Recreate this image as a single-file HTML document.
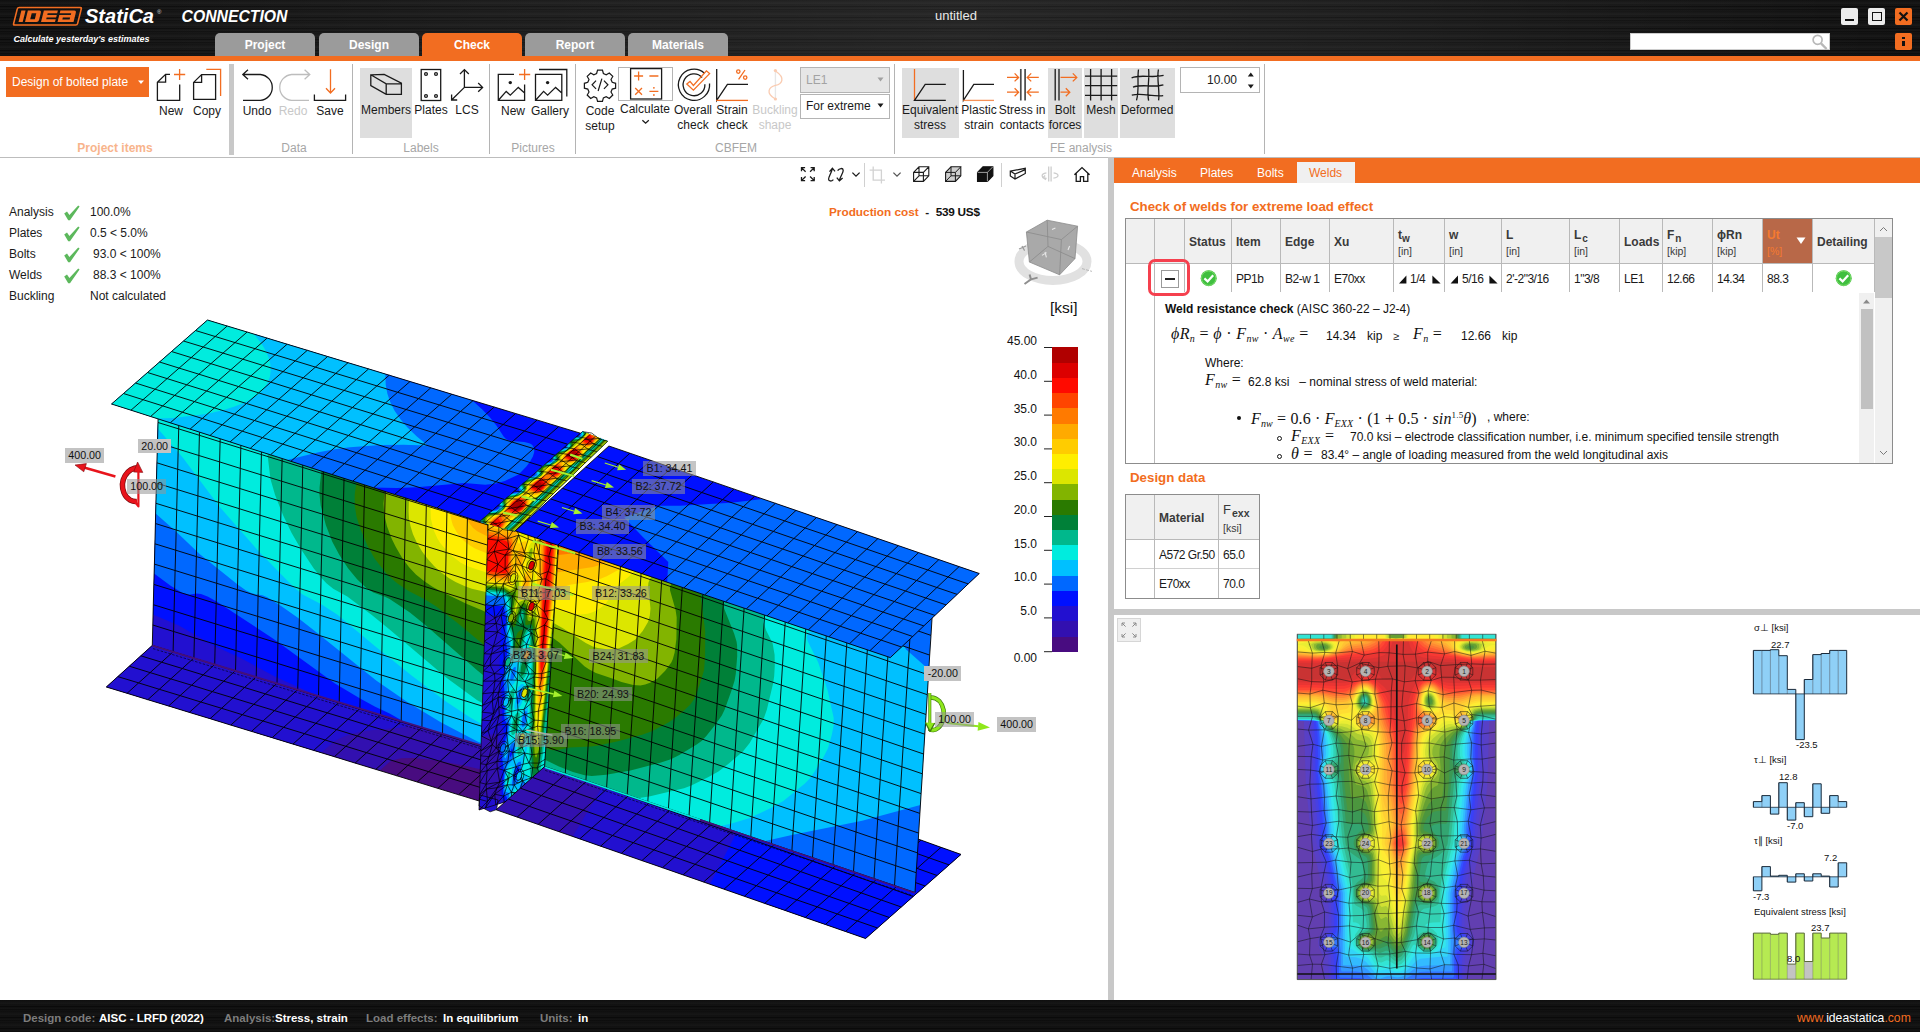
<!DOCTYPE html>
<html><head><meta charset="utf-8"><title>untitled</title>
<style>
*{box-sizing:border-box;margin:0;padding:0}
html,body{width:1920px;height:1032px;overflow:hidden;background:#fff;font-family:"Liberation Sans",sans-serif;font-size:12px;color:#1a1a1a}
.abs{position:absolute}
#hdr{position:absolute;left:0;top:0;width:1920px;height:56px;background:#111;
 background-image:repeating-linear-gradient(180deg,#050505 0,#1c1c1c 1px,#0a0a0a 2px,#232323 3px,#0d0d0d 4px,#181818 5px,#060606 7px,#202020 8px,#0b0b0b 9px,#151515 11px);}
#oline{position:absolute;left:0;top:56px;width:1920px;height:5px;background:#f26d21}
.tab{position:absolute;top:33px;height:23px;width:100px;background:#9b9b9b;border-radius:5px 5px 0 0;color:#fff;font-weight:bold;font-size:12px;text-align:center;line-height:24px}
.tab.on{background:#f26d21}
#ribbon{position:absolute;left:0;top:61px;width:1920px;height:96px;background:#fff}
.rl{position:absolute;font-size:12px;color:#1a1a1a;text-align:center;white-space:nowrap;line-height:15px;transform:translateX(-50%)}
.rl.dis{color:#c8c8c8}
.gl{position:absolute;top:141px;font-size:12px;color:#a6a6a6;transform:translateX(-50%);white-space:nowrap;line-height:15px}
.sep{position:absolute;top:64px;height:90px;width:1px;background:#b4b4b4}
.hl{position:absolute;background:#dedede}
svg{position:absolute;overflow:visible}
.ic{fill:none;stroke:#1a1a1a;stroke-width:1.3;stroke-linecap:butt;stroke-linejoin:miter}
.or{stroke:#f26d21}
.gr{stroke:#bdbdbd}
#status{position:absolute;left:0;top:1000px;width:1920px;height:32px;background:#0e0e0e;
 background-image:repeating-linear-gradient(180deg,#050505 0,#1a1a1a 1px,#0a0a0a 2px,#1f1f1f 3px,#0d0d0d 4px,#161616 5px,#060606 7px,#1c1c1c 8px,#0b0b0b 9px,#141414 11px);}
.st{position:absolute;top:1011px;font-size:11.5px;line-height:15px;white-space:nowrap}
.stg{color:#7d7d7d;font-weight:bold}
.stw{color:#fff;font-weight:bold}
.chk{position:absolute;left:9px;font-size:12px;line-height:15px;white-space:nowrap}
.chv{position:absolute;left:90px;font-size:12px;line-height:15px;white-space:nowrap}
table{border-collapse:collapse}
.th{position:absolute;font-weight:bold;font-size:12px;color:#3a3a3a;white-space:nowrap;line-height:14px}
.tu{position:absolute;font-size:10.5px;color:#3a3a3a;white-space:nowrap;line-height:12px;font-weight:normal}
.td{position:absolute;font-size:12px;color:#1a1a1a;white-space:nowrap;line-height:14px;letter-spacing:-.5px}
.vl{position:absolute;width:1px;background:#b9b9b9}
.hln{position:absolute;height:1px;background:#b9b9b9}
.m{font-family:"Liberation Serif",serif;font-style:italic;letter-spacing:.35px}
.mr{font-family:"Liberation Serif",serif;font-style:normal}
.ft{position:absolute;white-space:nowrap;font-size:12px;line-height:14px;color:#111}
.lab{position:absolute;background:#c3c3c3;font-size:10.7px;line-height:14.6px;padding:0 3.3px;color:#111;white-space:nowrap}
.labt{position:absolute;background:rgba(150,150,150,.55);font-size:10.7px;line-height:14.7px;padding:0 3.6px;color:#111;white-space:nowrap}
.lg{position:absolute;font-size:12px;line-height:14px;text-align:right;width:50px;left:987px;color:#111}
.cl{position:absolute;font-size:9.5px;line-height:11px;white-space:nowrap;color:#111}
</style></head><body>
<div id="hdr"></div>
<div class="abs" style="left:0;top:0;width:1920px;height:56px;background:linear-gradient(90deg,rgba(255,255,255,0) 0%,rgba(255,255,255,.05) 25%,rgba(255,255,255,.085) 50%,rgba(255,255,255,.06) 70%,rgba(255,255,255,0) 100%)"></div>
<!-- logo -->
<svg style="left:0;top:0" width="320" height="56" viewBox="0 0 320 56">
 <g transform="skewX(-14)">
  <rect x="19.5" y="7.5" width="64" height="17.5" rx="1.5" fill="none" stroke="#f26d21" stroke-width="1.6"/>
  <!-- I -->
  <rect x="24" y="10.5" width="4.2" height="11.5" fill="#f26d21"/>
  <!-- D -->
  <path d="M30.5 10.5h11.5q2 0 2 2v7.5q0 2-2 2h-11.5zM35 13.2v6h4.6v-6z" fill="#f26d21" fill-rule="evenodd"/>
  <!-- E -->
  <path d="M46.5 10.5h14v2.8h-9.5v1.6h9.5v2.6h-9.5v1.7h9.5v2.8h-14z" fill="#f26d21"/>
  <!-- A -->
  <path d="M63 10.5h14q2 0 2 2v9.5h-16v-7h11.5v-1.8h-11.5zM67.2 17.6v1.9h7.3v-1.9z" fill="#f26d21" fill-rule="evenodd"/>
 </g>
 <text x="85" y="23" font-family="Liberation Sans" font-weight="bold" font-style="italic" font-size="19.5" fill="#fff" textLength="69" lengthAdjust="spacingAndGlyphs">StatiCa</text>
 <text x="157" y="14" font-family="Liberation Sans" font-size="6" fill="#ddd">®</text>
 <text x="181.5" y="21.8" font-family="Liberation Sans" font-style="italic" font-weight="bold" font-size="16.4" fill="#fff" textLength="106" lengthAdjust="spacingAndGlyphs">CONNECTION</text>
 <text x="13.5" y="42" font-family="Liberation Sans" font-style="italic" font-weight="bold" font-size="9.5" fill="#fff" textLength="136" lengthAdjust="spacingAndGlyphs">Calculate yesterday's estimates</text>
</svg>
<div class="abs" style="left:860px;top:8px;width:192px;text-align:center;color:#e8e8e8;font-size:13px;line-height:16px">untitled</div>
<div class="tab" style="left:215px">Project</div>
<div class="tab" style="left:319px">Design</div>
<div class="tab on" style="left:422px">Check</div>
<div class="tab" style="left:525px">Report</div>
<div class="tab" style="left:628px">Materials</div>
<!-- window buttons -->
<div class="abs" style="left:1841px;top:8px;width:17px;height:17px;background:#ececec;border-radius:2px"></div>
<div class="abs" style="left:1845px;top:19px;width:9px;height:2px;background:#111"></div>
<div class="abs" style="left:1868px;top:8px;width:17px;height:17px;background:#ececec;border-radius:2px"></div>
<div class="abs" style="left:1872px;top:11.5px;width:9.5px;height:9.5px;border:1.6px solid #111"></div>
<div class="abs" style="left:1895px;top:8px;width:17px;height:17px;background:#f26d21;border-radius:2px"></div>
<svg style="left:1895px;top:8px" width="17" height="17"><path d="M4.5 4.5l8 8M12.5 4.5l-8 8" stroke="#111" stroke-width="2.2"/></svg>
<!-- search -->
<div class="abs" style="left:1630px;top:33px;width:200px;height:17px;background:#fff;border:1px solid #ccc"></div>
<svg style="left:1811px;top:33px" width="20" height="18"><circle cx="6.6" cy="6.8" r="4.5" fill="none" stroke="#b8b8b8" stroke-width="1.7"/><path d="M10 10.4l5.6 5.6" stroke="#b8b8b8" stroke-width="2.4"/></svg>
<div class="abs" style="left:1895px;top:33px;width:17px;height:17px;background:#f26d21;border-radius:2px"></div>
<div class="abs" style="left:1902.3px;top:37px;width:2.4px;height:2.4px;background:#111"></div>
<div class="abs" style="left:1902.3px;top:41px;width:2.4px;height:5px;background:#111"></div>
<div id="oline"></div>
<div id="ribbon"></div>
<div class="abs" style="left:0;top:157px;width:1114px;height:1px;background:#bdbdbd"></div>
<!-- project items -->
<div class="abs" style="left:6px;top:67px;width:143px;height:30px;background:#f26d21;color:#fff;font-size:12px;line-height:30px;padding-left:6px">Design of bolted plate</div>
<svg style="left:137px;top:80px" width="8" height="5"><path d="M1 0.5h6l-3 3.5z" fill="#fff"/></svg>
<div class="hl" style="left:360px;top:68px;width:52px;height:70px"></div>
<div class="hl" style="left:902px;top:68px;width:57px;height:70px"></div>
<div class="hl" style="left:1048px;top:68px;width:34px;height:70px"></div>
<div class="hl" style="left:1084px;top:68px;width:34px;height:70px"></div>
<div class="hl" style="left:1120px;top:68px;width:55px;height:70px"></div>
<svg style="left:0;top:61px" width="1300" height="96" viewBox="0 61 1300 96">
 <!-- New -->
 <path class="ic" d="M179.7 84.4V100.4H157.4V82.2L165.6 74.4H170M157.4 82.2H165.6V74.4"/>
 <path class="ic or" d="M179.6 69V80M174 74.5H185.2"/>
 <!-- Copy -->
 <path class="ic" d="M193.6 99.3V82.4L201.6 74.6H215.6V99.3ZM193.6 82.4H201.6V74.6"/>
 <path class="ic or" d="M206.3 69.4H220.6V96"/>
 <!-- Undo -->
 <path class="ic" d="M248 69.8L242.8 74.5L248 79.2M242.8 74.5H260.4A13 13 0 0 1 260.4 100.4H243"/>
 <!-- Redo -->
 <path class="ic gr" d="M304.6 69.8L309.8 74.5L304.6 79.2M309.8 74.5H291.6A13 13 0 0 0 291.6 100.4H309"/>
 <!-- Save -->
 <path class="ic" d="M314.4 94.4V100.4H345.6V94.4"/>
 <path class="ic or" d="M330.5 69.3V93M326 88.2L330.5 93L335 88.2"/>
 <!-- Members -->
 <path class="ic" d="M370.8 74.8L384.2 74.4L401.4 83.2V94.4H386.2L370.8 85.5ZM370.8 74.8L386.2 83.8H401.4M386.2 83.8V94.4"/>
 <!-- Plates -->
 <rect class="ic" x="421.2" y="69.5" width="19.5" height="31"/>
 <circle class="ic" cx="426" cy="74" r="1.4" stroke-width="1"/><circle class="ic" cx="436" cy="74" r="1.4" stroke-width="1"/><circle class="ic" cx="426" cy="96" r="1.4" stroke-width="1"/><circle class="ic" cx="436" cy="96" r="1.4" stroke-width="1"/>
 <!-- LCS -->
 <path class="ic" d="M464.4 69.6V87.4H482.6M464.4 87.4L451.6 100M460 74L464.4 69.6L468.8 74M478.2 83L482.6 87.4L478.2 91.8M451.6 94.5V100H457.2"/>
 <!-- New picture -->
 <path class="ic" d="M524.6 84.5V100.4H498.3V74.4H514M498.6 100L506.2 91.4L510.3 95.2L518.3 87.4L524.6 93"/>
 <circle cx="510.3" cy="82.6" r="1.7" fill="#1a1a1a"/>
 <path class="ic or" d="M524.6 69V80M519 74.5H530.2"/>
 <!-- Gallery -->
 <path class="ic" d="M535.5 74.4H561.8V100.4H535.5ZM535.8 100L543.6 91.4L547.6 95.2L555.6 87.4L561.8 93M539 69.5H566.8V96.4"/>
 <circle cx="547.6" cy="82.6" r="1.7" fill="#1a1a1a"/>
 <!-- Code setup gear -->
 <g transform="translate(600 84.8) scale(.94)">
  <path class="ic" stroke-linejoin="round" d="M-2.6 -15.6h5.2l1 3.6 3 1.3 3.3-1.9 3.7 3.7-1.9 3.3 1.3 3 3.6 1v5.2l-3.6 1-1.3 3 1.9 3.3-3.7 3.7-3.3-1.9-3 1.3-1 3.6h-5.2l-1-3.6-3-1.3-3.3 1.9-3.7-3.7 1.9-3.3-1.3-3-3.6-1v-5.2l3.6-1 1.3-3-1.9-3.3 3.7-3.7 3.3 1.9 3-1.3z"/>
  <path class="ic" d="M-4.2 -4.4L-8.4 0L-4.2 4.4M4.2 -4.4L8.4 0L4.2 4.4M2 -6.6L-2 6.6"/>
 </g>
 <!-- Calculate -->
 <rect x="618.5" y="67.5" width="54" height="33" fill="none" stroke="#b4b4b4" stroke-width="1"/>
 <rect class="ic" x="630.6" y="68.6" width="31" height="30.4" stroke-width="1.5"/>
 <path class="ic or" d="M638.6 71.5V80.5M634.1 76H643.1M649.4 76H658.4M635.2 88L642 94.8M642 88L635.2 94.8M649.4 91.4H658.4"/>
 <circle cx="653.9" cy="87.8" r="0.9" fill="#f26d21"/><circle cx="653.9" cy="95" r="0.9" fill="#f26d21"/>
 <path class="ic" d="M642.4 120.2L645.6 123.2L648.8 120.2" stroke-width="1.2"/>
 <!-- Overall check -->
 <path class="ic" d="M704.44 73.21A15.6 15.6 0 1 0 709.54 83.44M702.1 77.51A10.9 10.9 0 1 0 704.89 84.23"/>
 <path class="ic or" d="M686.8 84L693.4 90.2L709.6 73.6L706.4 70.8L693.4 85.4L690 81.4Z" stroke-width="1.25"/>
 <!-- Strain check -->
 <path class="ic" d="M716.7 69V100.4L727.4 84.4H748"/>
 <path class="ic or" d="M716.2 100.4H748"/>
 <g class="ic or" stroke-width="1.1"><circle cx="738.3" cy="71.6" r="1.7"/><circle cx="745.2" cy="77.6" r="1.7"/><path d="M745 70L738.6 79.4"/></g>
 <!-- Buckling shape -->
 <g opacity=".35"><path class="ic gr" d="M775.4 71V99" stroke="#999"/><path class="ic or" d="M775.4 71C786 78 782 84 775.4 85.4C769 87 765 93 775.4 99"/><circle cx="775.4" cy="70.6" r="1.6" fill="#f26d21"/><circle cx="775.4" cy="99" r="1.6" fill="#f26d21"/></g>
 <!-- Equivalent stress -->
 <path class="ic or" d="M914.5 69V100.4"/>
 <path class="ic" d="M945.8 100.4H914.5L925.2 84.4H945.8"/>
 <!-- Plastic strain -->
 <path class="ic" d="M963.4 70V100.4L973.8 84.4H994"/>
 <path class="ic or" d="M963 100.4H994" opacity=".75"/>
 <!-- Stress in contacts -->
 <path d="M1020.8 69V100.6M1025.1 69V100.6" stroke="#4a4a4a" stroke-width="1.7" fill="none"/>
 <path class="ic or" stroke-width="1.1" d="M1007 77.4H1018.6M1014.6 73.4L1018.6 77.4L1014.6 81.4M1007 92.2H1018.6M1014.6 88.2L1018.6 92.2L1014.6 96.2M1038.8 77.4H1027.2M1031.2 73.4L1027.2 77.4L1031.2 81.4M1038.8 92.2H1027.2M1031.2 88.2L1027.2 92.2L1031.2 96.2"/>
 <!-- Bolt forces -->
 <path class="ic" d="M1055.2 69V100.6M1059 69V100.6" stroke-width="1.2"/>
 <path class="ic or" stroke-width="1.1" d="M1060.5 77.4H1076.8M1072.8 73.4L1076.8 77.4L1072.8 81.4M1060.5 92.2H1069.8M1065.8 88.2L1069.8 92.2L1065.8 96.2"/>
 <!-- Mesh -->
 <path class="ic" stroke-width="1.2" d="M1090.6 69V100.6M1101.1 69V100.6M1111.6 69V100.6M1085 76.2H1117.2M1085 85.6H1117.2M1085 95.4H1117.2"/>
 <!-- Deformed -->
 <path class="ic" stroke-width="1.2" d="M1138.5 69.5C1137 80 1139.5 90 1136.5 100.4M1148.6 69C1149.8 80 1146.6 90 1148.6 100.6M1158.4 69.5C1156.6 80 1160 90 1158.6 100.4M1131.6 77.8C1141 74 1152 78.5 1163.6 75.4M1133 87.2C1142 83.6 1153 88 1163.4 84.8M1131.8 95.2C1142 92.6 1152 96.8 1163.2 95.6"/>
</svg>

<div class="rl" style="left:171px;top:104px">New</div>
<div class="rl" style="left:207px;top:104px">Copy</div>
<div class="rl" style="left:257px;top:104px">Undo</div>
<div class="rl dis" style="left:293px;top:104px">Redo</div>
<div class="rl" style="left:330px;top:104px">Save</div>
<div class="rl" style="left:386px;top:103px">Members</div>
<div class="rl" style="left:431px;top:103px">Plates</div>
<div class="rl" style="left:467px;top:103px">LCS</div>
<div class="rl" style="left:513px;top:104px">New</div>
<div class="rl" style="left:550px;top:104px">Gallery</div>
<div class="rl" style="left:600px;top:104px">Code<br>setup</div>
<div class="rl" style="left:645px;top:102px">Calculate</div>
<div class="rl" style="left:693px;top:103px">Overall<br>check</div>
<div class="rl" style="left:732px;top:103px">Strain<br>check</div>
<div class="rl dis" style="left:775px;top:103px">Buckling<br>shape</div>
<div class="rl" style="left:930px;top:103px">Equivalent<br>stress</div>
<div class="rl" style="left:979px;top:103px">Plastic<br>strain</div>
<div class="rl" style="left:1022px;top:103px">Stress in<br>contacts</div>
<div class="rl" style="left:1065px;top:103px">Bolt<br>forces</div>
<div class="rl" style="left:1101px;top:103px">Mesh</div>
<div class="rl" style="left:1147px;top:103px">Deformed</div>
<div class="gl" style="left:115px;color:#f8b48c;font-weight:bold">Project items</div>
<div class="gl" style="left:294px">Data</div>
<div class="gl" style="left:421px">Labels</div>
<div class="gl" style="left:533px">Pictures</div>
<div class="gl" style="left:736px">CBFEM</div>
<div class="gl" style="left:1081px">FE analysis</div>
<div class="abs" style="left:229px;top:64px;width:5px;height:91px;background:#c8c8c8"></div>
<div class="sep" style="left:352px"></div>
<div class="sep" style="left:489px"></div>
<div class="sep" style="left:575px"></div>
<div class="sep" style="left:894px"></div>
<div class="sep" style="left:1264px"></div>
<!-- dropdowns -->
<div class="abs" style="left:800px;top:67px;width:90px;height:26px;background:#e6e6e6;border:1px solid #b4b4b4;color:#a3a3a3;font-size:12px;line-height:24px;padding-left:5px">LE1</div>
<svg style="left:877px;top:77px" width="8" height="5"><path d="M0.5 0.5h6l-3 4z" fill="#a0a0a0"/></svg>
<div class="abs" style="left:800px;top:94px;width:90px;height:25px;background:#fff;border:1px solid #b4b4b4;color:#1a1a1a;font-size:12px;line-height:23px;padding-left:5px">For extreme</div>
<svg style="left:877px;top:103px" width="8" height="5"><path d="M0.5 0.5h6l-3 4z" fill="#1a1a1a"/></svg>
<!-- spinbox -->
<div class="abs" style="left:1180px;top:67px;width:80px;height:26px;background:#fff;border:1px solid #b4b4b4;color:#1a1a1a;font-size:12px;line-height:24px;text-align:right;padding-right:22px">10.00</div>
<svg style="left:1247px;top:72px" width="8" height="18"><path d="M0.8 4.6h6l-3-4z M0.8 12.4h6l-3 4z" fill="#1a1a1a"/></svg>
<!-- divider -->
<div class="abs" style="left:1108px;top:157px;width:6px;height:843px;background:#c8c8c8"></div>
<!-- checks -->
<div class="chk" style="top:205px">Analysis</div><div class="chv" style="top:205px">100.0%</div>
<div class="chk" style="top:226px">Plates</div><div class="chv" style="top:226px">0.5 &lt; 5.0%</div>
<div class="chk" style="top:247px">Bolts</div><div class="chv" style="top:247px;left:93px">93.0 &lt; 100%</div>
<div class="chk" style="top:268px">Welds</div><div class="chv" style="top:268px;left:93px">88.3 &lt; 100%</div>
<div class="chk" style="top:289px">Buckling</div><div class="chv" style="top:289px">Not calculated</div>
<svg style="left:62px;top:201px" width="20" height="90">
 <g fill="#5cb85c"><path id="ck" d="M2.2 12.6L5 10.6L7.4 14L16.2 4.4L17.6 5.4L8 19.2L6.2 19.2Z"/>
 <use href="#ck" y="21"/><use href="#ck" y="42"/><use href="#ck" y="63"/></g>
</svg>
<!-- viewport toolbar -->
<svg style="left:790px;top:160px" width="310" height="30" viewBox="790 160 310 30">
 <g class="ic" stroke-width="1.2">
  <!-- fullscreen -->
  <path d="M801.5 171.2V167.6H805.1M801.5 167.6L805.6 171.7M810.6 167.6H814.2V171.2M814.2 167.6L810.1 171.7M801.5 177V180.6H805.1M801.5 180.6L805.6 176.5M810.6 180.6H814.2V177M814.2 180.6L810.1 176.5"/>
  <!-- rotate -->
  <path d="M829.5 171.6L832.4 168.2L835 171.4M832.4 168.6C831 174 828.5 177 828.6 179.2C828.8 181.6 831.6 181.4 833.4 179.6M837.6 170.6C839.4 168 843 167.8 843.2 170.2C843.4 173 840.4 176 839.4 180.4M836.8 177.6L839.4 180.8L842.6 178"/>
  <path d="M852.4 172.6L856 176.2L859.6 172.6"/>
  <path d="M893.4 172.6L897 176.2L900.6 172.6" stroke="#555"/>
  <!-- crop (disabled) -->
  <path d="M873.2 166.6V180.2H885M869.6 170.2H881.4V183.6" stroke="#d2d2d2"/>
  <!-- wire cube -->
  <path d="M913.6 172.4L919 166.8H928.8V175.8L923.4 181.4H913.6ZM913.6 172.4H923.4V181.4M923.4 172.4L928.8 166.8M919 166.8V175.8H928.8M919 175.8L913.6 181.4" stroke-width="1.1"/>
  <!-- grey cube -->
  <path d="M945.6 172.4L951 166.8H960.8V175.8L955.4 181.4H945.6Z" fill="#cfcfcf" stroke-width="1.1"/>
  <path d="M945.6 172.4H955.4V181.4M955.4 172.4L960.8 166.8M951 166.8V175.8H960.8M951 175.8L945.6 181.4" stroke-width="1"/>
  <!-- black cube -->
  <path d="M977.6 172.4L983 166.8H992.8V175.8L987.4 181.4H977.6Z" fill="#111" stroke="#111"/>
  <path d="M977.6 172.4H987.4V181.4M987.4 172.4L992.8 166.8" stroke="#fff" stroke-width=".6"/>
  <!-- beam -->
  <path d="M1010.3 171.1L1025.3 168.3V173.5L1015 179.1L1010.3 175.9ZM1010.3 171.1L1015 174L1025.3 169.6M1015 174V179.1" stroke-width="1.2"/>
  <!-- mirror (disabled) -->
  <path d="M1048.7 166.4V181.6M1051.1 166.4V181.6M1046.4 172.8C1040.6 173.8 1040.8 177.6 1046.6 178.4M1053.6 172.8C1059.6 173.8 1059.4 177.4 1053.4 178.2M1045.2 175.6L1043 177.6L1046 179.6" stroke="#cdcdcd"/>
  <!-- home -->
  <path d="M1074.4 174.8L1082 167.6L1089.6 174.8M1076.2 173.4V181.4H1080.4V176.6H1083.6V181.4H1087.8V173.4"/>
 </g>
 <path d="M864.5 163V187M1001.5 163V187" stroke="#d0d0d0" stroke-width="1"/>
</svg>
<div class="abs" style="left:829px;top:204.5px;font-size:11.8px;font-weight:bold;line-height:15px;white-space:nowrap"><span style="color:#f26d21">Production cost</span>&nbsp; - &nbsp;<span style="color:#111;letter-spacing:-.3px">539 US$</span></div>
<!-- nav cube -->
<svg style="left:1005px;top:212px" width="100" height="80" viewBox="1005 212 100 80">
 <ellipse cx="1053" cy="261.5" rx="34" ry="19" fill="none" stroke="#e1e1e1" stroke-width="9"/>
 <path d="M1026.4 232L1047.2 220.2L1077.6 226.2L1075 258.6L1059.6 274.8L1029.4 262Z" fill="#a9a9a9" stroke="#8a8a8a" stroke-width=".8"/>
 <path d="M1026.4 232L1061.4 239.6L1077.6 226.2M1061.4 239.6L1059.6 274.8M1047.2 220.2L1048 246.4L1029.4 262M1048 246.4L1075 258.6" fill="none" stroke="#8a8a8a" stroke-width=".8"/>
 <path d="M1019 249L1026 246M1022 246L1024.6 250.6" stroke="#9a9a9a" stroke-width="1.2" fill="none"/>
 <path d="M1024.5 284L1031 279.4L1029.6 274.4M1031 279.4L1037.6 277.6" stroke="#8f8f8f" stroke-width="2" fill="none"/>
 <path d="M1082 268.6L1092 271.4" stroke="#aaa" stroke-width=".8" stroke-dasharray="3 1.2"/>
 <path d="M1042 255.4L1046.6 252.6M1045 252L1046.4 257.4M1052 229.4L1055.4 228M1068 250L1069.6 246" stroke="#e8e8e8" stroke-width="1.1" fill="none"/>
</svg>
<div class="abs" style="left:1050px;top:299px;font-size:15.5px;line-height:18px;color:#111">[ksi]</div>
<!-- legend -->
<svg style="left:1040px;top:340px" width="45" height="320" viewBox="1040 340 45 320">
 <g shape-rendering="crispEdges">
 <rect x="1052" y="347" width="26" height="16" fill="#b00000"/>
 <rect x="1052" y="362.6" width="26" height="16" fill="#dc0000"/>
 <rect x="1052" y="377.8" width="26" height="16" fill="#ff0a00"/>
 <rect x="1052" y="393" width="26" height="16" fill="#ff4400"/>
 <rect x="1052" y="408.2" width="26" height="16" fill="#ff7a00"/>
 <rect x="1052" y="423.5" width="26" height="16" fill="#ffaa00"/>
 <rect x="1052" y="438.7" width="26" height="16" fill="#ffcc00"/>
 <rect x="1052" y="453.9" width="26" height="16" fill="#ffee00"/>
 <rect x="1052" y="469.1" width="26" height="16" fill="#dce600"/>
 <rect x="1052" y="484.3" width="26" height="16" fill="#82b400"/>
 <rect x="1052" y="499.5" width="26" height="16" fill="#2a7a00"/>
 <rect x="1052" y="514.8" width="26" height="16" fill="#008038"/>
 <rect x="1052" y="530" width="26" height="16" fill="#00b88c"/>
 <rect x="1052" y="545.2" width="26" height="16" fill="#00ecde"/>
 <rect x="1052" y="560.4" width="26" height="16" fill="#00c0ff"/>
 <rect x="1052" y="575.6" width="26" height="16" fill="#0068ff"/>
 <rect x="1052" y="590.8" width="26" height="16" fill="#0010ff"/>
 <rect x="1052" y="606" width="26" height="16" fill="#2210d0"/>
 <rect x="1052" y="621.3" width="26" height="16" fill="#3210b0"/>
 <rect x="1052" y="636.5" width="26" height="15.5" fill="#480c80"/>
 </g>
 <path d="M1044 347.5H1052M1044 381.3H1052M1044 415.1H1052M1044 448.9H1052M1044 482.7H1052M1044 516.5H1052M1044 550.3H1052M1044 584.1H1052M1044 617.9H1052M1044 651.7H1052" stroke="#222" stroke-width="1"/>
</svg>
<div class="lg" style="top:334px">45.00</div>
<div class="lg" style="top:368px">40.0</div>
<div class="lg" style="top:402px">35.0</div>
<div class="lg" style="top:435px">30.0</div>
<div class="lg" style="top:469px">25.0</div>
<div class="lg" style="top:503px">20.0</div>
<div class="lg" style="top:537px">15.0</div>
<div class="lg" style="top:570px">10.0</div>
<div class="lg" style="top:604px">5.0</div>
<div class="lg" style="top:651px">0.00</div>
<svg style="left:0;top:300px" width="1040" height="680" viewBox="0 300 1040 680">
<g stroke-linejoin="round">
<path d="M198.3 603.8L571 718L479.2 801L106.3 687Z" fill="#480c80"/>
<path d="M198.3 603.8L493.8 694.3L571 718L506.7 776.1L485.1 770.2L459.9 764.7L432.5 760L414 758L401.1 758.3L392.3 760.4L389.1 762.2L379.8 770.6L106.3 687Z" fill="#3210b0" fill-rule="evenodd"/>
<path d="M198.3 603.8L456.3 682.9L457.4 683.2L410.8 725.2L403.7 727.3L365.7 730.8L349.2 734.5L341.1 737.7L334.5 741.3L321.2 752.7L106.3 687Z" fill="#2210d0" fill-rule="evenodd"/>
<path d="M198.3 603.8L186.8 614.2L175.3 624.6L163.8 635L152.3 645.4L140.8 655.8L129.3 666.2L117.8 676.6L106.3 687M219.1 610.2L207.6 620.6L196.1 631L184.6 641.4L173.1 651.8L161.6 662.2L150.1 672.6L138.6 682.9L127.1 693.3M239.8 616.5L228.3 626.9L216.8 637.3L205.3 647.7L193.8 658.1L182.3 668.5L170.8 678.9L159.3 689.3L147.8 699.7M260.5 622.9L249 633.3L237.5 643.7L226 654.1L214.6 664.5L203.1 674.9L191.6 685.2L180.1 695.6L168.6 706M281.3 629.2L269.8 639.6L258.3 650L246.8 660.4L235.3 670.8L223.8 681.2L212.3 691.6L200.8 702L189.3 712.4M302 635.6L290.5 646L279 656.4L267.5 666.8L256 677.1L244.5 687.5L233 697.9L221.6 708.3L210.1 718.7M322.7 641.9L311.2 652.3L299.7 662.7L288.3 673.1L276.8 683.5L265.3 693.9L253.8 704.3L242.3 714.7L230.8 725.1M343.4 648.3L332 658.7L320.5 669.1L309 679.4L297.5 689.8L286 700.2L274.5 710.6L263 721L251.5 731.4M364.2 654.6L352.7 665L341.2 675.4L329.7 685.8L318.2 696.2L306.7 706.6L295.2 717L283.7 727.3L272.2 737.7M384.9 661L373.4 671.4L361.9 681.7L350.4 692.1L338.9 702.5L327.4 712.9L315.9 723.3L304.5 733.7L293 744.1M405.6 667.3L394.1 677.7L382.6 688.1L371.1 698.5L359.6 708.9L348.1 719.2L336.7 729.6L325.2 740L313.7 750.4M426.3 673.7L414.8 684L403.3 694.4L391.8 704.8L380.3 715.2L368.8 725.6L357.4 736L345.9 746.3L334.4 756.7M447 680L435.5 690.4L424 700.8L412.5 711.1L401 721.5L389.5 731.9L378.1 742.3L366.6 752.7L355.1 763.1M467.6 686.3L456.2 696.7L444.7 707.1L433.2 717.5L421.7 727.9L410.2 738.2L398.8 748.6L387.3 759L375.8 769.4M488.3 692.7L476.8 703L465.4 713.4L453.9 723.8L442.4 734.2L430.9 744.6L419.4 755L408 765.3L396.5 775.7M509 699L497.5 709.4L486 719.8L474.6 730.1L463.1 740.5L451.6 750.9L440.1 761.3L428.7 771.7L417.2 782M529.7 705.3L518.2 715.7L506.7 726.1L495.2 736.5L483.8 746.8L472.3 757.2L460.8 767.6L449.3 778L437.9 788.4M550.3 711.7L538.9 722L527.4 732.4L515.9 742.8L504.4 753.2L493 763.6L481.5 773.9L470 784.3L458.5 794.7M571 718L559.5 728.4L548 738.8L536.6 749.1L525.1 759.5L513.6 769.9L502.1 780.3L490.7 790.6L479.2 801M198.3 603.8L219.1 610.2L239.8 616.5L260.5 622.9L281.3 629.2L302 635.6L322.7 641.9L343.4 648.3L364.2 654.6L384.9 661L405.6 667.3L426.3 673.7L447 680L467.6 686.3L488.3 692.7L509 699L529.7 705.3L550.3 711.7L571 718M186.8 614.2L207.6 620.6L228.3 626.9L249 633.3L269.8 639.6L290.5 646L311.2 652.3L332 658.7L352.7 665L373.4 671.4L394.1 677.7L414.8 684L435.5 690.4L456.2 696.7L476.8 703L497.5 709.4L518.2 715.7L538.9 722L559.5 728.4M175.3 624.6L196.1 631L216.8 637.3L237.5 643.7L258.3 650L279 656.4L299.7 662.7L320.5 669.1L341.2 675.4L361.9 681.7L382.6 688.1L403.3 694.4L424 700.8L444.7 707.1L465.4 713.4L486 719.8L506.7 726.1L527.4 732.4L548 738.8M163.8 635L184.6 641.4L205.3 647.7L226 654.1L246.8 660.4L267.5 666.8L288.3 673.1L309 679.4L329.7 685.8L350.4 692.1L371.1 698.5L391.8 704.8L412.5 711.1L433.2 717.5L453.9 723.8L474.6 730.1L495.2 736.5L515.9 742.8L536.6 749.1M152.3 645.4L173.1 651.8L193.8 658.1L214.6 664.5L235.3 670.8L256 677.1L276.8 683.5L297.5 689.8L318.2 696.2L338.9 702.5L359.6 708.9L380.3 715.2L401 721.5L421.7 727.9L442.4 734.2L463.1 740.5L483.8 746.8L504.4 753.2L525.1 759.5M140.8 655.8L161.6 662.2L182.3 668.5L203.1 674.9L223.8 681.2L244.5 687.5L265.3 693.9L286 700.2L306.7 706.6L327.4 712.9L348.1 719.2L368.8 725.6L389.5 731.9L410.2 738.2L430.9 744.6L451.6 750.9L472.3 757.2L493 763.6L513.6 769.9M129.3 666.2L150.1 672.6L170.8 678.9L191.6 685.2L212.3 691.6L233 697.9L253.8 704.3L274.5 710.6L295.2 717L315.9 723.3L336.7 729.6L357.4 736L378.1 742.3L398.8 748.6L419.4 755L440.1 761.3L460.8 767.6L481.5 773.9L502.1 780.3M117.8 676.6L138.6 682.9L159.3 689.3L180.1 695.6L200.8 702L221.6 708.3L242.3 714.7L263 721L283.7 727.3L304.5 733.7L325.2 740L345.9 746.3L366.6 752.7L387.3 759L408 765.3L428.7 771.7L449.3 778L470 784.3L490.7 790.6M106.3 687L127.1 693.3L147.8 699.7L168.6 706L189.3 712.4L210.1 718.7L230.8 725.1L251.5 731.4L272.2 737.7L293 744.1L313.7 750.4L334.4 756.7L355.1 763.1L375.8 769.4L396.5 775.7L417.2 782L437.9 788.4L458.5 794.7L479.2 801" fill="none" stroke="#000" stroke-width="0.95" stroke-opacity="0.95"/>
<path d="M159.5 362L530 477.5L525 760L152.3 645.4Z" fill="#2210d0"/>
<path d="M159.5 362L530 477.5L525 760L327.7 699.3L314.6 694.5L274.8 676.5L239.7 657.5L216 646.8L178.9 625.6L153.1 614.5Z" fill="#0010ff" fill-rule="evenodd"/>
<path d="M159.5 362L530 477.5L525 760L408.9 724.3L405.9 722.8L389.6 713.6L375.2 706.7L360.1 698.4L335 683.4L273.3 638.7L217.4 602L208.1 596.8L201 594.1L196.3 593.5L189.2 594.8L182.1 592.7L170.6 585.7L154.1 573.4Z" fill="#0068ff" fill-rule="evenodd"/>
<path d="M159.5 362L530 477.5L525.2 750.2L494.8 746.4L485.4 744.4L478.4 742.1L441.2 722.6L407.3 702.1L376.2 680.4L313.2 629.7L297.5 617.6L281.1 605.9L267.2 597.2L262.5 595.3L255.4 594.2L250.7 592.8L246.1 590.5L237.6 584.6L199.6 554L176.5 531.9L155.7 513.5Z" fill="#00c0ff" fill-rule="evenodd"/>
<path d="M159.5 362L530 477.5L525.5 731.6L499.8 728.7L490.4 727L481.1 723.7L469.5 717.1L446.3 701.8L411.6 675.5L374.5 645.8L337.5 614.8L321.3 604.3L302.6 594.6L293.4 586.8L258.8 551.4L219.6 506.8L183.1 457.9L157.8 428.4Z" fill="#00ecde" fill-rule="evenodd"/>
<path d="M237.2 386.2L530 477.5L525.8 713.9L490.8 706.5L483.8 703.9L476.9 699.9L446.8 678.1L389 629L372.1 615.3L347.3 596.6L333.2 588.8L326.4 583.2L321.5 578L313.8 568.4L301.7 550.2L291.5 532.7L283.2 515.6L275.1 495.1L270.5 479.3L266 441.9L263.9 431.4L261.3 422.5L257.8 414.2L252.8 405.1L246.3 396.2Z" fill="#00b88c" fill-rule="evenodd"/>
<path d="M319.6 411.9L530 477.5L526.2 694.8L500.6 685.3L491.3 680.6L484.3 676.1L477.4 670.6L424.4 624.2L409.9 612.6L389.6 599.1L385 596.8L373.3 592.5L366.3 587.9L357.1 579.3L348 568.2L339.1 554.6L332.3 541.7L325.9 525.3L320.7 505.7L319.5 494.5L319.6 487.3L323.3 452.5L324 438.4L322.6 423.6Z" fill="#008038" fill-rule="evenodd"/>
<path d="M358.6 424.1L530 477.5L526.5 673.3L512.6 665.7L496.4 654.7L484.9 645.8L457.2 622.7L435.9 606.2L424.8 599.2L408.6 591.1L397.5 583.5L390.5 577.7L385.4 572.6L374.4 558.3L367.4 545.4L360.3 528.7L356.5 516.8L354.7 505.4L354.7 494.6L359.1 463.7L360.4 449.7L360.3 435.4Z" fill="#2a7a00" fill-rule="evenodd"/>
<path d="M385.6 432.5L530 477.5L527 648.8L515.5 638.7L498.7 622L490.2 614.7L483.2 610.7L466.9 604.1L439.1 590.5L432.1 586.5L423.7 580.8L415.9 574.6L409.1 567.2L402.2 557.9L395.8 546.9L391.6 538.5L387 526.2L384.2 514.6L383.5 503.6L386.4 475.8L387.2 458.1L386.8 443.6Z" fill="#82b400" fill-rule="evenodd"/>
<path d="M408.7 439.7L530 477.5L527.5 620.6L509 604.8L502.1 599.9L495.2 595.8L485.9 591.9L471.9 588.7L464.9 586.2L455.6 582L448.7 577.9L439.9 571.4L434 566L428 559.3L422.1 551.5L416.9 542.7L413 534.3L410.6 526.4L409 518.7L408.6 511.4L410 465.2Z" fill="#dce600" fill-rule="evenodd"/>
<path d="M430.1 446.4L530 477.5L527.9 597.3L511.7 585.7L497.9 577.5L486.3 572.4L467.7 566.2L460.7 562.7L449.2 553.8L440 542.7L437.3 538.2L433.6 529.9L430.8 518.3L430.1 489.4Z" fill="#ffee00" fill-rule="evenodd"/>
<path d="M450.5 452.7L530 477.5L528.2 577.4L514.4 568.4L498.2 559.1L488.9 554.3L475 548.5L470.4 545.8L465.8 542.6L461.4 538.6L456.6 532.1L452.9 525.2L451.6 521.1L450 513.5L448 498.5L447.9 484.1L450 463.3Z" fill="#ffcc00" fill-rule="evenodd"/>
<path d="M469.6 458.7L530 477.5L528.6 559.3L489.2 537.3L477.7 531.6L473.1 527.9L469.2 523L467.1 518.8L464.4 510.8L462.9 499.6L463.7 489.1L469.2 465.7Z" fill="#ffaa00" fill-rule="evenodd"/>
<path d="M486.5 463.9L530 477.5L528.9 541.9L510.4 532.6L487.2 522.6L482.6 519.6L479.6 515.5L478.2 507.9L478.8 500.9L484.7 477.7Z" fill="#ff7a00" fill-rule="evenodd"/>
<path d="M505 469.7L530 477.5L529.2 521.1L515.4 511.2L511.8 507.6L508.6 502.7L507 499L505.6 491.3Z" fill="#ff4400" fill-rule="evenodd"/>
<path d="M159.5 362L159 382.1L158.5 402.3L158 422.5L157.5 442.6L156.9 462.8L156.4 483.1L155.9 503.3L155.4 523.5L154.9 543.8L154.4 564.1L153.8 584.4L153.3 604.7L152.8 625L152.3 645.4M180.2 368.5L179.7 388.6L179.2 408.7L178.7 428.9L178.2 449.1L177.7 469.3L177.2 489.5L176.7 509.7L176.2 530L175.7 550.2L175.1 570.5L174.6 590.8L174.1 611.1L173.6 631.5L173.1 651.8M200.9 374.9L200.4 395L199.9 415.2L199.4 435.3L198.9 455.5L198.4 475.7L197.9 495.9L197.4 516.1L196.9 536.4L196.4 556.6L195.9 576.9L195.4 597.2L194.9 617.5L194.4 637.9L193.9 658.2M221.5 381.3L221.1 401.5L220.6 421.6L220.1 441.8L219.6 461.9L219.1 482.1L218.6 502.3L218.1 522.6L217.6 542.8L217.2 563L216.7 583.3L216.2 603.6L215.7 623.9L215.2 644.2L214.7 664.6M242.2 387.8L241.7 407.9L241.2 428L240.8 448.2L240.3 468.4L239.8 488.5L239.3 508.7L238.8 529L238.4 549.2L237.9 569.5L237.4 589.7L236.9 610L236.4 630.3L236 650.6L235.5 671M262.8 394.2L262.4 414.3L261.9 434.5L261.4 454.6L261 474.8L260.5 495L260 515.2L259.5 535.4L259.1 555.6L258.6 575.9L258.1 596.1L257.7 616.4L257.2 636.7L256.7 657L256.2 677.4M283.5 400.6L283 420.8L282.5 440.9L282.1 461L281.6 481.2L281.2 501.4L280.7 521.6L280.2 541.8L279.8 562L279.3 582.3L278.8 602.5L278.4 622.8L277.9 643.1L277.5 663.4L277 683.7M304.1 407.1L303.6 427.2L303.2 447.3L302.7 467.4L302.3 487.6L301.8 507.8L301.4 528L300.9 548.2L300.5 568.4L300 588.6L299.6 608.9L299.1 629.2L298.6 649.5L298.2 669.8L297.7 690.1M324.7 413.5L324.2 433.6L323.8 453.7L323.3 473.9L322.9 494L322.5 514.2L322 534.4L321.6 554.6L321.1 574.8L320.7 595L320.2 615.3L319.8 635.6L319.3 655.9L318.9 676.2L318.5 696.5M345.3 419.9L344.8 440L344.4 460.1L344 480.3L343.5 500.4L343.1 520.6L342.7 540.8L342.2 561L341.8 581.2L341.4 601.4L340.9 621.7L340.5 641.9L340 662.2L339.6 682.5L339.2 702.9M365.8 426.3L365.4 446.4L365 466.5L364.6 486.7L364.1 506.8L363.7 527L363.3 547.2L362.9 567.4L362.4 587.6L362 607.8L361.6 628.1L361.2 648.3L360.7 668.6L360.3 688.9L359.9 709.2M386.4 432.7L386 452.8L385.6 472.9L385.2 493.1L384.7 513.2L384.3 533.4L383.9 553.6L383.5 573.7L383.1 594L382.7 614.2L382.2 634.4L381.8 654.7L381.4 675L381 695.3L380.6 715.6M407 439.1L406.5 459.2L406.1 479.3L405.7 499.5L405.3 519.6L404.9 539.8L404.5 559.9L404.1 580.1L403.7 600.3L403.3 620.6L402.9 640.8L402.5 661.1L402 681.3L401.6 701.6L401.2 721.9M427.5 445.5L427.1 465.6L426.7 485.7L426.3 505.9L425.9 526L425.5 546.1L425.1 566.3L424.7 586.5L424.3 606.7L423.9 626.9L423.5 647.2L423.1 667.4L422.7 687.7L422.3 708L421.9 728.3M448 451.9L447.6 472L447.2 492.1L446.9 512.2L446.5 532.4L446.1 552.5L445.7 572.7L445.3 592.9L444.9 613.1L444.5 633.3L444.1 653.5L443.7 673.8L443.3 694.1L442.9 714.3L442.5 734.6M468.5 458.3L468.2 478.4L467.8 498.5L467.4 518.6L467 538.8L466.6 558.9L466.2 579.1L465.9 599.3L465.5 619.4L465.1 639.7L464.7 659.9L464.3 680.1L463.9 700.4L463.6 720.7L463.2 741M489 464.7L488.7 484.8L488.3 504.9L487.9 525L487.5 545.1L487.2 565.3L486.8 585.4L486.4 605.6L486 625.8L485.7 646L485.3 666.3L484.9 686.5L484.5 706.8L484.2 727L483.8 747.3M509.5 471.1L509.2 491.2L508.8 511.3L508.4 531.4L508.1 551.5L507.7 571.7L507.3 591.8L507 612L506.6 632.2L506.2 652.4L505.9 672.6L505.5 692.8L505.1 713.1L504.8 733.4L504.4 753.7M530 477.5L529.6 497.6L529.3 517.7L528.9 537.8L528.6 557.9L528.2 578L527.9 598.2L527.5 618.3L527.1 638.5L526.8 658.7L526.4 679L526.1 699.2L525.7 719.4L525.4 739.7L525 760M159.5 362L180.2 368.5L200.9 374.9L221.5 381.3L242.2 387.8L262.8 394.2L283.5 400.6L304.1 407.1L324.7 413.5L345.3 419.9L365.8 426.3L386.4 432.7L407 439.1L427.5 445.5L448 451.9L468.5 458.3L489 464.7L509.5 471.1L530 477.5M159 382.1L179.7 388.6L200.4 395L221.1 401.5L241.7 407.9L262.4 414.3L283 420.8L303.6 427.2L324.2 433.6L344.8 440L365.4 446.4L386 452.8L406.5 459.2L427.1 465.6L447.6 472L468.2 478.4L488.7 484.8L509.2 491.2L529.6 497.6M158.5 402.3L179.2 408.7L199.9 415.2L220.6 421.6L241.2 428L261.9 434.5L282.5 440.9L303.2 447.3L323.8 453.7L344.4 460.1L365 466.5L385.6 472.9L406.1 479.3L426.7 485.7L447.2 492.1L467.8 498.5L488.3 504.9L508.8 511.3L529.3 517.7M158 422.5L178.7 428.9L199.4 435.3L220.1 441.8L240.8 448.2L261.4 454.6L282.1 461L302.7 467.4L323.3 473.9L344 480.3L364.6 486.7L385.2 493.1L405.7 499.5L426.3 505.9L446.9 512.2L467.4 518.6L487.9 525L508.4 531.4L528.9 537.8M157.5 442.6L178.2 449.1L198.9 455.5L219.6 461.9L240.3 468.4L261 474.8L281.6 481.2L302.3 487.6L322.9 494L343.5 500.4L364.1 506.8L384.7 513.2L405.3 519.6L425.9 526L446.5 532.4L467 538.8L487.5 545.1L508.1 551.5L528.6 557.9M156.9 462.8L177.7 469.3L198.4 475.7L219.1 482.1L239.8 488.5L260.5 495L281.2 501.4L301.8 507.8L322.5 514.2L343.1 520.6L363.7 527L384.3 533.4L404.9 539.8L425.5 546.1L446.1 552.5L466.6 558.9L487.2 565.3L507.7 571.7L528.2 578M156.4 483.1L177.2 489.5L197.9 495.9L218.6 502.3L239.3 508.7L260 515.2L280.7 521.6L301.4 528L322 534.4L342.7 540.8L363.3 547.2L383.9 553.6L404.5 559.9L425.1 566.3L445.7 572.7L466.2 579.1L486.8 585.4L507.3 591.8L527.9 598.2M155.9 503.3L176.7 509.7L197.4 516.1L218.1 522.6L238.8 529L259.5 535.4L280.2 541.8L300.9 548.2L321.6 554.6L342.2 561L362.9 567.4L383.5 573.7L404.1 580.1L424.7 586.5L445.3 592.9L465.9 599.3L486.4 605.6L507 612L527.5 618.3M155.4 523.5L176.2 530L196.9 536.4L217.6 542.8L238.4 549.2L259.1 555.6L279.8 562L300.5 568.4L321.1 574.8L341.8 581.2L362.4 587.6L383.1 594L403.7 600.3L424.3 606.7L444.9 613.1L465.5 619.4L486 625.8L506.6 632.2L527.1 638.5M154.9 543.8L175.7 550.2L196.4 556.6L217.2 563L237.9 569.5L258.6 575.9L279.3 582.3L300 588.6L320.7 595L341.4 601.4L362 607.8L382.7 614.2L403.3 620.6L423.9 626.9L444.5 633.3L465.1 639.7L485.7 646L506.2 652.4L526.8 658.7M154.4 564.1L175.1 570.5L195.9 576.9L216.7 583.3L237.4 589.7L258.1 596.1L278.8 602.5L299.6 608.9L320.2 615.3L340.9 621.7L361.6 628.1L382.2 634.4L402.9 640.8L423.5 647.2L444.1 653.5L464.7 659.9L485.3 666.3L505.9 672.6L526.4 679M153.8 584.4L174.6 590.8L195.4 597.2L216.2 603.6L236.9 610L257.7 616.4L278.4 622.8L299.1 629.2L319.8 635.6L340.5 641.9L361.2 648.3L381.8 654.7L402.5 661.1L423.1 667.4L443.7 673.8L464.3 680.1L484.9 686.5L505.5 692.8L526.1 699.2M153.3 604.7L174.1 611.1L194.9 617.5L215.7 623.9L236.4 630.3L257.2 636.7L277.9 643.1L298.6 649.5L319.3 655.9L340 662.2L360.7 668.6L381.4 675L402 681.3L422.7 687.7L443.3 694.1L463.9 700.4L484.5 706.8L505.1 713.1L525.7 719.4M152.8 625L173.6 631.5L194.4 637.9L215.2 644.2L236 650.6L256.7 657L277.5 663.4L298.2 669.8L318.9 676.2L339.6 682.5L360.3 688.9L381 695.3L401.6 701.6L422.3 708L442.9 714.3L463.6 720.7L484.2 727L504.8 733.4L525.4 739.7M152.3 645.4L173.1 651.8L193.9 658.2L214.7 664.6L235.5 671L256.2 677.4L277 683.7L297.7 690.1L318.5 696.5L339.2 702.9L359.9 709.2L380.6 715.6L401.2 721.9L421.9 728.3L442.5 734.6L463.2 741L483.8 747.3L504.4 753.7L525 760" fill="none" stroke="#000" stroke-width="0.95" stroke-opacity="0.95"/>
<path d="M488.3 520.5L558.5 537L543.5 790L479 810Z" fill="#3210b0"/>
<path d="M488.3 520.5L558.5 537L543.5 790L499 803.8L500.5 781.9L498.9 768.4L498.9 745.7L497.8 733.9L497 733.5L481.4 736.2Z" fill="#2210d0" fill-rule="evenodd"/>
<path d="M488.3 520.5L558.5 537L543.5 790L505.4 801.8L504.9 800.6L502.1 798.6L501.6 796.3L502.3 775.7L500.7 762.2L501.4 749.2L504.1 733.3L502 725.1L502.5 700.8L501.3 691L500.5 675.9L500.1 673L499.3 672.2L501.5 615.9L485.3 615Z" fill="#0010ff" fill-rule="evenodd"/>
<path d="M488.3 520.5L558.5 537L543.5 790L523.1 796.3L523.7 788.6L523.4 786.6L522.7 785.9L521.5 787.1L520.5 789.6L518.9 797.6L507.3 801.2L506.8 797L503.8 794.5L503.1 792L504 770.7L502.2 758.4L503.1 748.8L506.9 734L507.6 727.9L507.4 724.4L504.8 720L504.2 716.4L504.9 695.6L503.5 680.8L504.1 669.4L507.5 651.4L505.3 637.2L505.9 616.2L504.3 609.1L502.7 606.1L485.6 604.8ZM511.6 748.8L509.7 754.4L509.8 756.7L510.5 757L512.1 754.1L512.7 751.5L512.6 749.2L512.4 748.5ZM517.3 767L515.8 769.8L514.5 774.8L514.2 779.3L514.6 780.3L515.3 780.6L517.5 777.9L519.2 771.7L519.2 766.9L518.8 766.3Z" fill="#0068ff" fill-rule="evenodd"/>
<path d="M488.3 520.5L558.5 537L543.5 790L524.8 795.8L525 783.9L524.3 781.7L522.9 781.7L521.5 782.9L520 785.7L517.5 798.1L508.7 800.8L509.1 792.9L505.3 791.7L504.3 788.8L504.7 777.3L506.8 766.5L508 764.5L511.6 760.8L513.3 757L514.6 751.1L515.1 745.2L514.8 743.3L514.1 742.4L512.7 742.8L511.1 744.4L508.9 748.8L506 757.6L505.2 758.5L504.3 756.7L504.4 752.1L508.1 734.9L509.3 724.1L509 720.5L506.4 716.1L505.7 712.6L505.7 705.3L507.2 686.7L505.7 679.4L505.6 674.4L506.4 668L509.2 655.2L509.9 645L507.1 633.3L507.3 616.3L506.9 610.9L503.9 597.9L503.1 597L485.9 595.3ZM513.8 667.4L512.1 670.2L510.9 674L510.2 679.1L510.9 680.7L512.4 680.2L513.6 678.8L515.5 673.8L515.8 667.6L515.3 666.8ZM520.3 688.9L518.4 691.8L517 696.6L516.5 701.6L516.7 703.2L517.4 704.1L518.1 704L519.7 702.3L521.7 696.3L522.1 690.3L521.8 689.1L521.1 688.6ZM525.8 710.7L523.7 713.7L522.3 718.5L521.7 724.4L522.1 726.7L522.8 727L524.3 726L525.1 724.7L526.3 720.2L526.8 713.2L526.5 711.4ZM518.3 762.2L515.6 765.5L514 770.4L511.9 783.3L511.9 785.5L512.8 786.3L517.4 782.9L518.8 780.3L519.7 777.4L521 768.7L521.2 763.1L520.4 761.5Z" fill="#00c0ff" fill-rule="evenodd"/>
<path d="M488.3 520.5L558.5 537L545.4 757.9L538.8 791.5L529 794.5L526.8 773.9L523.1 777.4L522.1 777.2L521.7 775.1L523.6 759.2L526.8 749.5L527.1 740.4L526.4 741.2L524.1 752.4L523.1 754.8L519.8 757.8L516.2 759.8L515.4 758.8L515.4 756.6L517.3 737.7L516.6 737L515.9 737.2L509.8 740.8L509.3 739.4L511 717.9L510.3 715.6L507.9 713.4L507.2 711.2L506.8 706.4L507.4 699L509.8 688.8L514.6 682.4L515.8 679.9L517.3 672.8L518.1 665L517.8 662.4L516.5 661.3L514.8 662L510.8 664.8L510.3 664.1L511.3 642.4L508.4 630.8L508.3 611L506.1 597.4L505.3 596L503.2 594.8L486 593.1ZM521.3 684.1L518.3 687L516.5 691.8L514.3 705.5L514.3 707.9L514.9 709.4L517.2 708.9L519.5 707.2L521 705L522 702.2L523.5 693.7L524.2 686.5L523.5 683.9ZM527.2 638L525.8 642.5L526.1 645.2L527.5 643.7L528.2 641.3L528 637.6ZM524.5 707.6L522.8 710.3L521.6 715.2L519.5 728.3L519.7 732.6L521.9 731.8L524.9 729.5L526.1 727.1L527 723.6L528 715.4L528 708.4L527.4 706.7L526.7 706.4ZM509.4 767L511.6 765.9L512.3 766.2L512.3 770.8L509.9 783.8L508.5 787.3L506.9 788.4L506.2 788.1L505.4 786.2L505.6 778.2L507.1 771ZM514.8 789.1L516.3 788.5L517 789.5L516.1 798.5L510 800.4L511.8 793.1Z" fill="#00ecde" fill-rule="evenodd"/>
<path d="M488.3 520.5L558.5 537L548.4 707.9L544.4 743.6L540.3 771.2L536.6 788.2L535.1 791.8L533.7 793L532.5 791.8L531.4 787.8L529.9 770.7L529.3 747.9L529.8 702.4L529.1 700.9L525.5 702.5L524.7 701.9L524.3 699.5L526.4 684.1L527.3 681.3L530.1 676.5L531 672.8L531.8 664.4L531.6 657.2L530.7 655.6L529.5 657.2L526.9 671.9L525.3 676.6L522.2 679.9L519.2 680.8L518.5 679.7L518.5 674.8L521.6 655L514.2 658.3L513.4 658.2L512.5 656.4L512.5 638.6L509.9 630.4L509.3 626.9L509.3 607.1L507.8 597.6L505.7 594.5L503.2 593.1L486 591.4ZM527.5 632.3L525.9 635.1L524.3 640L521.9 654.7L527 651.2L529 647.4L530.1 640L530.1 633.8L529.7 632.1L529 631.5ZM511.5 690L512.8 688.8L513.6 688.8L514.3 689.5L514.4 694.6L512 707.7L511.2 709.4L509.6 710.1L508.3 707.4L508.3 701.4L509.5 694.5ZM516.2 713.6L518.5 712.4L519.5 713.1L519.8 716.6L518.8 723.7L517.7 728.6L516.1 732.3L513.8 734.7L512.3 735.1L511.5 734.3L511.2 732L512.1 723.6L513.8 716.9ZM521.7 735.9L523.9 734.7L524.6 735.4L524.3 743.4L522.4 750.8L520.8 753.4L518.6 754.9L517.9 754.6L517.4 752.7L517.9 745.8L519.4 739.8ZM508.2 773L509.1 771.8L509.9 772L510.1 775.9L508.7 782.3L507.9 783.6L507.2 783.6L506.7 779.1ZM513 796.2L513.9 794.9L514.6 795.4L514.2 799.1L512 799.8Z" fill="#00b88c" fill-rule="evenodd"/>
<path d="M488.3 520.5L558.5 537L550.3 669.4L541.6 751.7L537.4 775.1L535.8 780L534.4 781.2L533.2 779.1L532.2 773.4L531.3 754.1L531.6 718.3L533.2 658.3L532.9 652.3L531.4 645L531.3 630.1L530 627.7L528.5 628L526.4 630L524.4 634.3L519.9 650.5L517.5 653.5L515.9 654.4L514.4 654.1L513.5 650.1L513.9 634.8L511 628.2L510.3 624.3L510.6 604.5L509.8 597.8L506.5 593.5L504.1 591.7L486.1 589.6ZM521.7 611.5L520 614.3L518.9 618.2L518.6 623.3L519.5 624.6L521.9 622.7L523.7 617.2L523.5 612L522.5 611ZM524.5 658.6L526.2 658.2L526.9 659.7L526.5 665.9L524.8 672.4L523.2 675.1L521.7 676L521 675.6L520.4 673.5L520.9 667.3L522.4 661.8ZM527.1 688.6L528.5 685.9L529.1 686.7L529.2 690.8L528.4 694.4L527.2 696.9L526.5 696.7L526.3 695.8L526.4 692.2ZM511 696.2L511.8 695.4L512.2 698.5L511.5 702.5L510.6 703.9L509.9 702.8L509.9 701.2ZM516.2 718.3L517 718.2L517.5 719.3L517.2 723.8L515.5 728.5L514 729.7L513.3 728.1L513.6 724.6L514.5 720.9ZM521.1 741.7L522.2 741L522.5 743.7L521.9 746.5L520.3 749.2L519.6 748.8L519.6 746.6Z" fill="#008038" fill-rule="evenodd"/>
<path d="M488.3 520.5L558.5 537L552.2 643.5L550.2 657.8L541.2 744.3L538 762.7L535.7 769.2L535 769.3L534.4 768.3L533.8 765.4L532.6 747.2L534.4 657.1L534.2 645.1L532.6 626.4L532.3 625.2L530.9 624.1L526.4 625.3L525.3 624.9L525.5 610.8L524.9 607.8L523.5 606.5L521.9 607.2L520.2 609.4L517.9 615.5L515.7 624.9L514.8 626.6L513.2 626.9L511.7 624.5L511.2 620.4L512.5 599.3L512.1 596.6L504.2 590L486.1 587.9ZM520.8 629.8L522.4 629.7L522.8 631.1L521.3 641.2L519.2 647.5L517.6 649.7L516.1 650.2L515.3 649.4L514.9 646.3L515.9 636.9L517.7 632.4Z" fill="#2a7a00" fill-rule="evenodd"/>
<path d="M488.3 520.5L558.5 537L553.1 628.2L549.5 655.8L541 735.6L538.8 750.1L536.4 757.4L535.7 757.2L535.1 755.8L534.6 752.8L534 740.3L535.5 646.2L534.6 620.3L534.1 618.4L533.4 618.3L530.3 620.9L528.8 621L527.6 619.9L526.6 605.8L525.9 603.8L524.4 603L522 603.9L519.7 606.5L515.1 620.3L514.2 621.6L513.4 621.7L512.6 619.2L512.6 611.3L515.8 594.3L515.6 590.8L512.3 592.4L510.7 592.5L504.3 588.2L486.2 586.1ZM518 639.9L518.9 639L518.9 641.2L518 642.8Z" fill="#82b400" fill-rule="evenodd"/>
<path d="M488.3 520.5L523.5 528.8L523.9 529.9L524.9 529.1L558.5 537L553.9 614.8L550.5 638.8L541.7 721.3L539.4 737L537.8 744.1L537 745.3L536.4 744.9L535.7 741L535.1 725.6L536.6 635.2L536.5 617.9L535.9 612.2L535.2 610.3L534.5 610.5L531.2 616.6L529.7 617.1L529 616.3L528.4 613.6L528.1 602L526.8 599.9L525.3 599.8L521.4 601L518.2 602.8L515.4 612.3L514.6 613.1L514.8 607.6L517.3 601.1L518.5 593.3L518.9 582.7L518.4 580.7L517.6 580.3L516 582.2L513.6 587.4L512.4 588.9L510.8 589.7L509.2 589.4L504.3 586.5L486.2 584.4ZM530.9 548.2L529.5 550.7L528.6 554.6L528.6 558.6L529.5 559.6L531.2 557.8L532.5 552.6L532.4 548.5L531.7 547.8Z" fill="#dce600" fill-rule="evenodd"/>
<path d="M488.3 520.5L521 528.2L520.7 533.7L521.2 536.2L522 536.9L523.6 536.8L525.2 535.4L527.5 529.7L558.5 537L554.5 605.1L551.5 621.2L545.9 676.6L541.4 714.7L539.4 727.2L537.8 731.5L537.2 730.5L536.7 727.2L536.2 710.8L537.8 617.9L537 604.9L535.7 600.4L535 600.6L534.7 601.3L532.3 610.2L530.7 612.6L530 611.3L529.8 608.6L530.9 599.7L533.7 593.5L535 586.2L535.3 575.6L534.9 574L534.1 574.2L532.3 580.5L531.2 589.4L530 593.1L527.8 595.5L523.9 597.2L521.6 596.9L520.5 594.8L520.3 588.1L521 577.6L520.2 575.4L519.5 575L517 576L512.6 585.2L510.6 587.1L509.3 587L504.4 584.8L486.3 582.7ZM531.1 542.7L528.6 546.6L526.7 555.6L526.2 563.6L526.7 565L527.7 565.6L530.1 564.7L531.7 562.8L533 559.4L534 554.2L534.6 547.6L534.3 543.5L533.5 542.1Z" fill="#ffee00" fill-rule="evenodd"/>
<path d="M486.4 580.8L488.3 520.5L508.4 525.6L509.5 525.5L519.5 527.8L518 538.7L518.2 543L518.5 543.4L519.3 543.4L524.2 541.3L526.5 541.4L526.8 543.3L526 550L523 566.4L521.3 569.2L516.4 572.6L511.9 582.2L510.2 584.2L508.6 584.2L504.5 583ZM529.1 530.1L557 536.6L552.7 605.4L550.8 618.6L544.1 685.9L541.1 707.8L539.3 716.4L538.6 717.4L537.6 711.5L537.2 683L538.8 611.4L538.1 597.7L536.8 590L537.4 567.8L536.8 565L535.4 563.6L534.9 561L536.9 538.7L536 537L529 538.3L528.5 536.8ZM525.9 571.6L529.8 569.6L531.3 570.1L531.7 573.8L530.9 580.2L528.8 590.1L526.4 593.2L524.1 594L522.6 593L521.9 591L522.2 583.9L524.2 574.2Z" fill="#ffcc00" fill-rule="evenodd"/>
<path d="M513.2 526.4L517.9 527.5L512.8 554.4L512.5 561.3L513.7 571.1L511.3 578.2L509.5 580.3L507.1 580.7L486.4 578.4L488.1 527L505.7 530.9L509 532.5L510.8 531.5ZM531.1 530.6L533.3 531.1L535.3 531.6L533.9 533.1L532.4 533.2L531.6 532.5ZM541.7 533L556.7 536.6L553.2 593.1L550 618.6L546.6 657.9L542.9 688.1L541 699.2L540.1 702.4L539.4 703L538.1 689.2L538 665.3L539.7 616.8L539.2 589ZM520.7 547.6L522.3 546.7L523.1 546.9L523.9 548L523.8 555L521.6 563.5L519.9 565.8L518.3 566.2L516.5 564.7L516.5 560.6L518.2 552.6ZM526.8 575.7L528 575.1L529.1 576L529.2 581.3L527.4 588.7L525 590.4L524.2 590L523.5 588.5L523.7 584.6L524.8 579.4Z" fill="#ffaa00" fill-rule="evenodd"/>
<path d="M543.6 533.5L556.4 536.5L552.5 590.6L549.3 617.3L546 658L542.5 684.2L540.7 690.7L540.1 690.9L538.9 681.7L538.8 658.2L540.6 616.8L540.8 589.2ZM486.5 575.9L487.9 531.6L505.5 535.4L511.3 537.9L512.2 538.9L513 544.7L510.8 558.3L511.2 572.1L509.3 576L507.2 577.6L503.8 578.2Z" fill="#ff7a00" fill-rule="evenodd"/>
<path d="M545.1 533.9L555.1 536.2L551.2 590.4L548.5 617.3L545.3 658L543 674.3L541.3 681L540.6 681L539.9 677L539.5 658.2L541.4 618.1L542.1 589.3ZM486.6 573.4L487.9 534.4L505.4 538L508.7 540L510.7 542.8L511.2 544.3L509.2 560.8L509.2 571.9L507.4 574.4L505.6 575.5L503.9 575.7Z" fill="#ff4400" fill-rule="evenodd"/>
<path d="M546.5 534.2L553.8 535.9L544.7 656.8L543.6 664.4L541.8 671.3L541.2 670.9L540.7 667.8L540.3 656.9L543.3 590.8ZM486.7 570.9L487.8 537.1L505.3 540.7L507.6 542.2L509 543.9L507.3 571.6L505.7 572.9L504 573.3Z" fill="#ff0a00" fill-rule="evenodd"/>
<path d="M548 534.5L552.2 535.5L543.6 656.8L542.4 661.4L541.7 660.7L541.4 656.9Z" fill="#dc0000" fill-rule="evenodd"/>
<path d="M479 806L490.2 811.8L496.6 809.6L498 800L480 795Z" fill="#2210d0" stroke="#000" stroke-width=".7"/>
<path d="M488.3 520.5L488 529.8L487.7 539L487.2 553.9L487 559.6L486.6 573.9L486.3 582.9L486 590.7L485.6 604.6L485.4 610.9L485 624.1L484.7 631.2L484.4 641.3L484 653.7L483.6 666.6L483.5 670.8L483.1 681.2L482.7 693.8L482.4 705.6L482.1 712.2L481.9 720.1L481.5 733.6L481.4 735.9L480.9 750.9L480.7 755.8L480.5 763.7L480.2 772.4L479.9 782.6L479.5 794.9L479.3 799.2L479 810M498.8 523L498.8 532.6L497.9 540.3L494.2 551.4L498 564.3L495.1 575.5L495.7 583.5L497.5 597L493.5 605.7L495 618.1L496.1 623.4L497.5 631.9L493.3 646.5L491.2 654.1L490.1 665.1L494.5 673.6L495 681L493.4 692.5L492.3 700.8L493.5 713.4L491 720.8L488 730.5L491.3 741L492.3 744.6L489.1 756.7L486.5 764.6L487.2 770.7L486.1 784.2L486.4 789.1L487.5 801.5L485.4 808M507.5 525L507.6 538.7L508.9 549.2L505.2 555.1L505.1 569.1L508.8 573.8L503.4 583.8L503.3 595.8L505.2 604.1L501 614.9L503 625.8L506.2 636.5L503.1 645.4L503.9 650.6L504.7 665.3L504.2 674.7L500.9 681.2L498.7 692.3L498.2 697.4L498.8 707L499.3 715.2L496.8 725.2L497 735.5L496.1 748L499.5 750.9L496.9 761.4L497.3 768.4L499.7 782.1L497.2 787.7L494.7 794.2L495.8 804.8M515.5 526.9L518.8 535.1L513 550.6L516 554.8L515.7 563.8L514.9 581.2L516.6 589L512.6 595.8L511.4 608.5L513.3 618.3L511.8 623.5L514.1 638.8L514 646.8L513.4 655.5L509.5 663.2L510 668.8L507.6 679.9L508.5 691.8L512.3 698.6L511.7 711.3L511.6 715.7L506.9 724.1L506.4 732.7L508.3 745.7L509.3 751.1L507.8 762L504.1 770.3L508.5 778.3L507.3 784.8L503.6 796.1L504.2 802.2M527.7 529.8L528.3 539.1L524.2 552.7L526 556.8L521.9 565.8L525.9 581.3L520.9 590.5L525.5 599.2L521.4 607.6L519.8 612.9L524.1 627.2L521 638.5L520 647.2L522.1 651.5L518.3 661.3L517.7 672.4L517.5 680.2L516.1 692.6L517.2 698.1L518 709.8L516.6 718.7L516.8 724.6L516.7 729.7L515.8 739.4L512.7 752.5L513.4 758.6L516.1 766.7L513.5 775.3L514.3 784.9L511.4 792.3L511.9 799.8M533.2 531L535.6 541.6L533.8 553L535.5 560.6L533.2 570.3L532.1 581.2L531.3 589.4L530.8 601.8L531.7 610.8L532.8 615.5L529.9 629.6L531.4 632.8L526.7 644.1L526 651.6L525.4 663.7L529 674L525 681.7L527.6 686.2L528.2 700.4L524 709.4L524.8 714.6L527.5 724.9L522.6 731.4L524.2 738.8L522 747.4L524.6 753L523.1 764.2L519.8 772.4L522.7 780.8L519.1 792.7L522.8 796.4M545.4 533.9L540.1 540.6L539 554.1L540.1 559L540.1 574.5L542.1 579.2L537.6 593L539.6 600.8L536.6 605.1L539.4 617.1L535.3 629.7L538 637.7L534.4 647L533.9 655.9L535.7 661L535.6 673.7L533.9 677L534.8 686.2L532.1 694.5L531.3 703.3L532.2 712.3L534.2 720.2L532.4 728L531.2 735.4L530.3 743.7L532.2 754.7L528.9 763L532.6 767.7L531.4 777.9L529.2 788.8L528.3 794.7M550.8 535.2L551.1 548.5L548.7 556.4L550.2 564.6L548.2 571.5L545.9 578.8L545.2 592.5L545.9 597.5L544.2 611.4L548 619.3L544.5 625L544 635.4L542.8 644.1L542.7 656.4L546.1 662L541.6 673.6L541.7 678L539.6 686.8L541.6 695.8L539.7 704.3L538.3 711.2L538.2 720.3L537.6 726.1L538.5 735.4L539.4 745.1L539.7 753.7L539 763.1L537.1 767.9L539.8 773.8L537.8 785L534 793M558.5 537L557.8 548.8L557.2 558.4L556.8 565.7L556.2 575.5L555.6 585.1L555.4 589.3L554.7 601L554.2 609.7L553.5 620.8L553 629.3L552.5 638.1L552.1 645L551.5 655.7L551 662.8L550.5 671.3L550.2 676.5L549.8 683.6L549.3 692.5L548.7 702.2L548.3 708.7L547.6 721.6L547.2 727.8L546.7 736.3L546.2 744.2L545.7 752.4L545.3 759.1L545.1 763.8L544.3 776.5L543.9 783.9L543.5 790M488.3 520.5L498.8 523L507.5 525L515.5 526.9L527.7 529.8L533.2 531L545.4 533.9L550.8 535.2L558.5 537M488 529.8L498.8 532.6L507.6 538.7L518.8 535.1L528.3 539.1L535.6 541.6L540.1 540.6L551.1 548.5L557.8 548.8M487.7 539L497.9 540.3L508.9 549.2L513 550.6L524.2 552.7L533.8 553L539 554.1L548.7 556.4L557.2 558.4M487.2 553.9L494.2 551.4L505.2 555.1L516 554.8L526 556.8L535.5 560.6L540.1 559L550.2 564.6L556.8 565.7M487 559.6L498 564.3L505.1 569.1L515.7 563.8L521.9 565.8L533.2 570.3L540.1 574.5L548.2 571.5L556.2 575.5M486.6 573.9L495.1 575.5L508.8 573.8L514.9 581.2L525.9 581.3L532.1 581.2L542.1 579.2L545.9 578.8L555.6 585.1M486.3 582.9L495.7 583.5L503.4 583.8L516.6 589L520.9 590.5L531.3 589.4L537.6 593L545.2 592.5L555.4 589.3M486 590.7L497.5 597L503.3 595.8L512.6 595.8L525.5 599.2L530.8 601.8L539.6 600.8L545.9 597.5L554.7 601M485.6 604.6L493.5 605.7L505.2 604.1L511.4 608.5L521.4 607.6L531.7 610.8L536.6 605.1L544.2 611.4L554.2 609.7M485.4 610.9L495 618.1L501 614.9L513.3 618.3L519.8 612.9L532.8 615.5L539.4 617.1L548 619.3L553.5 620.8M485 624.1L496.1 623.4L503 625.8L511.8 623.5L524.1 627.2L529.9 629.6L535.3 629.7L544.5 625L553 629.3M484.7 631.2L497.5 631.9L506.2 636.5L514.1 638.8L521 638.5L531.4 632.8L538 637.7L544 635.4L552.5 638.1M484.4 641.3L493.3 646.5L503.1 645.4L514 646.8L520 647.2L526.7 644.1L534.4 647L542.8 644.1L552.1 645M484 653.7L491.2 654.1L503.9 650.6L513.4 655.5L522.1 651.5L526 651.6L533.9 655.9L542.7 656.4L551.5 655.7M483.6 666.6L490.1 665.1L504.7 665.3L509.5 663.2L518.3 661.3L525.4 663.7L535.7 661L546.1 662L551 662.8M483.5 670.8L494.5 673.6L504.2 674.7L510 668.8L517.7 672.4L529 674L535.6 673.7L541.6 673.6L550.5 671.3M483.1 681.2L495 681L500.9 681.2L507.6 679.9L517.5 680.2L525 681.7L533.9 677L541.7 678L550.2 676.5M482.7 693.8L493.4 692.5L498.7 692.3L508.5 691.8L516.1 692.6L527.6 686.2L534.8 686.2L539.6 686.8L549.8 683.6M482.4 705.6L492.3 700.8L498.2 697.4L512.3 698.6L517.2 698.1L528.2 700.4L532.1 694.5L541.6 695.8L549.3 692.5M482.1 712.2L493.5 713.4L498.8 707L511.7 711.3L518 709.8L524 709.4L531.3 703.3L539.7 704.3L548.7 702.2M481.9 720.1L491 720.8L499.3 715.2L511.6 715.7L516.6 718.7L524.8 714.6L532.2 712.3L538.3 711.2L548.3 708.7M481.5 733.6L488 730.5L496.8 725.2L506.9 724.1L516.8 724.6L527.5 724.9L534.2 720.2L538.2 720.3L547.6 721.6M481.4 735.9L491.3 741L497 735.5L506.4 732.7L516.7 729.7L522.6 731.4L532.4 728L537.6 726.1L547.2 727.8M480.9 750.9L492.3 744.6L496.1 748L508.3 745.7L515.8 739.4L524.2 738.8L531.2 735.4L538.5 735.4L546.7 736.3M480.7 755.8L489.1 756.7L499.5 750.9L509.3 751.1L512.7 752.5L522 747.4L530.3 743.7L539.4 745.1L546.2 744.2M480.5 763.7L486.5 764.6L496.9 761.4L507.8 762L513.4 758.6L524.6 753L532.2 754.7L539.7 753.7L545.7 752.4M480.2 772.4L487.2 770.7L497.3 768.4L504.1 770.3L516.1 766.7L523.1 764.2L528.9 763L539 763.1L545.3 759.1M479.9 782.6L486.1 784.2L499.7 782.1L508.5 778.3L513.5 775.3L519.8 772.4L532.6 767.7L537.1 767.9L545.1 763.8M479.5 794.9L486.4 789.1L497.2 787.7L507.3 784.8L514.3 784.9L522.7 780.8L531.4 777.9L539.8 773.8L544.3 776.5M479.3 799.2L487.5 801.5L494.7 794.2L503.6 796.1L511.4 792.3L519.1 792.7L529.2 788.8L537.8 785L543.9 783.9M479 810L485.4 808L495.8 804.8L504.2 802.2L511.9 799.8L522.8 796.4L528.3 794.7L534 793L543.5 790M488 529.8L498.8 523M498.8 532.6L507.5 525M507.6 538.7L515.5 526.9M487.7 539L498.8 532.6M497.9 540.3L507.6 538.7M508.9 549.2L518.8 535.1M518.8 535.1L524.2 552.7M535.6 541.6L539 554.1M487.2 553.9L497.9 540.3M494.2 551.4L508.9 549.2M505.2 555.1L513 550.6M513 550.6L526 556.8M524.2 552.7L535.5 560.6M487 559.6L494.2 551.4M498 564.3L505.2 555.1M505.1 569.1L516 554.8M516 554.8L521.9 565.8M486.6 573.9L498 564.3M495.1 575.5L505.1 569.1M508.8 573.8L515.7 563.8M515.7 563.8L525.9 581.3M521.9 565.8L532.1 581.2M533.2 570.3L542.1 579.2M486.3 582.9L495.1 575.5M495.7 583.5L508.8 573.8M503.4 583.8L514.9 581.2M486 590.7L495.7 583.5M497.5 597L503.4 583.8M503.3 595.8L516.6 589M520.9 590.5L530.8 601.8M531.3 589.4L539.6 600.8M485.6 604.6L497.5 597M493.5 605.7L503.3 595.8M505.2 604.1L512.6 595.8M512.6 595.8L521.4 607.6M530.8 601.8L536.6 605.1M485.4 610.9L493.5 605.7M495 618.1L505.2 604.1M501 614.9L511.4 608.5M521.4 607.6L532.8 615.5M531.7 610.8L539.4 617.1M485 624.1L495 618.1M496.1 623.4L501 614.9M503 625.8L513.3 618.3M513.3 618.3L524.1 627.2M484.7 631.2L496.1 623.4M497.5 631.9L503 625.8M506.2 636.5L511.8 623.5M524.1 627.2L531.4 632.8M484.4 641.3L497.5 631.9M493.3 646.5L506.2 636.5M503.1 645.4L514.1 638.8M514.1 638.8L520 647.2M521 638.5L526.7 644.1M531.4 632.8L534.4 647M484 653.7L493.3 646.5M491.2 654.1L503.1 645.4M503.9 650.6L514 646.8M520 647.2L526 651.6M483.6 666.6L491.2 654.1M490.1 665.1L503.9 650.6M504.7 665.3L513.4 655.5M522.1 651.5L525.4 663.7M526 651.6L535.7 661M483.5 670.8L490.1 665.1M494.5 673.6L504.7 665.3M504.2 674.7L509.5 663.2M525.4 663.7L535.6 673.7M483.1 681.2L494.5 673.6M495 681L504.2 674.7M500.9 681.2L510 668.8M510 668.8L517.5 680.2M517.7 672.4L525 681.7M482.7 693.8L495 681M493.4 692.5L500.9 681.2M498.7 692.3L507.6 679.9M507.6 679.9L516.1 692.6M525 681.7L534.8 686.2M482.4 705.6L493.4 692.5M492.3 700.8L498.7 692.3M498.2 697.4L508.5 691.8M527.6 686.2L532.1 694.5M482.1 712.2L492.3 700.8M493.5 713.4L498.2 697.4M498.8 707L512.3 698.6M481.9 720.1L493.5 713.4M491 720.8L498.8 707M499.3 715.2L511.7 711.3M518 709.8L524.8 714.6M481.5 733.6L491 720.8M488 730.5L499.3 715.2M496.8 725.2L511.6 715.7M511.6 715.7L516.8 724.6M516.6 718.7L527.5 724.9M524.8 714.6L534.2 720.2M481.4 735.9L488 730.5M491.3 741L496.8 725.2M497 735.5L506.9 724.1M506.9 724.1L516.7 729.7M516.8 724.6L522.6 731.4M527.5 724.9L532.4 728M480.9 750.9L491.3 741M492.3 744.6L497 735.5M496.1 748L506.4 732.7M506.4 732.7L515.8 739.4M516.7 729.7L524.2 738.8M522.6 731.4L531.2 735.4M480.7 755.8L492.3 744.6M489.1 756.7L496.1 748M499.5 750.9L508.3 745.7M515.8 739.4L522 747.4M480.5 763.7L489.1 756.7M486.5 764.6L499.5 750.9M496.9 761.4L509.3 751.1M512.7 752.5L524.6 753M480.2 772.4L486.5 764.6M487.2 770.7L496.9 761.4M497.3 768.4L507.8 762M524.6 753L528.9 763M479.9 782.6L487.2 770.7M486.1 784.2L497.3 768.4M499.7 782.1L504.1 770.3M504.1 770.3L513.5 775.3M516.1 766.7L519.8 772.4M479.5 794.9L486.1 784.2M486.4 789.1L499.7 782.1M497.2 787.7L508.5 778.3M513.5 775.3L522.7 780.8M519.8 772.4L531.4 777.9M479.3 799.2L486.4 789.1M487.5 801.5L497.2 787.7M494.7 794.2L507.3 784.8M507.3 784.8L511.4 792.3M514.3 784.9L519.1 792.7M522.7 780.8L529.2 788.8M479 810L487.5 801.5M485.4 808L494.7 794.2M495.8 804.8L503.6 796.1M511.4 792.3L522.8 796.4" fill="none" stroke="#000" stroke-width=".75" stroke-opacity=".92"/><ellipse cx="531.5" cy="565.5" rx="2.6" ry="4.6" transform="rotate(18 531.5 565.5)" fill="#dc0000" stroke="#000" stroke-width=".7"/><ellipse cx="531.5" cy="565.5" rx="4.6" ry="7" transform="rotate(18 531.5 565.5)" fill="none" stroke="#000" stroke-width=".6"/><ellipse cx="531.5" cy="606.5" rx="2.6" ry="4.6" transform="rotate(18 531.5 606.5)" fill="#dc0000" stroke="#000" stroke-width=".7"/><ellipse cx="531.5" cy="606.5" rx="4.6" ry="7" transform="rotate(18 531.5 606.5)" fill="none" stroke="#000" stroke-width=".6"/><ellipse cx="526.5" cy="655" rx="2.6" ry="4.6" transform="rotate(18 526.5 655)" fill="#ff9a00" stroke="#000" stroke-width=".7"/><ellipse cx="526.5" cy="655" rx="4.6" ry="7" transform="rotate(18 526.5 655)" fill="none" stroke="#000" stroke-width=".6"/><ellipse cx="524.5" cy="693" rx="2.6" ry="4.6" transform="rotate(18 524.5 693)" fill="#dce600" stroke="#000" stroke-width=".7"/><ellipse cx="524.5" cy="693" rx="4.6" ry="7" transform="rotate(18 524.5 693)" fill="none" stroke="#000" stroke-width=".6"/><ellipse cx="522" cy="738" rx="2.6" ry="4.6" transform="rotate(18 522 738)" fill="#dce600" stroke="#000" stroke-width=".7"/><ellipse cx="522" cy="738" rx="4.6" ry="7" transform="rotate(18 522 738)" fill="none" stroke="#000" stroke-width=".6"/><ellipse cx="519" cy="776" rx="2.6" ry="4.6" transform="rotate(18 519 776)" fill="#00c0ff" stroke="#000" stroke-width=".7"/><ellipse cx="519" cy="776" rx="4.6" ry="7" transform="rotate(18 519 776)" fill="none" stroke="#000" stroke-width=".6"/><ellipse cx="513" cy="578" rx="2.6" ry="4.6" transform="rotate(18 513 578)" fill="#dce600" stroke="#000" stroke-width=".7"/><ellipse cx="513" cy="578" rx="4.6" ry="7" transform="rotate(18 513 578)" fill="none" stroke="#000" stroke-width=".6"/><ellipse cx="511" cy="618" rx="2.6" ry="4.6" transform="rotate(18 511 618)" fill="#82b400" stroke="#000" stroke-width=".7"/><ellipse cx="511" cy="618" rx="4.6" ry="7" transform="rotate(18 511 618)" fill="none" stroke="#000" stroke-width=".6"/><ellipse cx="508" cy="662" rx="2.6" ry="4.6" transform="rotate(18 508 662)" fill="#00b88c" stroke="#000" stroke-width=".7"/><ellipse cx="508" cy="662" rx="4.6" ry="7" transform="rotate(18 508 662)" fill="none" stroke="#000" stroke-width=".6"/><ellipse cx="506" cy="702" rx="2.6" ry="4.6" transform="rotate(18 506 702)" fill="#00c0ff" stroke="#000" stroke-width=".7"/><ellipse cx="506" cy="702" rx="4.6" ry="7" transform="rotate(18 506 702)" fill="none" stroke="#000" stroke-width=".6"/><ellipse cx="503" cy="748" rx="2.6" ry="4.6" transform="rotate(18 503 748)" fill="#0068ff" stroke="#000" stroke-width=".7"/><ellipse cx="503" cy="748" rx="4.6" ry="7" transform="rotate(18 503 748)" fill="none" stroke="#000" stroke-width=".6"/>
<path d="M593 723.4L961 854.4L865.6 938.5L496.2 809.8Z" fill="#3210b0"/>
<path d="M631.8 737.2L787.3 792.6L961 854.4L865.6 938.5L572.7 836.4Z" fill="#2210d0" fill-rule="evenodd"/>
<path d="M761.8 783.5L766.4 785.1L961 854.4L865.6 938.5L710 884.3Z" fill="#0010ff" fill-rule="evenodd"/>
<path d="M593 723.4L580.9 734.2L568.8 745L556.6 755.8L544.5 766.7L532.4 777.4L520.4 788.2L508.3 799L496.2 809.8M613.9 730.8L601.8 741.6L589.7 752.4L577.6 763.2L565.5 774L553.4 784.8L541.3 795.6L529.2 806.3L517.2 817.1M634.8 738.3L622.6 749.1L610.5 759.8L598.5 770.6L586.4 781.4L574.3 792.1L562.2 802.9L550.2 813.7L538.1 824.4M655.5 745.7L643.4 756.4L631.4 767.2L619.3 778L607.2 788.7L595.1 799.5L583.1 810.2L571 820.9L559 831.7M676.3 753L664.2 763.8L652.1 774.6L640 785.3L628 796L615.9 806.8L603.9 817.5L591.8 828.2L579.8 838.9M697 760.4L684.9 771.1L672.8 781.9L660.8 792.6L648.7 803.3L636.7 814L624.6 824.8L612.6 835.5L600.6 846.2M717.6 767.8L705.5 778.5L693.5 789.2L681.4 799.9L669.4 810.6L657.3 821.3L645.3 832L633.3 842.7L621.3 853.4M738.2 775.1L726.1 785.8L714.1 796.5L702 807.2L690 817.9L678 828.6L665.9 839.2L653.9 849.9L641.9 860.6M758.7 782.4L746.6 793.1L734.6 803.8L722.6 814.4L710.5 825.1L698.5 835.8L686.5 846.4L674.5 857.1L662.5 867.7M779.2 789.7L767.1 800.3L755.1 811L743.1 821.7L731.1 832.3L719 843L707 853.6L695.1 864.3L683.1 874.9M799.6 796.9L787.5 807.6L775.5 818.2L763.5 828.9L751.5 839.5L739.5 850.2L727.5 860.8L715.5 871.4L703.6 882M819.9 804.2L807.9 814.8L795.9 825.5L783.9 836.1L771.9 846.7L759.9 857.3L747.9 868L736 878.6L724 889.2M840.2 811.4L828.2 822L816.2 832.7L804.2 843.3L792.3 853.9L780.3 864.5L768.3 875.1L756.3 885.7L744.4 896.3M860.5 818.6L848.5 829.2L836.5 839.8L824.5 850.4L812.6 861L800.6 871.6L788.6 882.2L776.7 892.8L764.7 903.4M880.7 825.8L868.7 836.4L856.7 847L844.8 857.6L832.8 868.2L820.8 878.7L808.9 889.3L796.9 899.9L785 910.4M900.9 833L888.9 843.6L876.9 854.1L864.9 864.7L853 875.3L841 885.8L829.1 896.4L817.2 906.9L805.2 917.5M921 840.1L909 850.7L897 861.3L885.1 871.8L873.1 882.4L861.2 892.9L849.2 903.4L837.3 914L825.4 924.5M941 847.3L929 857.8L917.1 868.4L905.1 878.9L893.2 889.4L881.3 900L869.4 910.5L857.4 921L845.5 931.5M961 854.4L949.1 864.9L937.1 875.5L925.2 886L913.2 896.5L901.3 907L889.4 917.5L877.5 928L865.6 938.5M593 723.4L613.9 730.8L634.8 738.3L655.5 745.7L676.3 753L697 760.4L717.6 767.8L738.2 775.1L758.7 782.4L779.2 789.7L799.6 796.9L819.9 804.2L840.2 811.4L860.5 818.6L880.7 825.8L900.9 833L921 840.1L941 847.3L961 854.4M580.9 734.2L601.8 741.6L622.6 749.1L643.4 756.4L664.2 763.8L684.9 771.1L705.5 778.5L726.1 785.8L746.6 793.1L767.1 800.3L787.5 807.6L807.9 814.8L828.2 822L848.5 829.2L868.7 836.4L888.9 843.6L909 850.7L929 857.8L949.1 864.9M568.8 745L589.7 752.4L610.5 759.8L631.4 767.2L652.1 774.6L672.8 781.9L693.5 789.2L714.1 796.5L734.6 803.8L755.1 811L775.5 818.2L795.9 825.5L816.2 832.7L836.5 839.8L856.7 847L876.9 854.1L897 861.3L917.1 868.4L937.1 875.5M556.6 755.8L577.6 763.2L598.5 770.6L619.3 778L640 785.3L660.8 792.6L681.4 799.9L702 807.2L722.6 814.4L743.1 821.7L763.5 828.9L783.9 836.1L804.2 843.3L824.5 850.4L844.8 857.6L864.9 864.7L885.1 871.8L905.1 878.9L925.2 886M544.5 766.7L565.5 774L586.4 781.4L607.2 788.7L628 796L648.7 803.3L669.4 810.6L690 817.9L710.5 825.1L731.1 832.3L751.5 839.5L771.9 846.7L792.3 853.9L812.6 861L832.8 868.2L853 875.3L873.1 882.4L893.2 889.4L913.2 896.5M532.4 777.4L553.4 784.8L574.3 792.1L595.1 799.5L615.9 806.8L636.7 814L657.3 821.3L678 828.6L698.5 835.8L719 843L739.5 850.2L759.9 857.3L780.3 864.5L800.6 871.6L820.8 878.7L841 885.8L861.2 892.9L881.3 900L901.3 907M520.4 788.2L541.3 795.6L562.2 802.9L583.1 810.2L603.9 817.5L624.6 824.8L645.3 832L665.9 839.2L686.5 846.4L707 853.6L727.5 860.8L747.9 868L768.3 875.1L788.6 882.2L808.9 889.3L829.1 896.4L849.2 903.4L869.4 910.5L889.4 917.5M508.3 799L529.2 806.3L550.2 813.7L571 820.9L591.8 828.2L612.6 835.5L633.3 842.7L653.9 849.9L674.5 857.1L695.1 864.3L715.5 871.4L736 878.6L756.3 885.7L776.7 892.8L796.9 899.9L817.2 906.9L837.3 914L857.4 921L877.5 928M496.2 809.8L517.2 817.1L538.1 824.4L559 831.7L579.8 838.9L600.6 846.2L621.3 853.4L641.9 860.6L662.5 867.7L683.1 874.9L703.6 882L724 889.2L744.4 896.3L764.7 903.4L785 910.4L805.2 917.5L825.4 924.5L845.5 931.5L865.6 938.5" fill="none" stroke="#000" stroke-width="0.95" stroke-opacity="0.95"/>
<path d="M562.1 488.5L932.2 615.6L915 892.5L544.6 766.6Z" fill="#0068ff"/>
<path d="M562.1 488.5L908.3 607.4L904 620.2L901.7 630.2L901 637.1L902.1 643.6L906.4 649.7L928.8 669.6L920.4 805L862.2 820.8L792.9 834.7L764.3 841.3L544.6 766.6Z" fill="#00c0ff" fill-rule="evenodd"/>
<path d="M562.1 488.5L880.6 597.9L876.1 603.5L868.6 610.2L861.1 615.7L853.8 620L846.4 623.2L839.2 625.4L815.8 629.4L810.6 631.2L807.6 633.7L806.8 637L807.6 640.9L818.2 662.5L827.7 690.8L833.7 717.9L833.7 725.1L831.7 735.2L828 748.2L823.3 757.4L814.2 772.2L810.2 778L804.9 783.4L783.3 801.1L771.3 807.8L749.1 818.2L732.4 823.2L719.8 826.2L544.6 766.6Z" fill="#00ecde" fill-rule="evenodd"/>
<path d="M562.1 488.5L843.6 585.2L835 589.4L827 592.1L798.2 597.5L785.6 601.1L780.8 603L772.7 607.4L766.7 612.5L764.7 615.4L763.5 618.6L763.4 622.2L766.1 630.3L772.6 643.2L774.6 654.7L774.8 665.5L774.2 676.1L773.2 682.9L766.9 709.4L763.6 719.1L749.7 743L742.9 751.5L727.9 764.3L718.4 771.6L708.5 777.1L691.3 785.5L684 788.2L674.3 790.6L650.2 796.2L637.7 798.2L544.6 766.6Z" fill="#00b88c" fill-rule="evenodd"/>
<path d="M562.1 488.5L801.8 570.8L754.4 583.2L743.4 586.6L738.6 588.6L732 592.2L727.8 595.6L725.5 598.4L724 601.5L723.5 604.9L724.2 608.7L734.2 633.7L736.6 641.7L737.1 645.4L737.2 656.3L735.8 673.7L734.6 680.4L731.6 690.2L724.7 709.4L721.8 715.6L715.7 724.3L706.3 736.1L701.6 741L696.3 744.7L679.3 754.9L670.9 759.3L660.1 762.8L630.5 770.6L606.2 774.8L591.8 776L584.7 775.3L572.9 771.9L558.9 766.5L545 759.7Z" fill="#008038" fill-rule="evenodd"/>
<path d="M562.1 488.5L764.7 558.1L736 565.7L721.4 571.1L716.3 573.8L709.5 578.6L704.6 584.1L702.9 587.1L701.7 590.3L700.8 597.1L705.2 630.9L705.1 656L704.1 670L700.3 683.1L694.2 699L690.1 704.7L684.6 710L675.4 717.7L668.4 722.5L651.9 731.2L642.1 734.8L617.9 741.2L598.5 745.4L591.2 746.6L569.7 747.5L558.8 749.8L552.8 750.2L548.1 749L545.8 747.5Z" fill="#2a7a00" fill-rule="evenodd"/>
<path d="M562.1 488.5L730.6 546.4L711.9 554.3L695.4 563L688.2 567.7L678.6 575.2L673.3 580.5L671.3 583.4L670.1 586.6L670 590.2L675.6 610L676.7 617.6L676.4 639L674.6 652.8L672.8 659.3L671.3 662.4L665.2 670.7L657.5 678.4L650.1 682.7L645.2 684.6L640.4 685.6L633.3 685.1L621.5 682.1L612.2 678.4L595.9 672.9L588.9 669.3L584.4 666.2L559.6 642.7L552.7 637.7Z" fill="#82b400" fill-rule="evenodd"/>
<path d="M562.1 488.5L704.3 537.3L684.8 548L672.4 555.9L660.6 565.4L653.3 573.7L649.6 579.6L648.4 582.8L648.1 586.3L650.5 608.6L649.8 615.6L648 622.1L642.7 631.1L635.4 639.4L628.1 644.1L619.1 648.2L614.1 649.2L606.9 649.2L597.6 648L592.8 646.6L585.8 643L562.9 628.3L553.6 622.9Z" fill="#dce600" fill-rule="evenodd"/>
<path d="M562.1 488.5L681 529.3L668.7 538L658.7 546.3L651.1 553.7L637.6 568.3L628.1 577.3L619.7 583.7L604.9 604.7L597.5 609.9L592.5 612.2L587.7 613.7L580.4 614.5L572.5 614.3L566.2 612.8L554.5 608.8Z" fill="#ffee00" fill-rule="evenodd"/>
<path d="M562.1 488.5L655.5 520.6L660.5 522.3L644.9 538.3L627.8 561.3L619.1 569.5L606.7 576.3L599.4 579.2L587.3 581.9L570 584.7L555.7 589.5Z" fill="#ffcc00" fill-rule="evenodd"/>
<path d="M562.1 488.5L640.4 515.4L631.2 528.2L618.5 551L614.2 556.7L610.1 560.4L603.5 563.8L593 566.9L556.8 572.5Z" fill="#ffaa00" fill-rule="evenodd"/>
<path d="M562.1 488.5L617 507.3L612.2 516.5L605.9 532.3L602.8 538.4L598.4 544.1L595.2 546.6L591.2 548.8L586.2 550.7L574.7 553.3L557.9 554.9Z" fill="#ff7a00" fill-rule="evenodd"/>
<path d="M562.1 488.5L585.7 496.6L577.5 511.7L573.3 517.5L567.2 522.6L559.8 525.8Z" fill="#ff4400" fill-rule="evenodd"/>
<path d="M562.1 488.5L560.9 508.4L559.6 528.2L558.4 548.1L557.1 567.9L555.9 587.8L554.6 607.6L553.4 627.5L552.1 647.4L550.9 667.2L549.6 687.1L548.4 707L547.1 726.9L545.9 746.7L544.6 766.6M582.8 495.6L581.5 515.4L580.3 535.3L579 555.1L577.8 575L576.5 594.9L575.3 614.7L574 634.6L572.8 654.4L571.5 674.3L570.3 694.2L569 714L567.8 733.9L566.5 753.8L565.3 773.6M603.4 502.7L602.1 522.5L600.9 542.4L599.6 562.2L598.4 582.1L597.2 601.9L595.9 621.8L594.7 641.6L593.4 661.5L592.2 681.3L590.9 701.2L589.7 721.1L588.4 740.9L587.2 760.8L585.9 780.6M624 509.8L622.8 529.6L621.5 549.4L620.3 569.3L619 589.1L617.8 609L616.5 628.8L615.3 648.7L614.1 668.5L612.8 688.4L611.6 708.2L610.3 728.1L609.1 747.9L607.8 767.8L606.6 787.7M644.6 516.8L643.4 536.7L642.1 556.5L640.9 576.4L639.7 596.2L638.4 616L637.2 635.9L635.9 655.7L634.7 675.6L633.4 695.4L632.2 715.3L630.9 735.1L629.7 755L628.5 774.8L627.2 794.7M665.2 523.9L664 543.8L662.8 563.6L661.5 583.4L660.3 603.3L659 623.1L657.8 642.9L656.5 662.8L655.3 682.6L654.1 702.4L652.8 722.3L651.6 742.1L650.3 762L649.1 781.8L647.8 801.7M685.8 531L684.6 550.8L683.4 570.6L682.1 590.5L680.9 610.3L679.6 630.1L678.4 650L677.1 669.8L675.9 689.6L674.7 709.5L673.4 729.3L672.2 749.2L670.9 769L669.7 788.8L668.4 808.7M706.4 538.1L705.2 557.9L704 577.7L702.7 597.5L701.5 617.4L700.2 637.2L699 657L697.7 676.8L696.5 696.7L695.3 716.5L694 736.3L692.8 756.2L691.5 776L690.3 795.9L689 815.7M727 545.1L725.8 564.9L724.5 584.8L723.3 604.6L722 624.4L720.8 644.2L719.6 664L718.3 683.9L717.1 703.7L715.8 723.5L714.6 743.4L713.4 763.2L712.1 783L710.9 802.9L709.6 822.7M747.6 552.2L746.3 572L745.1 591.8L743.9 611.6L742.6 631.4L741.4 651.3L740.1 671.1L738.9 690.9L737.7 710.7L736.4 730.6L735.2 750.4L733.9 770.2L732.7 790L731.5 809.9L730.2 829.7M768.1 559.3L766.9 579.1L765.7 598.9L764.4 618.7L763.2 638.5L761.9 658.3L760.7 678.1L759.5 697.9L758.2 717.7L757 737.6L755.8 757.4L754.5 777.2L753.3 797L752 816.9L750.8 836.7M788.7 566.3L787.4 586.1L786.2 605.9L785 625.7L783.7 645.5L782.5 665.3L781.3 685.1L780 705L778.8 724.8L777.5 744.6L776.3 764.4L775.1 784.2L773.8 804L772.6 823.9L771.4 843.7M809.2 573.4L808 593.2L806.7 613L805.5 632.8L804.3 652.6L803 672.4L801.8 692.2L800.6 712L799.3 731.8L798.1 751.6L796.9 771.4L795.6 791.2L794.4 811L793.1 830.8L791.9 850.7M829.7 580.4L828.5 600.2L827.3 620L826 639.8L824.8 659.6L823.6 679.4L822.3 699.2L821.1 719L819.9 738.8L818.6 758.6L817.4 778.4L816.2 798.2L814.9 818L813.7 837.8L812.5 857.6M850.2 587.5L849 607.2L847.8 627L846.6 646.8L845.3 666.6L844.1 686.4L842.9 706.2L841.6 726L840.4 745.8L839.2 765.6L837.9 785.4L836.7 805.2L835.5 825L834.2 844.8L833 864.6M870.8 594.5L869.5 614.3L868.3 634.1L867.1 653.8L865.8 673.6L864.6 693.4L863.4 713.2L862.1 733L860.9 752.8L859.7 772.6L858.4 792.4L857.2 812.2L856 832L854.7 851.8L853.5 871.6M891.2 601.5L890 621.3L888.8 641.1L887.6 660.9L886.3 680.7L885.1 700.4L883.9 720.2L882.6 740L881.4 759.8L880.2 779.6L878.9 799.4L877.7 819.2L876.5 839L875.2 858.8L874 878.6M911.7 608.6L910.5 628.3L909.3 648.1L908 667.9L906.8 687.7L905.6 707.4L904.4 727.2L903.1 747L901.9 766.8L900.7 786.6L899.4 806.4L898.2 826.2L897 845.9L895.7 865.7L894.5 885.5M932.2 615.6L931 635.4L929.7 655.1L928.5 674.9L927.3 694.7L926.1 714.5L924.8 734.2L923.6 754L922.4 773.8L921.1 793.6L919.9 813.4L918.7 833.1L917.5 852.9L916.2 872.7L915 892.5M562.1 488.5L582.8 495.6L603.4 502.7L624 509.8L644.6 516.8L665.2 523.9L685.8 531L706.4 538.1L727 545.1L747.6 552.2L768.1 559.3L788.7 566.3L809.2 573.4L829.7 580.4L850.2 587.5L870.8 594.5L891.2 601.5L911.7 608.6L932.2 615.6M560.9 508.4L581.5 515.4L602.1 522.5L622.8 529.6L643.4 536.7L664 543.8L684.6 550.8L705.2 557.9L725.8 564.9L746.3 572L766.9 579.1L787.4 586.1L808 593.2L828.5 600.2L849 607.2L869.5 614.3L890 621.3L910.5 628.3L931 635.4M559.6 528.2L580.3 535.3L600.9 542.4L621.5 549.4L642.1 556.5L662.8 563.6L683.4 570.6L704 577.7L724.5 584.8L745.1 591.8L765.7 598.9L786.2 605.9L806.7 613L827.3 620L847.8 627L868.3 634.1L888.8 641.1L909.3 648.1L929.7 655.1M558.4 548.1L579 555.1L599.6 562.2L620.3 569.3L640.9 576.4L661.5 583.4L682.1 590.5L702.7 597.5L723.3 604.6L743.9 611.6L764.4 618.7L785 625.7L805.5 632.8L826 639.8L846.6 646.8L867.1 653.8L887.6 660.9L908 667.9L928.5 674.9M557.1 567.9L577.8 575L598.4 582.1L619 589.1L639.7 596.2L660.3 603.3L680.9 610.3L701.5 617.4L722 624.4L742.6 631.4L763.2 638.5L783.7 645.5L804.3 652.6L824.8 659.6L845.3 666.6L865.8 673.6L886.3 680.7L906.8 687.7L927.3 694.7M555.9 587.8L576.5 594.9L597.2 601.9L617.8 609L638.4 616L659 623.1L679.6 630.1L700.2 637.2L720.8 644.2L741.4 651.3L761.9 658.3L782.5 665.3L803 672.4L823.6 679.4L844.1 686.4L864.6 693.4L885.1 700.4L905.6 707.4L926.1 714.5M554.6 607.6L575.3 614.7L595.9 621.8L616.5 628.8L637.2 635.9L657.8 642.9L678.4 650L699 657L719.6 664L740.1 671.1L760.7 678.1L781.3 685.1L801.8 692.2L822.3 699.2L842.9 706.2L863.4 713.2L883.9 720.2L904.4 727.2L924.8 734.2M553.4 627.5L574 634.6L594.7 641.6L615.3 648.7L635.9 655.7L656.5 662.8L677.1 669.8L697.7 676.8L718.3 683.9L738.9 690.9L759.5 697.9L780 705L800.6 712L821.1 719L841.6 726L862.1 733L882.6 740L903.1 747L923.6 754M552.1 647.4L572.8 654.4L593.4 661.5L614.1 668.5L634.7 675.6L655.3 682.6L675.9 689.6L696.5 696.7L717.1 703.7L737.7 710.7L758.2 717.7L778.8 724.8L799.3 731.8L819.9 738.8L840.4 745.8L860.9 752.8L881.4 759.8L901.9 766.8L922.4 773.8M550.9 667.2L571.5 674.3L592.2 681.3L612.8 688.4L633.4 695.4L654.1 702.4L674.7 709.5L695.3 716.5L715.8 723.5L736.4 730.6L757 737.6L777.5 744.6L798.1 751.6L818.6 758.6L839.2 765.6L859.7 772.6L880.2 779.6L900.7 786.6L921.1 793.6M549.6 687.1L570.3 694.2L590.9 701.2L611.6 708.2L632.2 715.3L652.8 722.3L673.4 729.3L694 736.3L714.6 743.4L735.2 750.4L755.8 757.4L776.3 764.4L796.9 771.4L817.4 778.4L837.9 785.4L858.4 792.4L878.9 799.4L899.4 806.4L919.9 813.4M548.4 707L569 714L589.7 721.1L610.3 728.1L630.9 735.1L651.6 742.1L672.2 749.2L692.8 756.2L713.4 763.2L733.9 770.2L754.5 777.2L775.1 784.2L795.6 791.2L816.2 798.2L836.7 805.2L857.2 812.2L877.7 819.2L898.2 826.2L918.7 833.1M547.1 726.9L567.8 733.9L588.4 740.9L609.1 747.9L629.7 755L650.3 762L670.9 769L691.5 776L712.1 783L732.7 790L753.3 797L773.8 804L794.4 811L814.9 818L835.5 825L856 832L876.5 839L897 845.9L917.5 852.9M545.9 746.7L566.5 753.8L587.2 760.8L607.8 767.8L628.5 774.8L649.1 781.8L669.7 788.8L690.3 795.9L710.9 802.9L731.5 809.9L752 816.9L772.6 823.9L793.1 830.8L813.7 837.8L834.2 844.8L854.7 851.8L875.2 858.8L895.7 865.7L916.2 872.7M544.6 766.6L565.3 773.6L585.9 780.6L606.6 787.7L627.2 794.7L647.8 801.7L668.4 808.7L689 815.7L709.6 822.7L730.2 829.7L750.8 836.7L771.4 843.7L791.9 850.7L812.5 857.6L833 864.6L853.5 871.6L874 878.6L894.5 885.5L915 892.5" fill="none" stroke="#000" stroke-width="0.95" stroke-opacity="0.95"/>
<path d="M152.3 645.6L481 745.4" stroke="#45107a" stroke-width="2"/><path d="M544.8 767.2L700 819.8" stroke="#00ecde" stroke-width="1.6"/><path d="M700 819.8L915 893" stroke="#45107a" stroke-width="1.8"/><path d="M545.2 770.4L913 895.6" stroke="#000" stroke-width=".6" stroke-dasharray="2.5 1.5"/><path d="M153 648.6L480 748.4" stroke="#000" stroke-width=".6" stroke-dasharray="2.5 1.5"/>
<path d="M207.5 320L580.4 433.2L479.7 521.7L111.5 404Z" fill="#0010ff"/>
<path d="M207.5 320L472.4 400.4L482.3 409.4L490 417.4L496.4 425.6L503.8 436.8L506 439L509.2 440.7L524.2 441.9L529.3 443.2L531.3 444.3L532.9 445.8L534.3 449.2L534.2 452.2L532.9 456.4L530.1 461.5L526.4 466.4L518.6 474.6L504.8 480.9L494.8 483.8L485.2 484.8L464.3 483L416.9 487.3L396.7 487.9L373.1 487.6L111.5 404Z" fill="#0068ff" fill-rule="evenodd"/>
<path d="M207.5 320L385.4 374L385.7 384.4L387.4 393.7L390.2 402L394.6 410.7L400.6 419.5L407.5 427.5L416.6 436.3L426.5 444.4L425.3 445.5L403.7 444.8L380.6 445L349.9 447.3L334.7 449.3L318.5 452.3L287.1 460.1L111.5 404Z" fill="#00c0ff" fill-rule="evenodd"/>
<path d="M207.5 320L253.9 334.1L261.4 343.6L265.7 350.7L268.6 357.4L270.3 363.7L270.7 371.1L269.9 376.7L267.4 383.2L263.5 389.3L259.1 393.7L253.3 397.8L244.7 402.4L234.5 406.5L225.3 409.5L212.2 412.7L200.5 414.8L173.2 417.9L157.3 418.6L111.5 404Z" fill="#00ecde" fill-rule="evenodd"/>
<path d="M207.5 320L195.5 330.5L183.5 341L171.5 351.5L159.5 362L147.5 372.5L135.5 383L123.5 393.5L111.5 404M227.2 326L215.2 336.5L203.2 347L191.2 357.6L179.1 368.1L167.1 378.6L155.1 389.2L143 399.7L131 410.2M247.1 332L235 342.6L223 353.1L210.9 363.7L198.9 374.2L186.8 384.8L174.7 395.4L162.7 405.9L150.6 416.5M267.1 338.1L255 348.7L242.9 359.2L230.8 369.8L218.7 380.4L206.6 391L194.5 401.6L182.4 412.2L170.3 422.8M287.1 344.2L275 354.8L262.9 365.4L250.8 376L238.6 386.6L226.5 397.3L214.4 407.9L202.3 418.5L190.1 429.1M307.3 350.3L295.2 360.9L283 371.6L270.9 382.2L258.7 392.9L246.5 403.5L234.4 414.2L222.2 424.8L210 435.5M327.6 356.5L315.4 367.1L303.2 377.8L291.1 388.5L278.9 399.2L266.7 409.8L254.5 420.5L242.3 431.2L230.1 441.9M348 362.7L335.8 373.4L323.6 384.1L311.4 394.8L299.2 405.5L286.9 416.2L274.7 426.9L262.5 437.6L250.2 448.4M368.6 368.9L356.3 379.6L344.1 390.4L331.8 401.1L319.6 411.8L307.3 422.6L295 433.3L282.8 444.1L270.5 454.8M389.2 375.2L376.9 385.9L364.6 396.7L352.4 407.5L340.1 418.2L327.8 429L315.5 439.8L303.2 450.6L290.9 461.3M410 381.5L397.6 392.3L385.3 403.1L373 413.9L360.7 424.7L348.4 435.5L336.1 446.3L323.7 457.1L311.4 467.9M430.8 387.8L418.5 398.6L406.1 409.5L393.8 420.3L381.4 431.1L369.1 442L356.7 452.8L344.4 463.6L332 474.5M451.8 394.2L439.5 405L427.1 415.9L414.7 426.8L402.3 437.6L389.9 448.5L377.5 459.4L365.1 470.2L352.8 481.1M473 400.6L460.5 411.5L448.1 422.4L435.7 433.3L423.3 444.2L410.9 455.1L398.5 466L386 476.9L373.6 487.8M494.2 407L481.8 418L469.3 428.9L456.9 439.8L444.4 450.7L432 461.7L419.5 472.6L407 483.6L394.6 494.5M515.6 413.5L503.1 424.5L490.6 435.4L478.1 446.4L465.6 457.4L453.2 468.3L440.7 479.3L428.2 490.3L415.7 501.2M537.1 420L524.5 431L512 442L499.5 453L487 464L474.5 475L462 486L449.4 497L436.9 508M558.7 426.6L546.1 437.6L533.6 448.6L521 459.7L508.5 470.7L495.9 481.7L483.4 492.8L470.8 503.8L458.2 514.8M580.4 433.2L567.8 444.3L555.2 455.3L542.7 466.4L530.1 477.4L517.5 488.5L504.9 499.6L492.3 510.6L479.7 521.7M207.5 320L227.2 326L247.1 332L267.1 338.1L287.1 344.2L307.3 350.3L327.6 356.5L348 362.7L368.6 368.9L389.2 375.2L410 381.5L430.8 387.8L451.8 394.2L473 400.6L494.2 407L515.6 413.5L537.1 420L558.7 426.6L580.4 433.2M195.5 330.5L215.2 336.5L235 342.6L255 348.7L275 354.8L295.2 360.9L315.4 367.1L335.8 373.4L356.3 379.6L376.9 385.9L397.6 392.3L418.5 398.6L439.5 405L460.5 411.5L481.8 418L503.1 424.5L524.5 431L546.1 437.6L567.8 444.3M183.5 341L203.2 347L223 353.1L242.9 359.2L262.9 365.4L283 371.6L303.2 377.8L323.6 384.1L344.1 390.4L364.6 396.7L385.3 403.1L406.1 409.5L427.1 415.9L448.1 422.4L469.3 428.9L490.6 435.4L512 442L533.6 448.6L555.2 455.3M171.5 351.5L191.2 357.6L210.9 363.7L230.8 369.8L250.8 376L270.9 382.2L291.1 388.5L311.4 394.8L331.8 401.1L352.4 407.5L373 413.9L393.8 420.3L414.7 426.8L435.7 433.3L456.9 439.8L478.1 446.4L499.5 453L521 459.7L542.7 466.4M159.5 362L179.1 368.1L198.9 374.2L218.7 380.4L238.6 386.6L258.7 392.9L278.9 399.2L299.2 405.5L319.6 411.8L340.1 418.2L360.7 424.7L381.4 431.1L402.3 437.6L423.3 444.2L444.4 450.7L465.6 457.4L487 464L508.5 470.7L530.1 477.4M147.5 372.5L167.1 378.6L186.8 384.8L206.6 391L226.5 397.3L246.5 403.5L266.7 409.8L286.9 416.2L307.3 422.6L327.8 429L348.4 435.5L369.1 442L389.9 448.5L410.9 455.1L432 461.7L453.2 468.3L474.5 475L495.9 481.7L517.5 488.5M135.5 383L155.1 389.2L174.7 395.4L194.5 401.6L214.4 407.9L234.4 414.2L254.5 420.5L274.7 426.9L295 433.3L315.5 439.8L336.1 446.3L356.7 452.8L377.5 459.4L398.5 466L419.5 472.6L440.7 479.3L462 486L483.4 492.8L504.9 499.6M123.5 393.5L143 399.7L162.7 405.9L182.4 412.2L202.3 418.5L222.2 424.8L242.3 431.2L262.5 437.6L282.8 444.1L303.2 450.6L323.7 457.1L344.4 463.6L365.1 470.2L386 476.9L407 483.6L428.2 490.3L449.4 497L470.8 503.8L492.3 510.6M111.5 404L131 410.2L150.6 416.5L170.3 422.8L190.1 429.1L210 435.5L230.1 441.9L250.2 448.4L270.5 454.8L290.9 461.3L311.4 467.9L332 474.5L352.8 481.1L373.6 487.8L394.6 494.5L415.7 501.2L436.9 508L458.2 514.8L479.7 521.7" fill="none" stroke="#000" stroke-width="0.95" stroke-opacity="0.95"/>
<path d="M479.7 521.7L582.6 431.6L607.6 441.2L514.6 531.2Z" fill="#2210d0"/>
<path d="M479.7 521.7L494.2 509L496.3 507.8L496.9 506.6L513.6 492L516.5 490.7L516.7 489.3L582.6 431.6L607.6 441.2L514.6 531.2Z" fill="#0010ff" fill-rule="evenodd"/>
<path d="M479.7 521.7L492.6 510.4L497 509.2L498.3 508.4L498.8 507.3L498.5 505.2L512.3 493.2L517.6 492.1L518.8 491.4L519.2 490.4L518.1 488.1L530.9 476.9L535 474.9L535.3 473L547.2 462.6L551.1 461.2L551.7 460.4L551.6 458.8L562.8 448.9L565.8 447.4L566.3 445.9L576.6 436.9L579.7 435.6L580.2 433.7L582.6 431.6L607.6 441.2L514.6 531.2Z" fill="#0068ff" fill-rule="evenodd"/>
<path d="M479.7 521.7L491.5 511.4L497.1 510.4L499.9 508.8L500.6 506.7L499.6 504.3L511.3 494L517.4 493.2L520.1 491.8L521 489.8L519 487.2L529.8 477.8L534.1 476.8L536.5 475.4L537 474.4L536.3 472.1L546.2 463.5L550 462.7L552.5 461.7L553.4 460L552.5 457.9L561.8 449.8L565 449L566.8 447.8L567.5 446.2L567.3 445L575.7 437.6L579 437.1L580.8 436.1L581.4 434.6L581.1 432.9L582.6 431.6L607.6 441.2L514.6 531.2Z" fill="#00c0ff" fill-rule="evenodd"/>
<path d="M479.9 521.6L490.5 512.3L496.4 511.5L500.8 509.1L502 506.3L500.5 503.4L510.4 494.8L516.9 494L521 492.1L522.2 490.3L522.2 489.4L519.9 486.5L528.9 478.6L534.6 477.4L537.6 475.8L538.5 473.9L537.2 471.3L545.4 464.2L550.4 463.4L553.4 462L554.7 460.5L554.8 459.5L553.4 457.2L561 450.5L564.9 449.7L567.8 448.2L568.7 446.7L568.1 444.3L575 438.3L579.4 437.7L581.6 436.4L582.4 435L581.8 432.3L582.6 431.6L607.6 441.2L514.6 531.2ZM514.2 522.6L512 525.2L517.2 520.3ZM536.3 501.2L534 504.2L540.1 498.5ZM571.9 467.4L568.7 471.4L574.4 466Z" fill="#00ecde" fill-rule="evenodd"/>
<path d="M481.8 522.3L480.9 520.7L489.5 513.1L497.6 511.8L501.6 509.3L502.8 507.5L503.1 506.2L501.5 502.6L509.5 495.6L517.5 494.4L521.7 492.3L523.2 490.5L523.3 489.5L520.8 485.7L528 479.4L534.7 478L538.3 476L539.6 474.4L539.7 473.4L538.1 470.5L544.5 465L551 463.8L554.9 461.5L555.9 459.4L554.2 456.5L560.1 451.3L565.3 450.2L568.5 448.4L569.9 446.1L568.9 443.6L574.2 439L578.4 438.7L581.5 437.2L583.4 434.4L582.6 431.6L601.5 438.9L594.9 446.5L586.9 452.4L583.9 457L588.3 453.8L594.9 446.6L603.2 439.5L607.6 441.2L514.6 531.2L507.9 529.4L515.7 523L521.3 516.3L515.7 519.5L513.8 521.2L511 524L507.3 529.2ZM533.5 502.6L530.5 507.6L538.1 501.7L544.5 494.3L539 497.5ZM554.7 483.5L549.1 490L554.7 485.5L559.7 479.9ZM568.1 470L565.4 474.5L572.1 469.4L577.1 463.4L573.2 465.3Z" fill="#00b88c" fill-rule="evenodd"/>
<path d="M483.5 522.7L482 519.7L488.4 514.1L497.2 512.5L500 511.3L502.2 509.5L504 506.5L503.8 504.6L502.6 501.7L508.5 496.5L518.3 494.8L522.3 492.4L524 490.7L524.4 489.4L521.8 484.8L526.9 480.3L534.2 478.7L539 476.3L540.8 473.7L540.5 472.1L539.2 469.6L543.5 465.9L551.3 464.2L555.6 461.7L557 459.3L555.1 455.6L559.2 452.1L565 450.8L569.1 448.6L570.9 446.1L569.9 442.7L573.2 439.8L578.8 439.1L582.1 437.4L584.1 434.7L583.6 432L601 438.7L594.6 445.6L586.5 452.2L580.3 460L569.8 467.6L562.2 476.8L553.9 483.2L545.7 492.1L534.7 500.7L525.9 511.7L514.3 520.2L506.1 528.9ZM516.4 523.1L526.5 511.9L537.8 502.8L546.6 493.5L555.3 485.7L563.5 477.3L573.4 468.9L581 460.2L588.1 454.6L603.7 439.7L607.6 441.2L514.6 531.2L508.9 529.7Z" fill="#008038" fill-rule="evenodd"/>
<path d="M484.6 523L483.6 518.3L486.7 515.5L497.6 513L501.8 510.6L504.8 506.7L503.9 500.5L507.1 497.7L517.6 495.5L522.7 492.6L524.4 490.9L525.3 489L523.4 485.1L523.4 483.4L525.8 481.5L535 478.9L539.5 476.4L541.8 473.8L540.7 469.6L541.3 467.8L543.8 466.6L552 464.4L556.1 461.9L558.1 459.3L556.5 455.3L557.3 453.8L565.7 451.1L569.6 448.8L571.9 446.1L571.4 442.2L571.8 441.5L579.2 439.6L581.7 438.3L584.7 434.9L584.7 432.4L600.7 438.5L594.1 445.4L586.1 452.1L579.6 459.8L570.1 466.8L561.3 476.5L553.5 483.1L544.9 491.9L534.2 500.6L524.9 511.4L513.8 520L505.5 528.7ZM517.1 523.3L528.5 511.3L538.4 503L563.4 478.2L574 469.1L581.1 461.2L589.4 454.2L604.2 439.9L607.6 441.2L514.6 531.2L509.7 529.9Z" fill="#2a7a00" fill-rule="evenodd"/>
<path d="M506 499.7L509.8 497.7L518.3 495.8L523.2 492.7L526.3 488.6L524.8 484.4L525.8 482.6L536 479L540.9 475.8L542.9 473.4L542.4 470.2L542.9 468.3L545.2 467.1L551.6 465.1L556.5 462.1L559.3 459.1L558.2 455.9L558.8 454.2L566.3 451.3L570.8 448.3L573.2 445.8L573.7 442.2L579.5 440.2L581.5 438.9L585.2 435.2L585.7 432.8L600.3 438.4L593.7 445.3L586.4 451.3L579 459.6L569 467.4L562.4 474.9L553.1 482.9L545.4 491L534.7 499.6L525.2 510.3L513.4 519.9L505.1 528.6L485.7 523.3L485.1 519.4L486.1 517.2L489.3 515.6L498.5 513.3L504.1 508.9L505.7 506L505.3 501ZM524.5 516.4L530.4 510.7L539.6 503.3L548.2 494L556.9 486.3L564.9 477.7L574.4 470.2L581.1 462.2L590.2 454.5L597.1 447.4L605 440.2L607.6 441.2L514.6 531.2L510.8 530.2L518.3 523.7Z" fill="#82b400" fill-rule="evenodd"/>
<path d="M487.1 518.3L489 516.7L497.5 514.4L502.6 510.8L506.3 506.4L506.6 501.4L508 499.4L511.1 498.1L517.4 496.6L523.6 492.9L526 490.3L527 488.4L526.2 484.9L527.2 483L537.2 478.8L541.3 476L544.2 472.6L543.6 470.3L544.3 468.8L546.3 467.5L552.6 465.1L557.7 461.5L560.6 458L559.5 456.2L560.2 454.7L567 451.4L572.8 447.2L576.7 443.5L575.5 442.9L576.4 443L578.2 442.1L581.2 439.7L585.7 435.3L586.6 433.2L600 438.3L593.4 445.1L586 451.2L578.7 459.5L569.1 466.4L562.1 474.8L552.7 482.8L545 490.8L533.9 499.4L524.8 510.2L511.8 520.7L504.7 528.5L486.7 523.6L486.4 521ZM520.5 524.3L529.7 514L540.8 504.8L549.6 495.5L559 486.9L566.2 479.2L575.4 471.5L583.7 462.2L590.7 456.5L606.7 440.9L607.6 441.2L514.6 531.2L513.4 530.9Z" fill="#dce600" fill-rule="evenodd"/>
<path d="M508.7 500.3L512 498.4L518 496.7L524.1 493L527.6 488.6L528.1 487L527.4 484.8L528.3 483.4L536.1 479.8L541.7 476.1L545.2 472.1L545.6 471.3L545.2 469.9L546.2 468.4L551.3 466.3L559 461L561.3 458.2L561.8 456.8L561.2 455.7L562.1 454.4L568.2 451L577.3 444.4L587.7 433.5L599.5 438.1L592.4 445.6L585.8 450.2L581.7 455.9L577.7 460L573.9 462.8L567.5 465.9L566 469.3L562.5 473.9L552.2 482.7L543.8 491.5L537.4 496.1L532.7 497.9L531.4 499.7L530.8 502.3L526.2 508.3L520.4 513.6L511.8 519.5L504.3 528.4L487.4 523.8L487.9 522.7L487.8 519.8L489.1 518L491.4 516.6L496.2 515.5L498.3 514.4L502.1 511.9L504.9 509.1L507.4 505.5L507.5 502.3Z" fill="#ffee00" fill-rule="evenodd"/>
<path d="M489.5 519.4L491.4 517.7L494.7 516.8L498.9 514.6L503.5 511.1L508.1 505.3L508.7 502L510.1 500.1L517.7 497.3L524.8 493.2L528.2 488.8L529.2 486L528.8 484.6L529.3 483.7L536.9 479.7L543 475.5L545.3 473.2L548 469L560.3 460.5L562 458.5L564.2 454.3L578.1 444.7L582 440L588.3 433.8L598.5 437.7L595.2 442.4L592.1 445.5L589.5 447.3L586 448.5L584.2 449.6L581.9 455.1L577.4 459.9L572.9 462.8L566.6 464.6L565.4 467.1L564.5 470.7L562.3 473.7L558.9 476.9L552.2 481.6L546.2 488.8L542.5 492.2L539.2 494.4L533.4 495.8L532.4 495.8L531.1 494.1L529.6 493.4L526.9 493.9L526.2 494.8L526.5 496.3L527.4 497.4L529.7 498.3L529.9 499.1L529.2 503.8L528.1 505.5L525 509.1L520 513.5L510.2 519L506.4 525.1L503.8 528.3L487.9 523.9L489.3 521.7Z" fill="#ffcc00" fill-rule="evenodd"/>
<path d="M508 506.4L511.5 500.5L523.8 494.8L525 497.6L528.4 500.5L527.7 505.2L524.9 508.8L517.9 514.4L511.1 516.9L508.7 518.6L503.2 528.1L488.5 524.1L492.6 519L499.6 514.8L504 511.2ZM527.4 491.5L531.6 483.4L544.3 474.9L550.4 467.9L560.9 460.7L565.6 453.8L572.2 448.8L578.9 445L582.9 439.5L588.8 434L597.5 437.3L594 443.1L591.7 445.3L589.6 446.3L584.9 447.3L583.7 445.8L582 444.7L580 444.5L578.9 445L578.6 446.7L579.2 447.8L582.2 449.8L581.9 453.3L581.5 454.8L579.9 457.1L576.2 460.4L574.1 461.7L569.2 462.7L565.2 460.9L562.5 461.2L561.8 462L561.7 463.9L564.2 467.3L562.9 472.2L558.5 476.6L550.9 481.2L547 487.2L542 492L539.1 493.5L535 494.4L530.3 491.8Z" fill="#ffaa00" fill-rule="evenodd"/>
<path d="M503.7 512.3L511.9 501.8L514 500.1L522.1 496.3L527.2 501.6L526 506.8L523.3 509.8L519.8 512.6L512.6 515.1L511.3 515.3L507.4 513.7L505.4 514L504.4 514.9L504 517.3L505.7 520.4L504.2 524.6L502.1 527.8L489 524.2L493.5 519.2ZM531.3 485.1L533.4 482.9L544.9 475.1L551.8 467.3L559.5 462.5L560.5 465.2L562.9 467.6L562.7 470.1L561.7 472.7L558.8 475.7L550.4 480L546.2 487L543.3 490.3L539.7 492.4L535.2 493.2L532.1 491.1L529.1 490ZM563.3 459.1L566.1 454L569.1 451.4L573.5 448.4L576.8 446.9L581.2 451.5L580.7 454.7L579.5 457L575.8 460.3L573.3 461.3L569.3 461.7L565.7 459.6ZM584 438.7L589.3 434.2L596.3 436.9L592.9 443.2L590.7 445L587 446.2L581.3 442.9Z" fill="#ff7a00" fill-rule="evenodd"/>
<path d="M506 510.9L513.6 501.1L520.9 497.4L526 501.7L526.2 502.5L525.5 505.8L522.8 509.6L519.1 512.1L514.1 513.8L512.9 513.8L508.6 511.6ZM531.7 485.7L534.9 482.3L543.6 476.9L547.4 481.9L545.9 485.8L543.3 489.2L540.6 491.1L537.3 492.3L536.3 492.2L530.2 488.9ZM566 454.8L571.1 450.3L575.7 447.9L580.3 452.4L579.8 455.2L577.7 458.2L575 460L572.2 460.8L570.2 460.9L564.6 457.9ZM489.8 524.4L494.4 519.5L500.8 515.5L501.7 519.1L503.7 522.3L503.1 524.4L501 527.5ZM547.4 473.5L552.3 467.5L557.9 464L561.8 468.8L561.3 471.5L559.6 473.9L557.2 475.6L553.5 477.2L552.4 477.3L549.3 474.5ZM583.1 440.4L586 437.2L589.8 434.4L592.7 435.5L594.4 438.5L593.6 440.9L592.1 442.9L588.2 445.1L587.3 445.1L582.4 441.8Z" fill="#ff4400" fill-rule="evenodd"/>
<path d="M512.3 503.1L515.5 500.5L519.8 498.4L525 502.6L525.2 503.4L524.2 506.6L521.9 509.4L518 511.7L514.2 512.6L508 509ZM492.2 522.2L498.2 517.9L501.7 524.2L499.9 527.2L490.2 524.6ZM532 486.4L535.4 482.5L541.8 478.5L545.8 483.4L545.1 485.6L543.3 488.2L541.5 489.7L538.5 491.2L537.3 491.3L531.4 487.9ZM551.9 468.5L556.5 465.3L560.7 469.6L560.7 470.6L559.4 472.9L557.7 474.3L554.1 475.8L549.5 471.6ZM566.1 455.7L569.7 451.6L574.9 448.7L579.3 452.4L579.5 453.2L578.7 455.8L577.1 457.9L572.7 460.1L570.9 460.2L565.6 457ZM584.7 439L587.8 436.1L590.2 434.8L593 439.8L591.3 442.6L588.4 444L583.5 440.9Z" fill="#ff0a00" fill-rule="evenodd"/>
<path d="M511.3 505L514.9 501.5L518.5 499.5L522.9 502.5L524.1 504.3L523.4 506.3L521 509.1L518.5 510.7L515.4 511.5L509.7 507.5ZM533.6 485L536.9 481.9L540.3 479.9L542.9 482.3L544.3 484.8L542.5 487.9L540.6 489.4L538.5 490.1L532.5 486.9ZM567.3 454.6L570.1 451.7L574 449.4L577.6 452.2L578.6 453.9L577.6 456.3L576.4 457.7L572.7 459.4L570.5 458.8L566.6 456.1ZM492.3 523.2L495.1 520.7L496.6 522.6L497.1 523.9L496.9 525.1L494.9 525.1ZM551.8 469.5L554.5 467.1L557.9 469.4L559.2 471L557.6 473.3L555.9 474.1L553.2 471.9ZM584.8 439.7L588.6 436.2L590.5 438.9L590.9 440.8L589.9 442.1L588.8 442Z" fill="#dc0000" fill-rule="evenodd"/>
<path d="M511.4 506L513.5 503.4L517.1 500.8L520.1 502.1L522.8 504.6L522.5 506.1L521.1 508L518.8 509.6L516.7 510.3L513.2 508.4ZM534 485.6L535.6 483.6L538.7 481.3L541.2 483.3L542.3 485.7L541.4 487.6L539.4 488.3L536.2 487.4ZM567.6 455.2L569.6 452.5L573 450.3L575.8 452L577.6 454L576.4 456.8L573.5 458.5L570.7 457.8Z" fill="#b00000" fill-rule="evenodd"/>
<path d="M479.7 521.7L582.6 431.6M484.7 523.1L586.2 433M490.4 524.6L590.2 434.5M497.4 526.5L595.2 436.5M504.4 528.4L600.2 438.4M507.1 529.2L602.2 439.1M511.2 530.3L605.2 440.3M514.6 531.2L607.6 441.2M479.7 521.7L492.9 522.3L503.1 529.6L514.6 531.2M490.4 524.6L512.9 520.4M488.9 513.6L501.8 514.3L511.7 521.5L522.9 523.2M499.3 516.5L521.2 512.6M497.8 505.9L510.3 506.7L520 513.7L530.9 515.5M507.9 508.8L529.1 505.2M506.3 498.4L518.5 499.3L528 506.2L538.6 508M516.2 501.3L536.7 498M514.6 491.2L526.3 492.2L535.7 499L546 500.8M524.2 494.1L544.1 491.1M522.5 484.2L533.9 485.3L543.1 492L553.1 493.9M531.8 487.2L551.2 484.4M530.1 477.6L541.3 478.7L550.2 485.3L560 487.3M539.3 480.5L558.1 478M537.5 471.1L548.4 472.3L557.1 478.8L566.7 480.8M546.4 474.1L564.7 471.7M544.6 464.9L555.2 466.1L563.8 472.6L573.1 474.6M553.3 467.8L571.1 465.7M551.5 458.9L561.8 460.2L570.2 466.5L579.3 468.6M560 461.8L577.3 459.9M558.1 453L568.2 454.4L576.5 460.7L585.4 462.7M566.4 456L583.3 454.2M564.5 447.4L574.4 448.8L582.5 455L591.2 457.1M572.7 450.4L589.1 448.8M570.7 442L580.4 443.4L588.3 449.5L596.8 451.6M578.7 444.9L594.8 443.5M576.8 436.7L586.2 438.2L594 444.2L602.3 446.3M584.6 439.6L600.2 438.4M582.6 431.6L591.8 433.1L599.5 439.1L607.6 441.2" fill="none" stroke="#000" stroke-width=".75" stroke-opacity=".9"/>
<path d="M608.9 446L979.3 573.5L890.3 657.6L515.3 530.9Z" fill="#0010ff"/>
<path d="M731.1 502.7L762.6 498.9L979.3 573.5L890.3 657.6L667.2 582.2L668.3 562L643.1 537.2L624.1 517.5L658.6 505.7L680 505.7Z" fill="#0068ff" fill-rule="evenodd"/>
<path d="M608.9 446L597.3 456.5L585.6 467.1L574 477.7L562.3 488.3L550.6 498.9L538.8 509.6L527.1 520.2L515.3 530.9M629.9 453.2L618.3 463.8L606.7 474.3L595 484.9L583.4 495.5L571.7 506.1L560 516.7L548.3 527.4L536.5 538.1M650.8 460.4L639.2 471L627.7 481.5L616.1 492.1L604.4 502.7L592.8 513.3L581.1 523.9L569.4 534.6L557.7 545.2M671.7 467.6L660.2 478.1L648.6 488.7L637 499.3L625.5 509.8L613.8 520.4L602.2 531.1L590.6 541.7L578.9 552.4M692.5 474.8L681 485.3L669.5 495.8L658 506.4L646.4 517L634.8 527.6L623.2 538.2L611.6 548.8L600 559.5M713.3 481.9L701.8 492.5L690.4 503L678.9 513.5L667.3 524.1L655.8 534.7L644.2 545.3L632.6 556L621 566.6M734.1 489.1L722.6 499.6L711.2 510.1L699.7 520.7L688.2 531.2L676.7 541.8L665.2 552.4L653.6 563.1L642 573.7M754.7 496.2L743.3 506.7L731.9 517.2L720.5 527.8L709 538.3L697.5 548.9L686 559.5L674.5 570.2L663 580.8M775.4 503.3L764 513.8L752.6 524.3L741.2 534.9L729.8 545.4L718.3 556L706.9 566.6L695.4 577.2L683.9 587.9M796 510.4L784.7 520.9L773.3 531.4L761.9 541.9L750.5 552.5L739.1 563.1L727.7 573.7L716.2 584.3L704.7 594.9M816.5 517.5L805.2 528L793.9 538.5L782.6 549L771.2 559.5L759.8 570.1L748.4 580.7L737 591.3L725.5 601.9M837 524.5L825.8 535L814.5 545.5L803.2 556L791.8 566.6L780.5 577.1L769.1 587.7L757.7 598.3L746.3 608.9M857.5 531.6L846.3 542.1L835 552.6L823.7 563.1L812.4 573.6L801.1 584.2L789.8 594.7L778.4 605.3L767 615.9M877.9 538.6L866.7 549.1L855.5 559.6L844.2 570.1L833 580.6L821.7 591.2L810.4 601.7L799 612.3L787.7 622.9M898.3 545.6L887.1 556.1L875.9 566.6L864.7 577.1L853.5 587.6L842.2 598.1L830.9 608.7L819.6 619.3L808.3 629.9M918.6 552.6L907.5 563.1L896.3 573.6L885.1 584.1L873.9 594.6L862.7 605.1L851.4 615.7L840.2 626.2L828.9 636.8M938.9 559.6L927.8 570L916.6 580.5L905.5 591L894.3 601.5L883.1 612.1L871.9 622.6L860.6 633.2L849.4 643.8M959.1 566.6L948 577L936.9 587.5L925.8 598L914.7 608.5L903.5 619L892.3 629.5L881.1 640.1L869.9 650.7M979.3 573.5L968.2 583.9L957.2 594.4L946.1 604.9L935 615.4L923.8 625.9L912.7 636.5L901.5 647L890.3 657.6M608.9 446L629.9 453.2L650.8 460.4L671.7 467.6L692.5 474.8L713.3 481.9L734.1 489.1L754.7 496.2L775.4 503.3L796 510.4L816.5 517.5L837 524.5L857.5 531.6L877.9 538.6L898.3 545.6L918.6 552.6L938.9 559.6L959.1 566.6L979.3 573.5M597.3 456.5L618.3 463.8L639.2 471L660.2 478.1L681 485.3L701.8 492.5L722.6 499.6L743.3 506.7L764 513.8L784.7 520.9L805.2 528L825.8 535L846.3 542.1L866.7 549.1L887.1 556.1L907.5 563.1L927.8 570L948 577L968.2 583.9M585.6 467.1L606.7 474.3L627.7 481.5L648.6 488.7L669.5 495.8L690.4 503L711.2 510.1L731.9 517.2L752.6 524.3L773.3 531.4L793.9 538.5L814.5 545.5L835 552.6L855.5 559.6L875.9 566.6L896.3 573.6L916.6 580.5L936.9 587.5L957.2 594.4M574 477.7L595 484.9L616.1 492.1L637 499.3L658 506.4L678.9 513.5L699.7 520.7L720.5 527.8L741.2 534.9L761.9 541.9L782.6 549L803.2 556L823.7 563.1L844.2 570.1L864.7 577.1L885.1 584.1L905.5 591L925.8 598L946.1 604.9M562.3 488.3L583.4 495.5L604.4 502.7L625.5 509.8L646.4 517L667.3 524.1L688.2 531.2L709 538.3L729.8 545.4L750.5 552.5L771.2 559.5L791.8 566.6L812.4 573.6L833 580.6L853.5 587.6L873.9 594.6L894.3 601.5L914.7 608.5L935 615.4M550.6 498.9L571.7 506.1L592.8 513.3L613.8 520.4L634.8 527.6L655.8 534.7L676.7 541.8L697.5 548.9L718.3 556L739.1 563.1L759.8 570.1L780.5 577.1L801.1 584.2L821.7 591.2L842.2 598.1L862.7 605.1L883.1 612.1L903.5 619L923.8 625.9M538.8 509.6L560 516.7L581.1 523.9L602.2 531.1L623.2 538.2L644.2 545.3L665.2 552.4L686 559.5L706.9 566.6L727.7 573.7L748.4 580.7L769.1 587.7L789.8 594.7L810.4 601.7L830.9 608.7L851.4 615.7L871.9 622.6L892.3 629.5L912.7 636.5M527.1 520.2L548.3 527.4L569.4 534.6L590.6 541.7L611.6 548.8L632.6 556L653.6 563.1L674.5 570.2L695.4 577.2L716.2 584.3L737 591.3L757.7 598.3L778.4 605.3L799 612.3L819.6 619.3L840.2 626.2L860.6 633.2L881.1 640.1L901.5 647M515.3 530.9L536.5 538.1L557.7 545.2L578.9 552.4L600 559.5L621 566.6L642 573.7L663 580.8L683.9 587.9L704.7 594.9L725.5 601.9L746.3 608.9L767 615.9L787.7 622.9L808.3 629.9L828.9 636.8L849.4 643.8L869.9 650.7L890.3 657.6" fill="none" stroke="#000" stroke-width="0.95" stroke-opacity="0.95"/>
<path d="M604.8 463.1L618.1 467.3" stroke="#a6f02c" stroke-width="1.1" fill="none"/><path d="M626.2 469.8L617.1 470.3L619.0 464.2Z" fill="#a6f02c"/><path d="M591.6 480.6L605.9 485.0" stroke="#a6f02c" stroke-width="1.1" fill="none"/><path d="M614.0 487.5L604.9 488.1L606.8 481.9Z" fill="#a6f02c"/><path d="M562.0 507.5L574.3 511.2" stroke="#a6f02c" stroke-width="1.1" fill="none"/><path d="M582.4 513.6L573.3 514.2L575.2 508.1Z" fill="#a6f02c"/><path d="M537.7 521.1L550.8 525.0" stroke="#a6f02c" stroke-width="1.1" fill="none"/><path d="M559.0 527.4L549.9 528.1L551.8 521.9Z" fill="#a6f02c"/><path d="M528.9 645.8L564.7 655.7" stroke="#a6f02c" stroke-width="1.4" fill="none"/><path d="M573.4 658.1L563.8 659.0L565.6 652.4Z" fill="#a6f02c"/><path d="M528.4 688.2L553.6 694.0" stroke="#a6f02c" stroke-width="1.4" fill="none"/><path d="M562.4 696.0L552.9 697.3L554.4 690.7Z" fill="#a6f02c"/><path d="M570.2 454.6L582.4 458.7" stroke="#a6f02c" stroke-width="2.2" fill="none"/><path d="M550.9 469.8L574.3 476.0" stroke="#a6f02c" stroke-width="2.2" fill="none"/><path d="M521.4 496.3L535.6 500.4" stroke="#a6f02c" stroke-width="2.2" fill="none"/><path d="M503.0 512.6L517.3 515.6" stroke="#a6f02c" stroke-width="2.2" fill="none"/><path d="M532.6 541.0L575.3 553.3" stroke="#a6f02c" stroke-width="2.2" fill="none"/><path d="M532.6 583.8L573.3 595.0" stroke="#a6f02c" stroke-width="2.2" fill="none"/><path d="M526.3 730L552.5 735.3" stroke="#b8c4b0" stroke-width="1.6"/><path d="M115.4 476.4L84 467.5" stroke="#e8141c" stroke-width="2.6" fill="none"/><path d="M75 465L86.4 463.6L83.8 471.8Z" fill="#e8141c" stroke="#7a0a0e" stroke-width=".6"/><path d="M139 467.5C127 468 119 480 124 493C127 500 133 502 137 501.4" stroke="#7a0a0e" stroke-width="5.4" fill="none"/><path d="M139 467.5C127 468 119 480 124 493C127 500 133 502 137 501.4" stroke="#e8141c" stroke-width="4" fill="none"/><path d="M137.6 462L142.8 472.4L133.6 472Z" fill="#e8141c" stroke="#7a0a0e" stroke-width=".6"/><path d="M138.4 470.5V506.4L134.4 501" stroke="#e8141c" stroke-width="2.2" fill="none"/><path d="M931 697.5C945 698 948 720 938 728C935 730.4 931.6 730.6 929.6 729" stroke="#3f7a10" stroke-width="4.6" fill="none"/><path d="M931 697.5C945 698 948 720 938 728C935 730.4 931.6 730.6 929.6 729" stroke="#8fe81c" stroke-width="3.2" fill="none"/><path d="M929.8 693V731" stroke="#3f7a10" stroke-width="3"/><path d="M929.8 693V731" stroke="#8fe81c" stroke-width="1.8"/><path d="M925.4 722.6L930 731.4L934.8 723" stroke="#3f7a10" stroke-width="1.2" fill="#8fe81c"/><path d="M947.0 722.9L978.1 726.3" stroke="#8fe81c" stroke-width="2" fill="none"/><path d="M990.0 727.6L977.6 730.7L978.5 721.9Z" fill="#8fe81c"/>
</g>
</svg>
<div class="labt" style="left:643px;top:461px">B1: 34.41</div>
<div class="labt" style="left:632px;top:479px">B2: 37.72</div>
<div class="labt" style="left:602px;top:505px">B4: 37.72</div>
<div class="labt" style="left:576px;top:519px">B3: 34.40</div>
<div class="labt" style="left:593.4px;top:544px">B8: 33.56</div>
<div class="labt" style="left:517.5px;top:585.5px">B11: 7.03</div>
<div class="labt" style="left:591.5px;top:585.5px">B12: 33.26</div>
<div class="labt" style="left:509.5px;top:647.5px">B23: 3.07</div>
<div class="labt" style="left:589px;top:648.5px">B24: 31.83</div>
<div class="labt" style="left:573.5px;top:686.5px">B20: 24.93</div>
<div class="labt" style="left:561px;top:724px">B16: 18.95</div>
<div class="labt" style="left:514.5px;top:732.5px">B15: 5.90</div>
<div class="lab" style="left:65px;top:448.4px">400.00</div>
<div class="lab" style="left:138px;top:438.6px">20.00</div>
<div class="labt" style="left:127px;top:479px;padding:0 3.3px">100.00</div>
<div class="lab" style="left:924.4px;top:666.2px">-20.00</div>
<div class="labt" style="left:935px;top:712px;padding:0 3.3px">100.00</div>
<div class="lab" style="left:997px;top:717.2px">400.00</div>
<!-- right pane -->
<div class="abs" style="left:1114px;top:157px;width:806px;height:1px;background:#bdbdbd"></div>
<div class="abs" style="left:1114px;top:158px;width:806px;height:25px;background:#f26d21"></div>
<div class="abs" style="left:1297px;top:162px;width:58px;height:21px;background:#f0f0f0"></div>
<div class="abs" style="left:1132px;top:166px;font-size:12px;line-height:15px;color:#fff">Analysis</div>
<div class="abs" style="left:1200px;top:166px;font-size:12px;line-height:15px;color:#fff">Plates</div>
<div class="abs" style="left:1257px;top:166px;font-size:12px;line-height:15px;color:#fff">Bolts</div>
<div class="abs" style="left:1309px;top:166px;font-size:12px;line-height:15px;color:#f26d21">Welds</div>
<div class="abs" style="left:1130px;top:198px;font-size:13.3px;font-weight:bold;line-height:17px;color:#f26d21;white-space:nowrap">Check of welds for extreme load effect</div>
<!-- table 1 -->
<div class="abs" style="left:1125px;top:218px;width:768px;height:246px;border:1px solid #8c8c8c;background:#fff"></div>
<div class="abs" style="left:1126px;top:219px;width:748px;height:44px;background:#f0f0f0"></div>
<div class="abs" style="left:1763px;top:219px;width:49px;height:44px;background:#b86848"></div>
<div class="hln" style="left:1126px;top:263px;width:748px"></div>
<div class="vl" style="left:1154px;top:219px;height:244px"></div>
<div class="vl" style="left:1184px;top:219px;height:73px"></div>
<div class="vl" style="left:1231px;top:219px;height:73px"></div>
<div class="vl" style="left:1280px;top:219px;height:73px"></div>
<div class="vl" style="left:1329px;top:219px;height:73px"></div>
<div class="vl" style="left:1393px;top:219px;height:73px"></div>
<div class="vl" style="left:1444px;top:219px;height:73px"></div>
<div class="vl" style="left:1501px;top:219px;height:73px"></div>
<div class="vl" style="left:1569px;top:219px;height:73px"></div>
<div class="vl" style="left:1619px;top:219px;height:73px"></div>
<div class="vl" style="left:1662px;top:219px;height:73px"></div>
<div class="vl" style="left:1712px;top:219px;height:73px"></div>
<div class="vl" style="left:1762px;top:219px;height:73px"></div>
<div class="vl" style="left:1812px;top:219px;height:73px"></div>
<div class="vl" style="left:1874px;top:219px;height:73px"></div>
<div class="th" style="left:1189px;top:235px">Status</div>
<div class="th" style="left:1236px;top:235px">Item</div>
<div class="th" style="left:1285px;top:235px">Edge</div>
<div class="th" style="left:1334px;top:235px">Xu</div>
<div class="th" style="left:1398px;top:228px">t<span style="font-size:10px;position:relative;top:3px">w</span></div><div class="tu" style="left:1398px;top:245px">[in]</div>
<div class="th" style="left:1449px;top:228px">w</div><div class="tu" style="left:1449px;top:245px">[in]</div>
<div class="th" style="left:1506px;top:228px">L</div><div class="tu" style="left:1506px;top:245px">[in]</div>
<div class="th" style="left:1574px;top:228px">L<span style="font-size:10px;position:relative;top:3px;left:1px">c</span></div><div class="tu" style="left:1574px;top:245px">[in]</div>
<div class="th" style="left:1624px;top:235px">Loads</div>
<div class="th" style="left:1667px;top:228px">F<span style="font-size:10px;position:relative;top:3px;left:1px">n</span></div><div class="tu" style="left:1667px;top:245px">[kip]</div>
<div class="th" style="left:1717px;top:228px">ϕRn</div><div class="tu" style="left:1717px;top:245px">[kip]</div>
<div class="th" style="left:1767px;top:228px;color:#f47a30">Ut</div><div class="tu" style="left:1767px;top:245px;color:#f47a30">[%]</div>
<svg style="left:1796px;top:237px" width="10" height="8"><path d="M0.5 0.5h9l-4.5 6.5z" fill="#fff"/></svg>
<div class="th" style="left:1817px;top:235px">Detailing</div>
<!-- row -->
<div class="td" style="left:1236px;top:272px">PP1b</div>
<div class="td" style="left:1285px;top:272px">B2-w 1</div>
<div class="td" style="left:1334px;top:272px">E70xx</div>
<div class="td" style="left:1410px;top:272px">1/4</div>
<div class="td" style="left:1462px;top:272px">5/16</div>
<div class="td" style="left:1506px;top:272px">2'-2"3/16</div>
<div class="td" style="left:1574px;top:272px">1"3/8</div>
<div class="td" style="left:1624px;top:272px">LE1</div>
<div class="td" style="left:1667px;top:272px">12.66</div>
<div class="td" style="left:1717px;top:272px">14.34</div>
<div class="td" style="left:1767px;top:272px">88.3</div>
<svg style="left:1395px;top:270px" width="110" height="16" viewBox="1395 270 110 16">
 <path d="M1399 283.6H1406.4V275.6Z M1432.4 275.6V283.6H1440.6Z M1450.6 283.6H1458V275.6Z M1489.4 275.6V283.6H1497.6Z" fill="#111"/>
</svg>
<!-- status icons -->
<svg style="left:1199px;top:268px" width="20" height="20"><circle cx="9.7" cy="10.2" r="8" fill="#3fbf3f"/><circle cx="9.7" cy="10.2" r="7.2" fill="none" stroke="#7ddc6c" stroke-width="1"/><path d="M5.4 10.4L8.6 13.4L14.2 7.2" fill="none" stroke="#fff" stroke-width="2.2"/></svg>
<svg style="left:1834px;top:268px" width="20" height="20"><circle cx="9.7" cy="10.2" r="8" fill="#3fbf3f"/><circle cx="9.7" cy="10.2" r="7.2" fill="none" stroke="#7ddc6c" stroke-width="1"/><path d="M5.4 10.4L8.6 13.4L14.2 7.2" fill="none" stroke="#fff" stroke-width="2.2"/></svg>
<!-- minus box + red highlight -->
<div class="abs" style="left:1161px;top:270px;width:18px;height:18px;border:1px solid #9a9a9a;background:#fff"></div>
<div class="abs" style="left:1165px;top:278px;width:10px;height:2px;background:#222"></div>
<div class="abs" style="left:1148px;top:258.5px;width:42px;height:37.5px;border:3.2px solid #f5404e;border-radius:7px"></div>
<!-- outer scrollbar -->
<div class="abs" style="left:1875px;top:219px;width:17px;height:244px;background:#f0f0f0"></div>
<div class="abs" style="left:1875px;top:237px;width:17px;height:61px;background:#c8c8c8"></div>
<svg style="left:1875px;top:219px" width="17" height="244"><path d="M5 12L8.5 8.5L12 12M5 232L8.5 235.5L12 232" fill="none" stroke="#7a7a7a" stroke-width="1"/></svg>
<!-- inner scrollbar -->
<div class="abs" style="left:1859px;top:293px;width:15px;height:170px;background:#f0f0f0"></div>
<div class="abs" style="left:1861px;top:309px;width:12px;height:100px;background:#c1c1c1"></div>
<svg style="left:1859px;top:293px" width="15" height="20"><path d="M4 10.5h7l-3.5-4z" fill="#8a8a8a"/></svg>
<!-- formulas -->
<div class="ft" style="left:1165px;top:302px"><b>Weld resistance check</b> (AISC 360-22 – J2-4)</div>
<div class="ft m" style="left:1171px;top:324px;font-size:16px;line-height:20px">ϕR<sub style="font-size:10px;vertical-align:-3px">n</sub> <span class="mr">=</span> ϕ <span class="mr">·</span> F<sub style="font-size:10px;vertical-align:-3px">nw</sub> <span class="mr">·</span> A<sub style="font-size:10px;vertical-align:-3px">we</sub> <span class="mr">=</span></div>
<div class="ft" style="left:1326px;top:329px">14.34</div>
<div class="ft" style="left:1367px;top:329px">kip</div>
<div class="ft" style="left:1393px;top:329px;font-size:11px">≥</div>
<div class="ft m" style="left:1413px;top:324px;font-size:16px;line-height:20px">F<sub style="font-size:10px;vertical-align:-3px">n</sub> <span class="mr">=</span></div>
<div class="ft" style="left:1461px;top:329px">12.66</div>
<div class="ft" style="left:1502px;top:329px">kip</div>
<div class="ft" style="left:1205px;top:356px">Where:</div>
<div class="ft m" style="left:1205px;top:370px;font-size:16px;line-height:20px">F<sub style="font-size:10px;vertical-align:-3px">nw</sub> <span class="mr">=</span></div>
<div class="ft" style="left:1248px;top:375px">62.8 ksi &nbsp; – nominal stress of weld material:</div>
<div class="abs" style="left:1236.5px;top:415.5px;width:4px;height:4px;border-radius:2px;background:#111"></div>
<div class="ft m" style="left:1251px;top:405px;font-size:16px;line-height:20px;letter-spacing:.15px">F<sub style="font-size:10px;vertical-align:-3px">nw</sub> <span class="mr">= 0.6 ·</span> F<sub style="font-size:10px;vertical-align:-3px">EXX</sub> <span class="mr">· (1 + 0.5 ·</span> sin<sup style="font-size:9px;vertical-align:6px" class="mr">1.5</sup>θ<span class="mr">)</span></div>
<div class="ft" style="left:1487px;top:410px">, where:</div>
<div class="abs" style="left:1276.5px;top:436px;width:5px;height:5px;border-radius:3px;border:1px solid #111"></div>
<div class="ft m" style="left:1291px;top:426px;font-size:16px;line-height:20px">F<sub style="font-size:10px;vertical-align:-3px">EXX</sub> <span class="mr">=</span></div>
<div class="ft" style="left:1350px;top:430px">70.0 ksi – electrode classification number, i.e. minimum specified tensile strength</div>
<div class="abs" style="left:1276.5px;top:454px;width:5px;height:5px;border-radius:3px;border:1px solid #111"></div>
<div class="ft m" style="left:1291px;top:444px;font-size:16px;line-height:20px">θ <span class="mr">=</span></div>
<div class="ft" style="left:1321px;top:448px">83.4° – angle of loading measured from the weld longitudinal axis</div>
<!-- design data -->
<div class="abs" style="left:1130px;top:469px;font-size:13.3px;font-weight:bold;line-height:17px;color:#f26d21;white-space:nowrap">Design data</div>
<div class="abs" style="left:1125px;top:494px;width:135px;height:105px;border:1px solid #8c8c8c;background:#fff"></div>
<div class="abs" style="left:1126px;top:495px;width:133px;height:44px;background:#f0f0f0"></div>
<div class="hln" style="left:1126px;top:539px;width:133px"></div>
<div class="hln" style="left:1126px;top:568px;width:133px;background:#d0d0d0"></div>
<div class="vl" style="left:1154px;top:495px;height:103px"></div>
<div class="vl" style="left:1218px;top:495px;height:103px"></div>
<div class="th" style="left:1159px;top:511px">Material</div>
<div class="th" style="left:1223px;top:503px;font-weight:normal;font-size:13px">F<span style="font-size:10.5px;font-weight:bold;position:relative;top:3px;left:1px">exx</span></div><div class="tu" style="left:1223px;top:522px">[ksi]</div>
<div class="td" style="left:1159px;top:548px">A572 Gr.50</div><div class="td" style="left:1223px;top:548px">65.0</div>
<div class="td" style="left:1159px;top:577px">E70xx</div><div class="td" style="left:1223px;top:577px">70.0</div>
<!-- splitter -->
<div class="abs" style="left:1114px;top:609px;width:806px;height:6px;background:#c8c8c8"></div>
<div class="abs" style="left:1117px;top:618px;width:24px;height:24px;background:#efefef;border:1px solid #d6d6d6"></div>
<svg style="left:1117px;top:618px" width="24" height="24"><path d="M5 8V5H8M5 5L8.6 8.6M16 5H19V8M19 5L15.4 8.6M5 16V19H8M5 19L8.6 15.4M16 19H19V16M19 19L15.4 15.4" fill="none" stroke="#8a8a8a" stroke-width="1"/></svg>
<svg style="left:1290px;top:628px" width="215" height="360" viewBox="1290 628 215 360">
<g>
<rect x="1297.3" y="634.2" width="198.6" height="345.4" fill="#623fb0"/>
<path d="M1297.3 634.2L1495.9 634.2L1495.9 720.8L1489.3 720.9L1487.3 784.5L1481.5 842.3L1472.7 879.9L1472.4 895.8L1469.6 907.3L1469.7 926.1L1470.3 929L1473.7 936.2L1474.8 942L1473.9 947.8L1470.5 955L1469.7 957.9L1469.4 979.6L1323.8 979.6L1323.4 957.9L1322.6 955L1319.1 947.8L1318.1 942L1319.3 936.2L1322.8 929L1323.5 926.1L1323.6 907.3L1320.7 895.8L1320.5 879.9L1311.7 842.3L1305.9 784.5L1303.9 720.9L1297.3 720.8Z" fill="#5840c6" fill-rule="evenodd"/>
<path d="M1297.3 634.2L1495.9 634.2L1495.9 720.7L1484.3 720.9L1482.3 784.5L1476.7 842.3L1467.8 879.9L1467.4 885.7L1468.8 891.4L1468.7 894.3L1467.8 897.2L1465.9 900.4L1464.7 905.9L1464.5 923.2L1465.1 929L1465.9 931L1470.9 936.2L1472.2 939.1L1472.6 942L1472.3 944.9L1471.2 947.8L1468.8 951L1465.9 953.5L1464.8 956.5L1464.5 979.6L1328.7 979.6L1328.3 956.5L1327.3 953.6L1324.4 951.2L1321.8 947.8L1320.4 943.5L1320.5 940.6L1321.6 937.2L1323.2 934.8L1327.3 931L1328.1 929L1328.7 923.2L1328.6 907.3L1327.7 901.6L1325.2 897.2L1324.3 894.3L1324.2 891.4L1325.7 885.7L1325.4 879.9L1316.4 842.3L1310.9 784.5L1308.9 720.9L1297.3 720.7Z" fill="#5140d3" fill-rule="evenodd"/>
<path d="M1297.3 634.2L1495.9 634.2L1495.9 720.6L1481.6 720.9L1479.5 784.5L1475 829.3L1474.4 842.3L1473.6 846.6L1469.7 859.6L1465.3 878.4L1464.7 882.8L1465.5 890L1465.3 894.3L1462.4 903L1461.8 907.3L1461.7 924.7L1462.3 929L1463.8 931.9L1469.6 937.7L1470.8 940.6L1470.9 943.5L1470.2 945.9L1469 947.8L1464.2 952.1L1463.2 953.6L1462.1 956.5L1461.7 979.6L1331.5 979.6L1331.1 956.5L1330.1 953.6L1329 952.1L1324 947.8L1323 946.4L1322 943.5L1322.1 940.6L1323.3 937.7L1329.4 931.9L1330.9 929L1331.5 924.7L1331.4 907.3L1330.9 903L1327.8 894.3L1327.6 890L1328.5 882.8L1327.9 878.4L1323.5 859.6L1319.5 846.6L1318.7 842.3L1318.2 829.3L1313.7 784.5L1311.5 720.9L1297.3 720.6Z" fill="#4740e3" fill-rule="evenodd"/>
<path d="M1297.3 634.2L1495.9 634.2L1495.9 720.4L1479.2 720.9L1477.8 752.7L1477.8 771.5L1472.3 829.3L1472.2 843.8L1467.4 858.2L1462.5 878.4L1461.9 884.2L1462.9 891.4L1462.1 895.8L1459.7 901.6L1459 907.3L1459 924.7L1459.4 929L1460.7 931.9L1467.3 937.3L1468.7 939.1L1469.3 940.6L1469.4 943.5L1468.1 946.4L1461.1 952.1L1459.5 955L1459 959.4L1458.9 979.6L1334.3 979.6L1334.2 959.4L1333.7 955L1332.1 952.1L1324.8 946.4L1323.5 943.5L1323.6 940.6L1324.4 938.8L1325.9 937.1L1331.1 933.4L1333.4 930.5L1334.2 924.7L1334.2 907.3L1333.5 901.6L1331.1 895.8L1330.3 891.4L1331.3 884.2L1330.7 878.4L1325.8 858.2L1322 848.1L1320.9 843.8L1320.9 829.3L1315.4 771.5L1315.4 751.3L1313.9 720.9L1297.3 720.4Z" fill="#3a40f6" fill-rule="evenodd"/>
<path d="M1297.3 634.2L1495.9 634.2L1495.9 720.3L1477.2 720.9L1475.8 732.5L1475.2 751.3L1475.8 771.5L1474.5 780.3L1469.7 829.3L1470.4 843.8L1469.1 848.1L1466.2 853.9L1464.6 858.2L1460.2 876.6L1459 882.8L1458.9 891.4L1456.9 900.1L1456.3 905.9L1456.3 926.1L1457.1 931.9L1458.8 933.9L1463 935.9L1465.5 937.7L1467.3 939.7L1468.1 942L1467.4 944.9L1466.1 946.4L1463 948.7L1458.6 950.7L1457.3 952.1L1456.8 953.6L1456.3 959.4L1456.3 979.6L1336.9 979.6L1336.9 959.4L1336.4 953.6L1334.8 950.7L1328.7 947.9L1326.9 946.4L1325.6 944.9L1324.9 942L1325.9 939.3L1327.6 937.7L1330.2 936L1334.4 934.1L1336.2 931.9L1336.9 926.1L1336.8 904.5L1336.4 900.1L1334.5 891.4L1334.2 882.8L1333 876.6L1328.6 858.2L1327 853.9L1324.1 848.1L1322.7 843.8L1323.5 829.3L1318.7 780.6L1317.3 771.5L1318.1 757L1317.7 739.7L1317.3 732.1L1315.8 720.9L1297.3 720.3Z" fill="#3351ff" fill-rule="evenodd"/>
<path d="M1297.3 634.2L1495.9 634.2L1495.9 720.2L1475.8 720.9L1473.8 733.9L1473.2 748.4L1473.1 757L1474.3 767.2L1474.2 771.5L1472.4 781.6L1467.6 829.3L1467.6 833.6L1468.6 840.9L1468.6 843.8L1467.7 846.6L1463.5 855.3L1461.9 861.1L1457.4 879.9L1454.9 892.9L1454.3 901.6L1454.2 927.6L1455.2 934.8L1455.9 936.3L1457.3 936.9L1461.6 937.2L1464.5 938.5L1466.1 940.6L1466.5 942L1465.5 944.9L1464 946.4L1461.6 947.4L1457.3 947.7L1455.9 948.3L1455.4 949.3L1454.3 955L1454.1 975.3L1453.8 976.7L1453 977.7L1423 977.9L1417.3 978.4L1412.8 979.6L1366 979.6L1360.2 978L1340.2 977.7L1339.4 976.7L1339 973.8L1338.9 955L1338 949.3L1337.3 947.9L1335.9 947.2L1331.6 947.2L1328.7 946.1L1326.7 943.5L1326.5 942L1326.9 940.6L1328.7 938.5L1331.6 937.4L1335.9 937.3L1337.3 936.7L1338.2 934.8L1339 927.6L1338.9 903L1338.4 892.9L1331.6 862.1L1329.7 855.3L1325.4 846.6L1324.5 843.8L1324.5 840.9L1325.6 833.6L1325.5 827.9L1320.9 783.1L1318.8 770L1320.1 755.6L1319.6 736.8L1319 731L1317.3 720.9L1297.3 720.2Z" fill="#3375ff" fill-rule="evenodd"/>
<path d="M1297.3 634.2L1495.9 634.2L1495.9 720.1L1481.6 720.3L1474.7 720.9L1474.1 725.2L1472.2 732.5L1471.5 738.3L1471.1 755.6L1472.9 765.7L1473.2 770L1470 785.9L1465.8 826.4L1465.6 832.2L1467.1 840.9L1467 843.8L1466 846.6L1462.7 852.4L1461 856.8L1452.6 892.9L1452.3 930.5L1452.8 936.2L1454 942L1452.4 952.1L1452.2 969.5L1451.6 971.6L1427.3 971.6L1420.2 972.1L1414.5 973.9L1406.3 978.2L1402.3 979.6L1373 979.6L1365.9 973.9L1361.6 972.2L1355.9 971.6L1341.6 971.6L1341 969.5L1340.8 952.1L1339.6 942L1341 929L1340.7 892.9L1332.2 856.8L1330.5 852.4L1327.1 846.6L1326.1 843.8L1326.1 840.9L1327.6 832.2L1327.4 826.4L1323.2 785.9L1319.9 770L1320.2 765.7L1322.1 755.6L1321.3 733.9L1319 725.2L1318.4 720.9L1311.6 720.3L1297.3 720.1ZM1329 940.6L1330.2 939.8L1331.6 939.5L1333 939.9L1334 940.6L1334.8 942L1334.5 943.5L1332.5 944.9L1330.2 944.9L1328.6 943.5L1328.4 942ZM1458.3 940.6L1460.2 939.4L1461.6 939.2L1463 939.7L1464.5 941.1L1464.6 943.5L1463 945L1461.6 945.3L1459.5 944.9L1457.9 943.5L1457.6 942Z" fill="#3398ff" fill-rule="evenodd"/>
<path d="M1297.3 634.2L1495.9 634.2L1495.9 719.9L1480.2 720.1L1473.8 720.9L1473 725.2L1469.9 735.4L1469.2 755.6L1471.8 765.7L1472.2 770L1471.4 774.4L1468.8 781.6L1468 785.9L1463.9 826.4L1463.8 833.6L1465.4 840.9L1465.4 843.8L1464.3 846.6L1460.6 852.4L1459 856.8L1450.4 892.9L1450.2 929L1450.7 942L1450.2 965.3L1427.3 965.5L1420.2 966.2L1415.9 967.8L1405.9 974.9L1401.6 976.8L1397.3 977.4L1390.2 976.2L1387.3 976.2L1380.2 978.4L1377.8 978.2L1375.9 977.4L1367.3 969.3L1363 966.6L1357.3 965.6L1343 965.3L1342.6 942L1343 927.6L1342.8 892.9L1333.8 855.3L1332.6 852.4L1328.9 846.6L1327.7 843.8L1327.7 840.9L1329.6 832.2L1329.2 825L1325.2 785.9L1324.4 781.6L1321.7 774.4L1320.9 770L1321.2 765.7L1324 755.6L1323.3 735.4L1322.7 732.5L1320 725.2L1319.3 720.9L1313 720.1L1297.3 719.9Z" fill="#33bbff" fill-rule="evenodd"/>
<path d="M1297.3 634.2L1495.9 634.2L1495.9 719.8L1478.8 720L1472.9 720.9L1472.1 725.2L1469 732.5L1468.2 735.4L1467.4 744L1467.2 754.2L1467.9 758.5L1470.8 765.7L1471.2 770L1470.3 774.4L1466.5 783.1L1465.3 791.7L1461.6 830.7L1461.9 835.1L1463.5 840.9L1463.5 843.8L1458.4 852.4L1456.9 856.8L1448.3 892.9L1448.3 944.9L1448.1 953.6L1447.3 956.7L1440.2 956.8L1420.2 958.7L1415.9 961.2L1408.1 969.5L1404.6 972.4L1401.6 973.9L1397.3 974.7L1388.7 972.7L1385.9 972.9L1380.2 974.6L1377.3 974.1L1374.5 972L1365.9 961.7L1363 959.4L1355.9 957.3L1345.8 956.5L1345.1 953.6L1344.9 944.9L1344.9 892.9L1335.4 853.9L1334.1 851L1329.7 843.8L1329.7 840.9L1331.3 835.1L1331.6 830.7L1327.9 791.7L1326.7 783.1L1322.8 774.4L1321.8 770L1322.3 765.7L1325.2 758.5L1326 754.2L1325.8 744L1324.9 735.4L1324.2 732.5L1321 725.2L1320.1 720.9L1313 720L1297.3 719.8Z" fill="#33d5f8" fill-rule="evenodd"/>
<path d="M1297.3 634.2L1495.9 634.2L1495.9 719.7L1478.8 719.8L1472.2 720.9L1471.2 725.2L1467.6 732.5L1466.2 736.8L1464.8 746.9L1464.8 754.2L1465.4 757L1469.8 765.7L1470.4 770L1469.2 774.4L1464.8 781.6L1463.4 787.4L1459.1 830.7L1459.4 835.1L1461.1 840.9L1461.1 843.8L1457.2 849.5L1455.3 853.9L1445.9 892.9L1445.7 946.4L1444.5 947.7L1441.6 948.6L1435.9 952.3L1431.6 954.1L1427.3 954.8L1418.7 953.5L1415.9 954.1L1413 957.4L1409 963.7L1405.5 968L1403 970.2L1400.2 971.6L1395.9 971.8L1387.3 969.1L1380.2 970.8L1377.3 970.1L1373 966L1369.1 959.4L1367.3 957.3L1357.3 952.7L1351.6 949L1348.7 947.8L1347.5 946.4L1347.3 892.9L1337.9 853.9L1336.1 849.5L1332.3 843.8L1332.2 840.9L1333.9 835.1L1334.1 830.7L1329.8 787.4L1328.4 781.6L1323.8 774.4L1322.7 770L1323.3 765.7L1327.8 757L1328.4 754.2L1328.4 746.9L1327 736.8L1325.6 732.5L1321.8 725.2L1320.8 720.9L1314.4 719.9L1297.3 719.7Z" fill="#33e7eb" fill-rule="evenodd"/>
<path d="M1297.3 634.2L1495.9 634.2L1495.9 719.6L1478.8 719.7L1471.5 720.9L1470.4 725.2L1465.3 733.9L1464 738.3L1462.4 746.9L1462.5 755.6L1463.6 758.5L1468.1 764.3L1469.3 767.2L1469.5 770L1468.2 774.4L1463.2 780.2L1462.3 781.6L1461.4 784.5L1456.6 829.3L1456.5 835.1L1457.2 842.3L1452.7 853.9L1443.6 892.9L1443.4 936.2L1443 939L1441.6 940.5L1437.4 947.8L1434.5 950.6L1431.6 952.1L1428.7 952.9L1424.5 952.8L1415.9 949.3L1414.5 949.6L1413 950.9L1407.4 960.8L1404.5 965L1401.6 967.7L1398.7 969L1395.9 968.9L1390.2 965.8L1387.3 965L1380.2 966.9L1377.3 966L1374.9 963.7L1370.2 956.1L1368.7 955L1360.2 951.9L1356.4 949.3L1354 946.4L1350.2 939.5L1349.7 936.2L1349.9 907.3L1349.5 892.9L1340.5 853.9L1336.2 842.3L1336.8 835.1L1336.6 829.3L1331.9 784.5L1331 781.6L1330 780.2L1324.9 774.4L1323.5 770L1323.8 767.2L1324.4 765.2L1325.9 762.8L1329.6 758.5L1330.7 755.6L1330.8 746.9L1329.2 738.3L1327.9 733.9L1322.6 725.2L1321.5 720.9L1314.4 719.7L1297.3 719.6Z" fill="#33e5d4" fill-rule="evenodd"/>
<path d="M1331.6 634.2L1461.6 634.2L1461.6 638.5L1495.9 638.7L1495.9 719L1480.2 719.2L1470.9 720.9L1469.7 725.2L1464.5 732.5L1462.5 736.8L1459.9 746.9L1459.9 755.6L1460.9 758.5L1467.3 764.8L1468.4 767.2L1468.7 770L1467 774.4L1460.3 780.2L1459.1 783.1L1454.3 827.9L1453.4 842.3L1450.2 853.9L1444 879.9L1441.5 892.9L1440.8 917.5L1440.3 921.8L1440.2 922.2L1433 922.4L1428.7 923.1L1425.9 924.5L1425.2 926.1L1433 929.5L1436.8 933.4L1438.1 937.7L1438.3 940.6L1437.8 943.5L1436.5 946.4L1434 949.3L1430.2 951.3L1427.3 951.8L1424.5 951.5L1421.6 950.4L1414.5 944.5L1413 945.2L1404.5 960.7L1401.6 963.8L1398.7 965.3L1395.8 965.1L1388.7 960.7L1387.3 960.3L1385.9 960.5L1381.6 962.4L1378.7 962.3L1376.8 960.8L1371.6 954.2L1370.2 953.4L1363 951.8L1360.2 950.4L1357.1 947.8L1355.3 944.9L1354.4 940.6L1355.1 934.8L1360.2 927.6L1360.4 926.1L1358.7 923.7L1355.9 922.6L1353 922.3L1352.9 921.8L1351.5 892.9L1349.2 879.9L1339.9 842.3L1338.9 827.9L1334.2 783.1L1332.9 780.2L1326 774.4L1324.4 770L1324.7 767.2L1325.9 764.6L1327.3 762.9L1331.1 759.9L1333 757L1333.4 754.2L1333.4 748.4L1332.4 742.6L1329.5 733.9L1324.2 726.7L1322.7 723.8L1322.1 720.9L1317.3 719.8L1311.6 719.1L1297.3 719L1297.3 638.7L1331.6 638.5Z" fill="#33d1b3" fill-rule="evenodd"/>
<path d="M1332.5 634.2L1460.7 634.2L1460.7 638.5L1461.6 638.7L1495.9 638.8L1495.9 717.1L1480.2 717.3L1478.8 717.7L1476.8 719.5L1470.3 720.9L1468.8 725.7L1463 732.5L1460.7 736.8L1457.5 746.9L1457.5 757L1458.8 760L1465.9 764.6L1467.4 767.2L1467.8 770L1467.3 771.9L1465.9 774.2L1464.5 775.4L1458.1 778.7L1456.7 781.6L1450.5 842.3L1441.2 881.3L1438.7 903L1438 904.5L1435.9 905.7L1431.6 907.2L1423.8 908.8L1421.6 910.5L1420.2 913L1417.3 921.3L1414 936.2L1404.5 956.3L1401.6 959.9L1398.7 961.6L1397.3 961.7L1394.5 960.7L1390.2 957.1L1387.3 955.6L1385.9 955.7L1381.6 957.5L1378.7 957.4L1374.7 953.6L1372.3 952.1L1365.9 951.4L1361.6 950.1L1358.6 947.8L1356.7 944.9L1356 940.6L1356.5 937.7L1357.3 935.8L1360.2 932.6L1365.9 929L1366.6 927.6L1366.8 924.7L1365.9 918.4L1364.5 912.8L1363 909.9L1360.2 907.7L1355.9 905.5L1354.5 903.9L1353.4 897.2L1352 881.3L1342.7 842.3L1336.5 781.6L1335.9 779.7L1334.4 778.1L1330.2 776.2L1327.3 774.3L1325.9 772.3L1325.3 770L1325.6 767.2L1327.3 764.5L1333 761.2L1334.6 759.9L1335.4 758.5L1335.9 755.6L1335.9 749.8L1335.1 744L1331.2 733.9L1324.4 725.9L1323.4 723.8L1322.7 720.9L1316.3 719.5L1314.4 717.7L1313 717.3L1297.3 717.1L1297.3 638.8L1331.6 638.7L1332.5 638.5ZM1364.5 698.1L1363.3 699.2L1362.9 700.7L1363 702.4L1364.5 703.7L1365.9 703.2L1366.5 700.7L1365.9 698.6ZM1423.3 931.9L1427.3 931.3L1431.6 932.4L1434.5 934.7L1436.1 937.7L1436.6 942L1435.8 944.9L1434 947.8L1430.2 950.3L1427.3 950.8L1423 949.9L1420 947.8L1417.9 944.9L1417.3 943.5L1416.5 939.1L1417.4 936.2L1418.3 934.8L1420.2 933.4Z" fill="#33bb92" fill-rule="evenodd"/>
<path d="M1333.4 634.2L1459.8 634.2L1459.8 638.5L1461.6 638.8L1495.9 638.9L1495.9 715.2L1480.2 715.3L1477.3 716.6L1475.4 719.5L1469.7 720.9L1468.3 725.2L1461.3 732.5L1459.5 735.4L1456.8 741.1L1454.8 748.4L1454.7 755.6L1455.2 759.9L1455.9 761.5L1457.3 762.7L1461.6 763.6L1464.5 764.9L1466.3 767.2L1466.8 770L1465.9 772.5L1464.5 773.9L1461.6 775.2L1457.1 775.8L1455.2 777.3L1454.5 779L1447.6 843.8L1447.3 845.1L1446.3 846.6L1445.9 850.1L1444.5 850.8L1437.3 856.4L1429.3 861.1L1427.3 864.7L1425.1 874.1L1425.4 877L1425.9 877.6L1434.5 881.8L1438.1 885.7L1438.7 890L1438.1 897.2L1436.8 900.1L1434.5 902.2L1431.6 903.8L1427.3 904.7L1420.2 904.4L1418.1 905.9L1415.9 912.6L1411.8 933.4L1409.8 939.1L1406.4 947.8L1403.4 953.6L1401.6 955.9L1398.7 957.8L1397.3 957.9L1394.5 956.8L1388.7 951.5L1387.3 950.8L1385.9 950.8L1380.2 952.9L1378.7 952.7L1374.5 950.6L1364.5 950.2L1360.2 948.1L1357.8 944.9L1357.1 940.6L1358.7 936.2L1361.6 933.6L1368.3 930.5L1369.6 927.6L1368.7 916.5L1367.3 908.7L1366.5 907.3L1364.8 905.9L1358.7 902.8L1355.9 900.2L1354.5 895.8L1354.2 890L1354.6 885.7L1356.9 882.8L1362.2 878.4L1363.2 877L1363.5 872.7L1362.7 865.4L1361.6 861.3L1360.3 859.6L1347.3 850.3L1346.9 846.6L1345.9 845.2L1345.6 843.8L1338.7 778.7L1338.2 777.3L1336.8 775.8L1331.6 775L1328.7 773.9L1327.3 772.7L1326.2 770L1326.7 767.2L1328.7 764.9L1331.6 763.7L1335.9 763L1337.6 761.4L1338.5 755.6L1337.9 745.5L1336.4 741.1L1332.9 733.9L1330.6 731L1325.8 726.7L1324 723.8L1323.3 720.9L1317.7 719.5L1315.9 716.7L1313 715.4L1297.3 715.2L1297.3 638.9L1331.6 638.8L1333.4 638.5ZM1363 697.3L1361.6 700.7L1362 703.6L1363.8 705L1365.9 704.9L1367.3 703.6L1367.7 702.1L1367.3 698.5L1365.9 696.7L1364.5 696.4ZM1424.2 933.4L1427.3 932.9L1431.6 934.2L1433.8 936.2L1435.2 939.1L1435.5 942L1434.8 944.9L1432.6 947.8L1430.2 949.3L1427.3 950L1424.5 949.5L1421.4 947.8L1419.2 944.9L1418.3 940.6L1419.1 937.7L1421.4 934.8Z" fill="#33a571" fill-rule="evenodd"/>
<path d="M1334.3 634.2L1458.9 634.2L1458.9 638.5L1460.2 638.7L1495.9 639L1495.9 714L1480.2 714L1476.7 715.1L1474.4 719.5L1469.2 720.9L1468.4 723.8L1467.3 725.6L1459.6 732.5L1456.6 736.8L1453.7 742.6L1452.5 746.9L1452.3 749.8L1452.2 759.9L1453 765L1454.5 767.4L1460.2 765.3L1463 765.6L1464.9 767.2L1465.6 768.6L1465.7 770L1464.5 772.3L1461.6 773.5L1458.2 772.9L1454.5 770.9L1453 772.7L1451.6 778.7L1447.3 822.8L1445.9 823.7L1438.7 823.8L1434.5 824.5L1431 826.4L1430.3 827.9L1430.6 829.3L1435.9 834.9L1438.4 839.4L1439 842.3L1438.4 846.6L1435.9 851L1433 853.4L1430.2 854.8L1424.5 856.3L1422.2 858.2L1421.3 861.1L1419.6 874.1L1419.3 879.9L1420.2 881.8L1421.6 882.3L1427.3 882.2L1430.2 882.9L1433 884.3L1435.8 887.1L1437.3 890.9L1437.1 895.8L1435.6 898.7L1434.3 900.1L1430.2 902.6L1427.3 903L1424.5 902.9L1418.7 901.1L1417.3 901.1L1415.9 902.4L1414.5 906.9L1409.3 934.8L1406.1 943.5L1403.3 949.3L1401.6 951.8L1398.7 954L1397.3 954.2L1394.5 952.8L1390.2 948L1387.3 945.9L1385.9 945.9L1380.2 948.4L1374.5 948.4L1368.7 949.6L1365.9 949.7L1361.6 948.2L1358.7 944.9L1358.2 943.5L1358 940.6L1359 937.7L1360.1 936.2L1363 934.1L1370 931.9L1371.2 930.5L1371.7 927.6L1370.4 911.7L1369.5 907.3L1368.7 905.9L1367.3 904.8L1361.6 902.5L1358.7 900.6L1356.1 897.2L1355.4 894.3L1355.6 890L1356.8 887.1L1360.2 883.7L1365 881.3L1366.9 879.9L1368 877L1367.9 862.5L1367.1 858.2L1365.9 856.7L1360.2 853.8L1356.7 851L1354.8 848.1L1353.6 843.8L1353.8 840.9L1355.5 836.5L1358.7 832.7L1362.7 829.3L1363.2 827.9L1363 827L1361.6 825.1L1358.7 824.1L1347.3 823.7L1345.9 822.8L1341.6 778.4L1339.3 768.6L1340.9 761.4L1340.9 748.4L1339.5 742.6L1336.6 736.8L1333.7 732.5L1325.9 725.8L1324.6 723.8L1323.9 720.9L1318.7 719.5L1317.3 716.3L1315.9 714.8L1313 714L1297.3 714L1297.3 639L1333 638.7L1334.3 638.5ZM1363 695.9L1361.6 697.7L1361 699.2L1360.9 703.6L1361.7 705L1363 705.9L1365.9 705.9L1367.3 705.1L1368.3 703.6L1368.4 699.2L1367.3 696.6L1365.9 695.5L1364.5 695.3ZM1330.3 765.7L1333 765.6L1336.3 767.2L1337.3 768.6L1337.3 770L1336.3 771.5L1333 773.2L1330.2 773.1L1328.7 772.3L1327.4 770L1327.4 768.6L1328.7 766.6ZM1423.7 934.8L1425.9 934.1L1428.7 934.2L1431.6 935.5L1433.5 937.7L1434.5 940.6L1434.4 943.5L1432.9 946.4L1430.2 948.5L1427.3 949.2L1424.5 948.7L1421.6 946.8L1420.3 944.9L1419.4 942L1419.8 939.1L1421.6 936.3Z" fill="#3b9855" fill-rule="evenodd"/>
<path d="M1335.2 634.2L1458 634.2L1458 638.5L1460.2 638.9L1495.9 639.2L1495.9 712.7L1480.2 712.7L1477.3 713.3L1475.9 714.2L1474.5 716.3L1473.6 719.5L1468.6 720.9L1467.8 723.8L1466.8 725.2L1464.5 727.5L1457.5 732.5L1454.1 736.8L1451.7 741.1L1449.8 748.4L1449.6 768.6L1448.8 783.7L1445.9 810.5L1437.3 811L1434.5 811.6L1431.6 813L1427.3 817.5L1424.5 823L1423.3 827.9L1424 830.7L1431.6 834.1L1434.5 836.5L1436.8 840.9L1436.9 845.2L1434.8 849.5L1431.6 852.2L1428.7 853.3L1421.6 854.2L1420.1 855.3L1418.6 859.6L1416.8 875.5L1416.3 882.8L1417.3 886.3L1418.7 886.2L1423 884.4L1425.9 883.8L1430.2 884.5L1433 886.2L1435 888.6L1436 891.4L1436.1 894.3L1435 897.2L1434 898.7L1431.6 900.6L1428.7 901.7L1425.9 901.8L1423 901.1L1417.3 897.3L1415.9 896.9L1414.5 898.6L1413 903.5L1407.5 934.8L1403 945.5L1401.4 947.8L1398.7 950L1397.3 950.2L1394.5 948.6L1390.2 943.4L1387.3 941.1L1385.9 941L1384.5 941.5L1380.2 944L1368.7 948.8L1365.9 948.9L1363 948.2L1360.5 946.4L1359.5 944.9L1359 943.5L1358.9 940.6L1360.2 937.6L1361.6 936.1L1364.5 934.6L1371.7 933.4L1373.1 931.9L1373.7 929L1372.1 910.2L1371.1 905.9L1370.2 904.5L1368.7 903.6L1363 901.8L1360.1 900.1L1357.6 897.2L1356.4 892.9L1356.9 890L1358.7 887L1361.6 884.6L1368.7 881.6L1370.2 878.4L1370.3 861.1L1369.5 856.8L1368.5 855.3L1361.6 852.5L1358.7 850.5L1356.8 848.1L1355.6 843.8L1356.3 839.4L1358.1 836.5L1361.6 833.8L1367.3 831.3L1368.6 829.3L1368.7 826.3L1367.3 819.7L1365.9 816L1364.5 813.7L1361.6 811.5L1357.3 810.6L1347.3 810.5L1344.4 783.6L1343.7 768.6L1343.4 748.4L1342.1 742.6L1339.1 736.8L1334.2 731L1328.7 727.5L1326.2 725.2L1325.3 723.8L1324.4 720.9L1319.5 719.5L1318.1 715.1L1315.9 713.4L1313 712.8L1297.3 712.7L1297.3 639.2L1333 638.9L1335.2 638.5ZM1363 694.8L1361.5 696.3L1360.2 699.2L1359.9 703.6L1360.5 705L1362.1 706.5L1364.5 707.1L1365.9 706.9L1367.3 706.2L1368.7 704.5L1369.3 702.1L1369.2 699.2L1368.1 696.3L1366.7 694.9L1364.5 694.3ZM1329.5 768.6L1330.2 768L1331.6 767.8L1332.8 768.6L1332.9 770L1331.6 771L1330.2 770.9L1329.4 770ZM1459.6 768.6L1461.6 767.4L1463 767.8L1463.8 768.6L1463.9 770L1463 771.1L1461.4 771.5L1459.5 770ZM1423.2 936.2L1425.9 935.1L1428.7 935.2L1430.9 936.2L1432.4 937.7L1433.7 940.6L1433.6 943.5L1431.9 946.4L1430.2 947.7L1427.3 948.5L1424.5 947.9L1422.2 946.4L1421.1 944.9L1420.6 943.5L1420.4 940.6L1421.6 937.8Z" fill="#4c963e" fill-rule="evenodd"/>
<path d="M1336.2 634.2L1457 634.2L1457 638.5L1460.2 639L1495.9 639.3L1495.9 711.5L1480.2 711.5L1475.9 712.7L1473.8 715.1L1472.8 719.5L1468.1 720.9L1467.3 723.4L1465.9 725.4L1454.9 732.5L1451.6 736.2L1445.7 745.5L1444.9 748.4L1444.3 772.9L1443.6 784.5L1442.4 796.1L1441.6 797.5L1437.3 798.1L1433 799.8L1428.7 804.1L1425.9 809.2L1423 816.7L1421 823.5L1420.4 827.9L1420.4 830.7L1421.6 833.2L1428.7 834.4L1431.6 835.7L1434 838L1435.5 840.9L1435.6 845.2L1434.3 848.1L1431.6 850.7L1427.3 852.2L1420.2 852L1418.7 852.9L1417.6 855.3L1415.9 865.9L1413.5 892.9L1411.6 901.5L1406.2 933.4L1403 941.1L1400.3 944.9L1398.7 946L1397.3 946.2L1395.9 945.7L1393.6 943.5L1388.7 937.1L1387.3 936.2L1385.9 936L1380.2 938.9L1377.3 939.7L1373.7 944.9L1372.1 946.4L1369.1 947.8L1367.3 948.2L1364.5 948L1361.6 946.4L1360.2 944.5L1359.5 942L1359.6 940.6L1361.6 937.2L1363 936.1L1365.9 935.2L1374.5 935.6L1375.8 931.9L1373.8 910.2L1372.5 904.5L1371.4 903L1370.2 902.4L1363 900.7L1360.2 898.9L1358 895.8L1357.5 892.9L1358.1 890L1360.2 887.1L1363 885.2L1370.2 883.1L1371.6 881.3L1371.9 879.9L1372.1 861.1L1371.2 855.3L1370.1 853.9L1363 851.8L1360.2 850.2L1357.5 846.6L1356.8 843.8L1357.7 839.4L1360 836.5L1363 834.7L1368.7 833.3L1370.3 832.2L1370.9 830.7L1370.9 823.5L1368.7 810.3L1365.9 802.1L1363 798.9L1358.7 797.6L1351.6 797.4L1350.9 796.1L1349.6 784.5L1348.8 771.5L1348.4 748.4L1347 744L1341 735.4L1336.6 731L1327.3 725.5L1325.9 723.7L1325 720.9L1320.3 719.5L1319.3 715.1L1317.3 712.7L1315.9 712L1313 711.5L1297.3 711.5L1297.3 639.3L1333 639L1336.2 638.5ZM1364.5 693.4L1361.7 694.9L1360.6 696.3L1359.5 699.2L1359 702.1L1359.1 703.6L1360.2 706L1361.6 707.2L1364.5 708L1367.3 707.1L1368.7 705.9L1369.9 703.6L1370 702.1L1369.9 699.2L1368.7 696L1367.3 694.3L1365.9 693.5ZM1428.7 697.5L1427.5 699.2L1427.4 702.1L1428.7 704.2L1430.2 704.5L1431.7 703.6L1432 700.7L1431.6 699.2L1430.5 697.8ZM1468.8 645.5L1466.9 647.2L1468.7 648.7L1472.3 648.7L1474.2 647.2L1473 645.6ZM1320.2 645.6L1319 647.2L1320.9 648.7L1324.4 648.7L1326.3 647.2L1324.4 645.5ZM1423.5 885.7L1427.3 885L1430.2 885.7L1433 887.8L1434.4 890L1435.1 892.9L1434.5 895.8L1432.5 898.7L1430.2 900.2L1427.3 900.9L1423 899.9L1419.6 897.2L1418 894.3L1418 891.4L1419.4 888.6L1421.6 886.6ZM1425.1 936.2L1427.3 935.9L1430.2 936.8L1431.6 938L1432.9 940.6L1432.8 943.5L1432.2 944.9L1430.9 946.4L1428.7 947.5L1425.9 947.6L1424.5 947.1L1423 946.1L1421.4 943.5L1421.2 940.6L1421.8 939.1L1423 937.5Z" fill="#66a033" fill-rule="evenodd"/>
<path d="M1337.2 634.2L1391.1 634.2L1391.1 638.5L1395.9 638.6L1402.1 638.5L1402.1 634.2L1456 634.2L1456 638.5L1458.8 639L1470.2 639.5L1495.9 639.4L1495.9 710.2L1480.2 710.2L1475.9 711.2L1474.4 712.2L1473 714.3L1472.1 719.5L1467.5 720.9L1466.4 723.8L1464.5 725.8L1456 729.6L1451.6 732.4L1444.5 738.7L1440.9 744L1439.7 748.4L1439.4 754.2L1440.6 767.2L1440.5 771.5L1438 784.5L1437.3 785.5L1434.5 786.7L1431.6 789L1427.3 795.5L1424.5 802.7L1421.6 812.1L1418.9 823.5L1418.4 827.9L1418.6 833.6L1419.4 835.1L1421.6 835.6L1427.3 835.3L1431.6 837L1433 838.4L1434.4 840.9L1434.5 845.2L1433.1 848.1L1430.2 850.4L1425.9 851.2L1418.7 850L1417.3 851.2L1416.8 852.4L1415 859.6L1411.3 894.3L1405 930.5L1403 936.9L1400.6 940.6L1398.7 942L1397.3 942.2L1394.5 940.3L1390.6 934.8L1387.3 928L1385.9 927.5L1384.5 928.3L1381.6 931.4L1380.2 931.5L1378.7 928.8L1377.3 922.7L1375.2 907.3L1374 903L1373 901.8L1371.6 901.1L1365.9 900.6L1363 899.8L1359.8 897.2L1358.5 894.3L1358.4 892.9L1359.1 890L1361.6 887.1L1364.5 885.8L1371.6 884.5L1373 882.8L1373.4 881.3L1373.8 877L1373.6 859.6L1372.6 853.9L1371.6 852.6L1370.2 852L1364.5 851.2L1361.6 850L1358.7 846.9L1357.8 843.8L1358.2 840.9L1358.9 839.4L1361.6 836.6L1364.5 835.4L1370.2 834.7L1371.9 833.6L1372.9 830.7L1372.9 827.9L1371.6 812.3L1370.2 802.2L1367.3 791.2L1365.9 788.6L1364.5 787.1L1361.6 785.8L1355.9 784.6L1353.3 775.8L1352.4 768.6L1354.2 757L1354.4 752.7L1354.2 748.4L1353 744L1351.3 741.1L1348.8 738.3L1341.6 732.2L1337.6 729.6L1328.7 725.8L1326.6 723.8L1325.5 720.9L1320.9 719.5L1320.2 714.6L1318.7 712.3L1317.3 711.2L1313 710.2L1297.3 710.2L1297.3 639.4L1323 639.5L1334.4 639L1337.2 638.5ZM1363 693L1361.6 694L1359.8 696.3L1358.7 699.2L1358.2 703.6L1359.5 706.5L1361 707.9L1363 708.6L1365.9 708.6L1368.7 707L1370.1 705L1370.7 702.1L1370.5 699.2L1369.6 696.3L1367.5 693.5L1365.9 692.7ZM1428.7 695.8L1426.8 697.8L1426.3 702.1L1427.3 704.7L1428.7 705.7L1430.2 705.9L1431.6 705.5L1433 703.9L1433.2 700.7L1431.6 696.9L1430.2 695.9ZM1468.8 644L1465.2 645.8L1464.6 647.2L1465.6 648.7L1468.8 649.8L1471.6 650.1L1475.9 648.7L1477 647.2L1477 645.8L1475.7 644.3L1471.6 643.8ZM1323 643.9L1317.5 644.3L1316.2 645.8L1316.2 647.2L1317.2 648.7L1318.7 649.4L1321.6 650.1L1324.4 649.9L1327.7 648.7L1328.7 647.2L1328.1 645.8L1325.7 644.3ZM1423 887.1L1425.9 886.1L1428.7 886.2L1430.7 887.1L1432.4 888.6L1433.9 891.4L1434 894.3L1432.7 897.2L1431.2 898.7L1428.7 899.8L1425.9 899.9L1423 898.9L1421.1 897.2L1419.6 894.3L1419.6 891.4L1421.2 888.6ZM1363 937L1367.3 936L1370.2 936.7L1372 937.7L1373.1 939.1L1373.6 940.6L1373 943.5L1371.6 945.3L1368.7 947.1L1365.9 947.5L1363 946.7L1361.2 944.9L1360.5 943.5L1360.4 940.6L1361 939.1ZM1424.1 937.7L1425.9 936.8L1428.7 937L1430.2 937.7L1431.5 939.1L1432.1 940.6L1432 943.5L1430.2 946.1L1428.7 946.8L1425.9 946.9L1424.4 946.4L1422.9 944.9L1422.1 943.5L1422.1 940.6L1422.7 939.1Z" fill="#89b733" fill-rule="evenodd"/>
<path d="M1341.7 634.2L1389.2 634.2L1389.2 638.5L1395.9 638.7L1404 638.5L1404 634.2L1451.5 634.2L1451.5 638.5L1463 639.5L1495.9 639.5L1495.9 709L1478.8 709.1L1474.5 710.6L1473 712L1472.2 713.7L1471.5 719.5L1466.9 720.9L1465.7 723.8L1463 725.9L1451.6 729.3L1443.5 733.9L1440.2 737.2L1433 747L1432.4 749.8L1432.3 754.2L1433.4 757L1436.5 761.4L1437.7 764.3L1438.4 768.6L1438 772.9L1437.3 775.1L1435.9 777.2L1429.4 783.1L1427.3 785.8L1425.9 788.8L1423 797.7L1418.7 815.6L1417.2 823.5L1416.7 832.2L1417.3 836.4L1418.7 838.1L1425.9 836.2L1428.7 836.6L1431.3 838L1433.4 840.9L1433.8 842.3L1433.6 845.2L1431.9 848.1L1428.7 850L1424.5 850.1L1418.7 847.4L1417.3 847.7L1415.9 850.1L1413.7 859.6L1409.8 894.3L1405.1 921.8L1402.4 933.4L1400.8 936.2L1398.7 938L1397.3 938.2L1395.9 937.5L1393.5 934.8L1388.7 920.2L1387.3 917.6L1385.9 916.7L1381.6 919.1L1380.2 918.3L1378.7 914.8L1376.2 903L1374.5 900.1L1373 899.5L1367.3 899.9L1364.5 899.5L1360.9 897.2L1359.4 894.3L1359.5 891.4L1360.1 890L1363 887.2L1365.9 886.3L1371.6 886.4L1373.6 885.7L1374.5 884.2L1375.2 879.9L1374.9 858.2L1373.8 852.4L1373 851.3L1371.6 850.6L1365.9 850.6L1362.6 849.5L1359.6 846.6L1358.8 843.8L1359.2 840.9L1361.6 837.7L1365.9 836.1L1371.6 836.1L1373 835.4L1374 833.6L1374.4 827.9L1373.7 816.3L1372 799L1370.5 788.8L1369.7 785.9L1368.3 783.1L1366 781.6L1360.2 779.5L1357.3 777.3L1355.4 774.4L1354.5 770L1355.3 764.3L1357 761.4L1360.2 758.8L1367.3 755.8L1368.4 754.2L1369.1 748.4L1368.5 745.5L1367.3 743.4L1365.9 742.2L1361.6 740.5L1357.3 739.8L1355.9 739L1350.7 733.9L1347.3 731.9L1340.2 728.5L1331.6 726.4L1328.7 725L1327.3 723.7L1326.1 720.9L1321.5 719.5L1321.2 715.1L1320.2 712.2L1319 710.8L1317.3 709.8L1313 709L1297.3 709L1297.3 639.5L1330.2 639.5L1341.7 638.5ZM1364.5 691.7L1361.6 693L1359.9 694.9L1358.5 697.8L1357.5 702.1L1357.7 705L1358.7 707L1360.2 708.4L1363 709.5L1365.9 709.3L1368.7 708L1370.2 706.4L1371.2 703.6L1371.1 699.2L1369.6 694.9L1367.3 692.5ZM1428.7 694.6L1427.3 695.3L1425.8 697.8L1425.3 700.7L1425.6 703.6L1426.3 705L1428 706.5L1430.2 707.1L1431.6 706.8L1433.8 705L1434.4 703.6L1434.2 700.7L1432.4 696.3L1430.2 694.6ZM1471.6 642.8L1467.3 643.4L1464.8 644.3L1463 646.4L1462.9 647.2L1463.7 648.7L1466.2 650.1L1471.6 650.7L1476.3 650.1L1478.4 648.7L1479.2 647.2L1479.1 644.3L1475.9 643.2ZM1320.2 642.9L1317.3 643.2L1314.1 644.3L1314 647.2L1314.8 648.7L1316.9 650.1L1321.6 650.7L1325.9 650.4L1329.5 648.7L1330.4 647.2L1330 645.8L1327.3 643.8L1324.4 643.1ZM1425.4 887.1L1427.3 886.9L1430.2 887.8L1431.6 888.9L1433 891.4L1433.2 894.3L1432.6 895.8L1431.6 897.2L1428.7 899L1425.9 899.1L1424.4 898.7L1422.3 897.2L1420.7 894.3L1420.7 891.4L1421.4 890L1423 888.2ZM1363.5 937.7L1365.9 936.9L1367.3 936.9L1369.8 937.7L1371.4 939.1L1372.1 942L1370.7 944.9L1368.7 946.3L1365.9 946.9L1363.9 946.4L1362 944.9L1361.2 943.5L1361.2 940.6L1361.9 939.1ZM1425.8 937.7L1428.7 937.8L1430.2 938.8L1431.3 940.6L1431.3 943.5L1430.4 944.9L1428.7 946.1L1425.9 946.2L1423.8 944.9L1422.9 943.5L1422.7 942L1423 940.2L1424.5 938.4Z" fill="#adcd33" fill-rule="evenodd"/>
<path d="M1346.3 634.2L1387.8 634.2L1387.8 638.5L1395.9 638.8L1405.4 638.5L1405.4 634.2L1446.9 634.2L1446.9 638.5L1464.5 639.7L1495.9 639.6L1495.9 707.8L1478.8 707.9L1474.5 709L1472.3 710.8L1471.5 712.2L1470.9 719.5L1466.3 720.9L1464.9 723.8L1461.6 725.7L1458.8 726.3L1451.6 726.5L1447.3 727.8L1443.7 729.6L1433 738.4L1430.2 742.1L1428.7 745.5L1427.8 751.3L1428.1 755.6L1428.9 757L1433 761L1435.5 764.3L1436.6 767.2L1436.6 771.5L1435.4 774.4L1433.1 777.3L1426.4 781.6L1425.2 783.1L1423.4 787.4L1421.6 794.3L1415.6 825L1415.5 835.1L1417.1 842.3L1417 843.8L1415.9 845.7L1414.5 850L1412.5 859.6L1408.4 894.3L1404.5 916.8L1401.6 928.2L1400.2 931.8L1398.7 933.7L1397.3 933.9L1396.6 933.4L1394.5 929.6L1390.2 914.4L1387.3 907L1385.9 905.9L1381.6 907L1380.2 905.5L1377.9 900.1L1375.9 897.5L1374.5 897.2L1368.7 898.8L1365.9 899L1363 898L1361.9 897.2L1360.2 894.3L1360.3 891.4L1361.6 889.3L1363 888.1L1367.3 887.2L1374.5 888.4L1375.9 887L1376.8 882.8L1376.3 858.2L1375.2 851L1374.5 849.7L1373 848.9L1367.3 849.7L1363 848.9L1360.5 846.6L1359.6 843.8L1360.1 840.9L1361 839.4L1362.8 838L1365.9 837L1373 837.8L1374.5 836.9L1375.6 833.6L1375.6 825L1374.5 807.4L1373 791.4L1371.8 783.1L1371.4 781.6L1370.2 780.1L1363 778.6L1360.2 777.2L1357.5 774.4L1356.1 770L1356.8 765.7L1358.7 762.8L1360.2 761.5L1363 760.1L1370.2 758.6L1371.6 757.2L1372.3 754.2L1372.5 748.4L1372 744L1371.1 741.1L1369.5 738.3L1367.3 736.5L1357.3 733.7L1351.6 730L1347.3 727.8L1341.6 726.3L1334.4 726.1L1330.2 725.1L1328.3 723.8L1326.7 720.9L1322.1 719.5L1321.6 712.2L1320.8 710.8L1318.7 709.1L1314.4 707.9L1297.3 707.8L1297.3 639.6L1328.7 639.7L1346.3 638.5ZM1363 691.3L1360.2 693.5L1358.4 696.3L1357.3 699.2L1356.5 703.6L1357.3 706.5L1358.7 708.5L1361.6 710L1364.5 710.2L1368 709.3L1370.2 707.6L1371.6 705L1371.9 700.7L1370.9 696.3L1368.7 692.7L1365.9 691ZM1427.3 694.1L1425.9 695.7L1425 697.8L1424.5 700.7L1424.8 703.6L1425.9 705.9L1427.3 707.2L1428.7 707.9L1431.6 708L1433 707.4L1435.1 705L1435.5 703.6L1434.8 699.2L1433.5 696.3L1431.6 694.2L1430.2 693.5L1428.7 693.5ZM1465.9 642.8L1462.8 644.3L1461.6 645.8L1461.4 647.2L1462.2 648.7L1464.2 650.1L1467.3 651L1473 651.3L1478.8 650.1L1480.4 648.7L1481.7 645.8L1481.9 644.3L1477.3 642.4L1471.6 641.9ZM1314.4 642.8L1311.3 644.3L1311.5 645.8L1312.8 648.7L1314.4 650.1L1315.9 650.5L1321.6 651.3L1325.9 651L1329 650.1L1331 648.7L1331.8 647.2L1331.6 645.8L1330.4 644.3L1325.9 642.4L1320.2 641.9ZM1423 838L1427.3 837.2L1429.8 838L1431.6 839.4L1432.5 840.9L1433 843.8L1432 846.6L1430.2 848.5L1427.3 849.4L1424.5 849.1L1422.3 848.1L1419.3 845.2L1418.4 843.8L1418.3 842.3L1420.8 839.4ZM1424.1 888.6L1425.9 887.8L1428.7 888L1431.5 890L1432.2 891.4L1432.3 894.3L1431.7 895.8L1430.2 897.4L1428.7 898.1L1425.9 898.3L1423.6 897.2L1422.3 895.8L1421.6 894.3L1421.7 891.4L1422.5 890ZM1365.8 937.7L1367.3 937.8L1369.9 939.1L1370.8 940.6L1371 942L1370.6 943.5L1369.4 944.9L1367.3 946L1365.9 946.1L1363 944.9L1361.7 942L1362.8 939.1ZM1424.8 939.1L1427.3 938.3L1428.7 938.7L1430.2 940.1L1430.7 942L1430.4 943.5L1429.2 944.9L1427.3 945.6L1425.9 945.4L1424.5 944.4L1423.5 942L1423.7 940.6Z" fill="#d1e133" fill-rule="evenodd"/>
<path d="M1350.9 634.2L1386.4 634.2L1386.4 638.5L1395.9 638.8L1406.8 638.5L1406.8 634.2L1442.3 634.2L1442.3 638.5L1465.9 639.8L1495.9 639.8L1495.9 706.6L1478.8 706.7L1473.7 707.9L1471.6 709.3L1470.7 710.8L1470.2 713.7L1470.3 719.5L1465.7 720.9L1464.5 723.2L1461.6 724.9L1457.3 725.2L1451.6 724L1448.8 724L1444.5 725.4L1431.2 735.4L1428.7 738.3L1426.6 742.6L1425.1 749.8L1425 754.2L1425.7 757L1426.8 758.5L1431.6 761.8L1433.8 764.3L1435.1 767.2L1435.4 770L1434.6 772.9L1432.6 775.8L1430.2 777.6L1424.5 780.2L1423.1 781.6L1421.3 787.4L1414.4 823.5L1414.2 833.6L1414.9 843.8L1411.3 859.6L1407.1 894.3L1403 915.2L1400.2 924L1398.7 925.9L1397.3 926L1395.9 924.4L1394.5 920.9L1390.2 904.4L1387.3 896.5L1385.9 895.2L1381.6 895.8L1380.2 894.8L1379.3 892.9L1377.8 858.2L1377.2 852.4L1375.9 847.6L1374.5 846.2L1368.7 848.6L1364.5 848.6L1361.5 846.6L1360.4 843.8L1360.5 842.3L1361.6 840L1364.5 838.1L1368.7 838.1L1374.5 840.5L1375.9 838.9L1376.9 835.1L1377.1 829.3L1376.5 817.7L1374.5 789.1L1373.4 780.2L1372.6 778.7L1371.6 778L1365.9 777.8L1361.6 776.5L1358.7 773.7L1357.5 770L1358.3 765.7L1359.3 764.3L1361.6 762.3L1365.9 761L1371.6 761L1373.2 759.9L1374.4 755.6L1374.6 748.4L1374 742.6L1372.8 738.3L1371.2 735.4L1369.2 733.9L1361.6 732.2L1357.3 730.5L1351.6 726.1L1347.3 724.1L1341.6 723.6L1334.4 725.1L1330.2 724.3L1328.7 723.3L1327.4 720.9L1322.7 719.5L1322.9 713.7L1322.4 710.8L1321.5 709.3L1318.7 707.6L1314.4 706.7L1297.3 706.6L1297.3 639.8L1327.3 639.8L1350.9 638.5ZM1363 690.5L1360.2 692.6L1357.7 696.3L1356.2 700.7L1355.8 705L1356.9 707.9L1358.7 709.9L1361.2 710.8L1364.5 710.9L1368.7 709.8L1370.9 707.9L1372.3 705L1372.5 700.7L1371.6 696.3L1370.2 693.5L1368.7 691.8L1365.9 690.2ZM1427.3 693L1425.5 694.9L1424.2 697.8L1423.9 702.1L1424.4 705L1425.9 707.1L1427.3 708.2L1430.2 709.1L1433 708.7L1434.5 707.9L1436.3 705L1436.3 702.1L1435.2 697.8L1433.5 694.9L1431.6 693.1L1428.7 692.5ZM1471.6 640.7L1464.5 642.2L1461.6 643.8L1460.1 645.8L1460 647.2L1460.8 648.7L1462.6 650.1L1467.3 651.6L1474.5 651.7L1481 650.1L1485.6 644.3L1480.2 641.9L1475.9 640.8ZM1315.9 641L1311.6 642.4L1307.6 644.3L1312.2 650.1L1318.7 651.7L1325.9 651.6L1330.6 650.1L1332.4 648.7L1333.2 647.2L1333.1 645.8L1332.2 644.3L1328.7 642.2L1321.6 640.7ZM1422.6 839.4L1425.9 838L1428.7 838.4L1430.2 839.2L1431.6 840.9L1432.1 842.3L1431.9 845.2L1431.1 846.6L1429.2 848.1L1427.3 848.6L1424.5 848.2L1422.1 846.6L1421.1 845.2L1420.6 842.3ZM1364 888.6L1367.3 888L1370.2 888.8L1372.1 890L1373.3 891.4L1373.8 892.9L1373.5 894.3L1371.6 896.4L1368.7 897.9L1365.9 898.2L1363.1 897.2L1361.6 895.7L1360.8 892.9L1362 890ZM1427.2 888.6L1430.2 889.8L1431.3 891.4L1431.7 892.9L1430.8 895.8L1429 897.2L1427.3 897.6L1425.2 897.2L1423.3 895.8L1422.4 892.9L1423.6 890L1425.9 888.7ZM1364.1 939.1L1365.9 938.6L1367.3 938.7L1368.7 939.5L1369.6 940.6L1369.9 942L1368.7 944.3L1367.3 945.2L1365.9 945.4L1364.5 945L1363 943.7L1362.5 942L1362.8 940.6ZM1424.8 940.6L1425.9 939.6L1427.3 939.2L1428.7 939.9L1429.8 942L1429.4 943.5L1427.3 944.8L1425.9 944.4L1424.5 942.6Z" fill="#eaed33" fill-rule="evenodd"/>
<path d="M1354.7 634.2L1385 634.2L1385 638.5L1395.9 638.9L1408.2 638.5L1408.2 634.2L1438.5 634.2L1438.5 638.5L1467.3 640L1463 641.6L1460.2 643.4L1458.6 645.8L1458.6 647.2L1460.2 649.3L1463 651L1465.9 651.9L1470.2 652.4L1474.5 652.3L1479 651.5L1483.5 650.1L1487.3 647L1490.2 645.5L1495.9 644.4L1495.9 705.4L1478.8 705.4L1473 706.7L1470.2 708.7L1469.2 710.8L1469.8 719.5L1464.9 720.9L1464.3 722.4L1463 723.4L1460.2 724.3L1456.7 723.8L1450.2 720.9L1447.3 720.8L1444.5 721.7L1441.6 723.6L1435.9 729.5L1427.6 735.4L1425.9 738L1424.7 741.1L1423.1 748.4L1422.8 754.2L1423.2 757L1423.8 758.5L1425.4 759.9L1430.2 762.3L1432.4 764.3L1433.9 767.2L1434.2 770L1433.4 772.9L1431.6 775.2L1428.7 777L1423 778.7L1421.5 780.2L1420.5 783.1L1413.2 823.5L1413.6 843.8L1410.2 859.6L1405.9 893.3L1401.6 912.6L1400.2 916.1L1398.7 918L1397.3 917.9L1397 917.5L1395.9 916L1394.5 912.2L1387.3 882.8L1385.9 880.2L1383 877.8L1381.3 872.7L1379.1 853.9L1377.4 843.8L1378.5 833.6L1378.3 825L1375 778.7L1374.5 777L1373 775.7L1365.9 776.6L1362.7 775.8L1360.7 774.4L1359.5 772.9L1358.6 770L1359 767.2L1359.7 765.7L1360.9 764.3L1363 762.9L1367.3 762.3L1373 763.4L1374.5 762.8L1375.2 761.4L1376 757L1376.2 746.9L1375.6 741.1L1374 735.4L1373 733.7L1371.5 732.5L1363 730.9L1358.7 729.2L1355.9 727.1L1351.6 722.4L1348.7 720.7L1345.9 720.2L1343 720.4L1334.4 724L1331.6 723.9L1330.2 723.3L1328.9 722.4L1328.2 720.9L1323.2 719.5L1323.9 710.8L1323 708.8L1320.2 706.7L1314.4 705.4L1297.3 705.4L1297.3 644.4L1303 645.5L1305.9 647L1309.7 650.1L1314.2 651.5L1320.2 652.4L1325.9 652.1L1328.7 651.5L1332.1 650.1L1333.8 648.7L1334.6 647.2L1334.6 645.8L1333.9 644.3L1331.6 642.3L1325.9 640L1354.7 638.5ZM1361.6 690.4L1358.6 693.5L1356.3 697.8L1354.7 703.6L1355 706.5L1356.2 709.3L1358.7 711.3L1363 711.6L1368.4 710.8L1370.2 709.8L1371.6 708.2L1373 705L1373.1 700.7L1372.2 696.3L1370.2 692.5L1367.3 689.9L1364.5 689.3ZM1427.3 692L1424.6 694.9L1423.6 697.8L1423.2 702.1L1423.7 705L1425.6 707.9L1427.3 709.2L1431.6 710.1L1434.5 709.5L1436.2 707.9L1437.5 705L1437.6 703.6L1436 697.8L1434.5 694.9L1431.6 692.1L1428.7 691.5ZM1297.3 644.2L1297.3 639.9L1312 640L1305.9 642.3ZM1481.2 640L1495.9 639.9L1495.9 644.2L1487.3 642.3ZM1363.4 839.4L1365.9 838.7L1367.3 838.7L1370.2 839.9L1372.2 842.3L1372.4 843.8L1371.8 845.2L1370.2 846.8L1367.3 848L1364.5 847.8L1363 847L1361.6 845.3L1361.2 843.8L1361.9 840.9ZM1424.3 839.4L1427.3 838.8L1429.1 839.4L1430.7 840.9L1431.4 843.8L1430 846.6L1428.7 847.4L1425.9 847.8L1423 846.1L1421.8 843.8L1421.9 842.3L1422.6 840.9ZM1363.1 890L1365.9 888.8L1368.7 889.3L1371.3 891.4L1371.7 892.9L1371.5 894.3L1370.5 895.8L1368.7 896.9L1365.9 897.4L1364.5 897.1L1362.6 895.8L1361.8 894.3L1362 891.4ZM1425.1 890L1427.3 889.4L1428.7 889.8L1430.4 891.4L1430.6 894.3L1428.7 896.4L1425.9 896.6L1424.4 895.8L1423.5 894.3L1423.3 892.9L1423.7 891.4ZM1364 940.6L1365.9 939.6L1367.3 939.8L1368.3 940.6L1368.8 942L1368.1 943.5L1365.9 944.4L1364.5 943.9L1363.5 942ZM1426.9 940.6L1427.6 940.6L1428.7 942L1427.3 943.6L1425.9 942.8L1425.6 942Z" fill="#f8f033" fill-rule="evenodd"/>
<path d="M1358.6 634.2L1383.5 634.2L1383.5 638.5L1395.9 639L1409.7 638.5L1409.7 634.2L1434.6 634.2L1434.6 638.5L1462.5 640L1458.8 642.8L1457.6 644.3L1457.1 645.8L1457.2 647.2L1458.1 648.7L1461.6 651L1468.8 652.8L1474.5 652.9L1478.8 652.3L1487.1 650.1L1491.6 648.2L1495.9 647.5L1495.9 704L1477.3 704.2L1473 705.2L1470.2 706.4L1468.5 707.9L1467.7 710.8L1469 716.6L1469.2 719.5L1464.1 720.9L1463.1 722.4L1461.6 723.1L1460.2 723.3L1457.3 722.6L1451.6 718.1L1450.2 717.6L1447.3 717.4L1443 718.6L1441.6 719.5L1437.7 725.2L1435.1 728.1L1426.2 733.9L1423.6 738.3L1421.6 746.9L1421.1 754.2L1421.4 758.5L1423 760.7L1428.7 762.8L1430.9 764.3L1432.9 767.2L1433.2 770L1432.2 772.9L1430.2 775.1L1427.3 776.3L1421.6 777.3L1420.1 778.7L1419.1 781.6L1412.1 823.5L1412.6 843.8L1409.2 859.6L1404.2 894.3L1401.6 904.9L1400.2 908.4L1398.7 910.1L1397.3 909.8L1396.7 908.8L1394.5 903.2L1392.4 894.3L1388.7 873.5L1387.3 868L1382.1 856.8L1380.2 848L1379.5 842.3L1380.1 833.6L1379.8 823.5L1376.7 778.7L1375.9 774.1L1374.5 772.3L1368.7 775.2L1364.5 775.4L1361.6 773.9L1360.2 771.9L1359.6 770L1360 767.2L1360.9 765.7L1362.6 764.3L1364.5 763.5L1368.7 763.7L1374.5 767.1L1375.9 765.9L1377.3 759.9L1377.7 746.9L1376.9 739.7L1375.4 733.9L1373 731L1370.2 730.3L1364.5 730L1361.6 729.2L1358.7 727.6L1356.2 725.2L1352.9 719.5L1351.6 718L1350.2 717.3L1345.9 716.8L1341.6 717.5L1335.9 722.1L1333 723L1330.3 722.4L1329.2 720.9L1323.8 719.5L1324 716.6L1325.5 710.8L1325.4 709.3L1324.4 707.7L1321.6 705.7L1314.4 704.1L1297.3 704L1297.3 647.5L1301.6 648.2L1306.1 650.1L1315.9 652.5L1321.6 653L1327.3 652.4L1330.5 651.5L1333.5 650.1L1335.2 648.7L1336 647.2L1336.2 645.8L1335.7 644.3L1334.4 642.7L1330.7 640L1358.6 638.5ZM1363 688.9L1360.2 690.7L1357.9 693.5L1355.6 697.8L1353.5 703.6L1353.6 706.5L1354.5 709.8L1355.9 711.8L1357.3 712.4L1365.9 712L1370.2 710.8L1371.8 709.3L1373.7 705L1373.8 702.1L1373.2 697.8L1372.2 694.9L1370.6 692L1367.3 689.1L1365.9 688.6ZM1428.7 690.5L1425.9 692L1423.9 694.9L1422.6 699.2L1422.9 705L1424.5 707.9L1427.3 710L1431.6 711.1L1434.5 711L1435.9 710.5L1437.3 709.2L1438.5 706.5L1438.8 703.6L1436.9 697.8L1434.5 693.6L1431.6 691.1ZM1362.9 840.9L1365.9 839.5L1368.7 840.2L1370.6 842.3L1370.8 843.8L1370.2 845.2L1368.7 846.5L1367.3 847.1L1365.9 847.2L1363.9 846.6L1362.5 845.2L1362 843.8L1362.1 842.3ZM1424 840.9L1425.9 839.8L1428.7 840.2L1430.4 842.3L1430.1 845.2L1428.7 846.5L1427.3 847L1425.9 846.9L1424.5 846.2L1422.9 843.8L1423.1 842.3ZM1364.8 890L1367.3 889.8L1369.8 891.4L1370.3 892.9L1370.1 894.3L1368.8 895.8L1365.9 896.5L1364.5 896.1L1363 894.8L1362.5 892.9L1363 891.4ZM1424.9 891.4L1425.9 890.7L1427.3 890.4L1428.7 891L1429.8 892.9L1429.6 894.3L1427.7 895.8L1425.9 895.6L1424.5 894.2L1424.3 892.9ZM1365.1 942L1365.9 941.2L1367.1 942L1365.9 942.9Z" fill="#ffeb33" fill-rule="evenodd"/>
<path d="M1335 640L1361.6 638.7L1381.6 638.6L1395.9 639.1L1411.6 638.6L1431.6 638.7L1458.4 640L1455.5 644.3L1455.6 647.2L1458.4 650.1L1464.5 652.6L1468.8 653.3L1474.5 653.4L1488.8 650.8L1495.9 650.2L1495.9 702.2L1478.8 702.3L1474.5 703L1468.8 705.2L1467 706.5L1466 707.9L1465.7 709.3L1468.4 716.6L1468.7 719.5L1462.9 720.9L1461.6 721.9L1460.2 722.1L1455.9 720.2L1454.9 719.5L1453 715.2L1451.6 714.3L1448.8 713.9L1441.6 714.3L1440.2 715L1437.7 722.4L1434.8 726.7L1431.6 729.3L1424.5 733.3L1422.3 736.8L1420.1 746.9L1419.6 755.6L1419.9 759.9L1420.4 761.4L1421.6 762.4L1427.3 763.4L1430.2 764.9L1431.9 767.2L1432.3 770L1431.1 772.9L1429.4 774.4L1425.9 775.5L1420.2 775.6L1418.7 777.2L1418.2 778.7L1411 823.5L1411.7 843.8L1408.1 859.6L1405.9 876L1403 892L1400.2 900.6L1398.7 902.1L1397.3 901.6L1396.5 900.1L1394.5 894.1L1388.8 859.6L1383.9 851L1381.7 843.8L1382.2 833.6L1382.1 825L1380.2 809.1L1378.3 784.5L1377.8 770L1378.8 759.9L1379.1 746.9L1378.7 741.1L1377.6 735.4L1375.9 731.1L1374.4 729.6L1371.6 728.9L1364.5 729L1360.2 727.3L1356.7 723.8L1355.1 719.5L1355.1 716.6L1356 715.1L1357.3 714.3L1370.2 711.8L1371.8 710.8L1372.9 709.3L1374.1 706.5L1374.6 703.6L1373.8 697.8L1372.2 693.5L1370.2 690.4L1367.3 688.3L1364.5 687.8L1361 689.1L1358.7 691.2L1355.4 696.3L1352.2 703.6L1351.6 710L1350.2 712.2L1347.3 713.1L1341.6 713.8L1340.2 714.5L1338.7 716.9L1337.9 719.5L1333 721.5L1324.3 719.5L1324.7 716.6L1327.5 709.3L1327.2 707.9L1326.2 706.5L1324.2 705L1318.7 703L1314.4 702.2L1297.3 702.2L1297.3 650.2L1304.4 650.8L1318.7 653.4L1324.4 653.3L1328.7 652.6L1334.9 650.1L1337.6 647.2L1337.8 644.3ZM1427.3 690L1424.5 692.5L1422.6 696.3L1421.9 702.1L1422.2 705L1423 707.1L1424.8 709.3L1427.3 710.9L1434.5 712.5L1437.3 712.8L1438.7 712.5L1439.6 710.8L1440.4 705L1437.1 696.3L1435.3 693.5L1432.3 690.6L1430.2 689.7ZM1362.3 765.7L1364.5 764.5L1365.9 764.3L1367.3 764.5L1370 765.7L1372.1 768.6L1372.1 770L1371.6 771.5L1370.2 773.1L1367.3 774.5L1364.5 774.4L1363 773.8L1361.6 772.5L1360.6 770L1361.1 767.2ZM1364.4 840.9L1365.9 840.4L1367.3 840.6L1368.7 841.7L1369.4 843.8L1368.7 845.2L1367.3 846.1L1365.9 846.3L1363.6 845.2L1362.9 843.8L1363.1 842.3ZM1425.8 840.9L1427.7 840.9L1429.4 842.3L1429.5 843.8L1428.7 845.3L1427.3 845.9L1425.9 845.8L1424.5 844.5L1424.3 842.3ZM1364.3 891.4L1365.9 890.8L1368.1 891.4L1368.9 892.9L1368.6 894.3L1367.3 895.3L1365.9 895.5L1364.5 894.9L1363.6 892.9ZM1425.7 892.9L1427.3 891.8L1428.5 892.9L1427.3 894.6L1426.4 894.3Z" fill="#ffdd33" fill-rule="evenodd"/>
<path d="M1341.1 640L1375.9 638.9L1395.9 639.2L1411.6 638.7L1431.6 639L1452.6 640L1453.4 641.4L1453.4 645.8L1455 648.7L1459.5 651.5L1463.7 653L1468.8 653.9L1474.5 654L1488.8 651.7L1495.9 651.3L1495.9 700.2L1477.3 700.4L1471.6 701.9L1464.7 705L1462.7 707.9L1462.8 709.3L1467.3 715.7L1468.1 719.5L1464.5 720.4L1460.2 720.8L1457.3 720.2L1456.2 719.5L1455.3 712.2L1454.5 710.9L1453 710.3L1447.3 709.9L1444.5 709L1443 706.8L1442 703.6L1437.2 694.9L1434.5 691.3L1431.6 689.2L1428.7 688.7L1425.9 689.9L1424 692L1422.4 694.9L1421.6 697.8L1421.2 702.1L1421.5 705L1422.6 707.9L1425.4 710.8L1433.8 713.7L1435.9 715.1L1436.8 716.6L1437 719.5L1435.7 723.8L1433.4 726.7L1430.2 728.9L1424.5 731.5L1423 732.5L1421.6 734.4L1419.9 739.7L1418.7 746.9L1418.1 757L1418.4 761.4L1418.7 763.1L1420.2 764.8L1425.9 764.2L1428.7 765.1L1430.8 767.2L1431.4 770L1430.2 772.6L1428.7 773.7L1425.4 774.4L1420.2 773L1418.7 773.4L1417.3 776L1409.9 823.5L1410.8 843.8L1407 859.6L1403 883.8L1400.2 892.8L1398.7 894.2L1397.3 893.2L1395.9 889.7L1394.9 885.7L1391 859.6L1384.6 843.8L1384.9 839.4L1387.7 825L1387.3 822.9L1384.5 818.5L1383 813.9L1380.5 794.6L1379.7 784.5L1380.5 746.9L1379.9 739.7L1378.9 733.9L1377.3 730.2L1375.8 728.1L1373 727.4L1367.3 728.3L1363 727.8L1359.1 725.2L1357.9 723.8L1356.7 720.9L1356.7 718L1357.3 716.6L1358.7 715.1L1362.7 713.7L1370.2 712.7L1371.6 712.2L1373.2 710.8L1374.5 707.9L1375.3 703.6L1374.4 697.8L1372.9 693.5L1370.2 689.4L1367.3 687.5L1365.9 687.1L1363 687.3L1360.2 688.8L1356.3 693.5L1351.6 702L1349.4 705L1348.7 707L1347.3 708.4L1345.9 709L1340.2 709.9L1338.3 710.8L1337.3 712.8L1336.7 719.5L1333 720.7L1328.7 720.4L1324.9 719.5L1325.9 715.4L1330.5 709.3L1330.6 707.9L1328.5 705L1321.6 701.9L1315.9 700.4L1297.3 700.2L1297.3 651.3L1304.4 651.7L1318.7 654L1324.4 653.9L1329.5 653L1333.7 651.5L1338.2 648.7L1339.9 645.8L1340.1 641.4ZM1364.1 765.7L1367.3 765.5L1369.7 767.2L1370.4 768.6L1370.5 770L1369.9 771.5L1368.3 772.9L1365.9 773.6L1364.5 773.4L1362.1 771.5L1361.6 768.6L1362.3 767.2ZM1364.5 842.3L1365.9 841.7L1367.3 842.1L1367.8 843.8L1367.3 844.5L1365.9 845.1L1364.2 843.8ZM1426.5 842.3L1427.5 842.3L1428 843.8L1427.3 844.4L1425.7 843.8Z" fill="#ffcf33" fill-rule="evenodd"/>
<path d="M1353 640L1381.6 639L1411.6 638.9L1444.6 640L1448.8 641.6L1450.2 643.1L1452.2 647.2L1455.2 650.1L1463 653.4L1468.8 654.4L1474.5 654.6L1488.8 652.7L1495.9 652.3L1495.9 698.2L1477.3 698.4L1471.6 699.9L1458.8 704.6L1450.2 704.8L1447.3 704.4L1443 702.1L1435.9 691.8L1434.5 690.1L1431.6 688.2L1428.7 687.8L1425.9 688.8L1424.1 690.6L1422.3 693.5L1421.3 696.3L1420.6 700.7L1420.7 705L1421.7 707.9L1423 710L1424.5 711.2L1431.3 713.7L1433.9 715.1L1435.1 716.6L1435.7 718L1435.6 720.9L1434.6 723.8L1431.6 727L1428.7 728.6L1423 730.7L1421.6 731.9L1420.2 733.9L1418.9 738.3L1417.7 745.5L1417 754.2L1417.1 770L1415.8 775.8L1408.7 823.5L1410 843.8L1405.9 859.6L1403 875.7L1401.6 881L1400.2 884.4L1398.7 885.4L1397.3 884L1395.9 879.8L1392.7 859.6L1387.4 843.8L1387.6 840.9L1391.2 823.5L1388.7 814.3L1384.5 805L1383 798.9L1381.6 788.4L1382.1 746.9L1380.4 733.9L1378.2 728.1L1375.9 725.7L1374.5 725.5L1367.3 727.5L1364.5 727.4L1361.6 726.2L1360.2 725.2L1359 723.8L1357.8 720.9L1358 718L1358.8 716.6L1360.6 715.1L1364.5 714L1371.6 713.4L1373 712.8L1374.5 711.1L1375.5 707.9L1376.1 703.6L1375.1 697.8L1373 692.4L1370.2 688.5L1367.3 686.7L1364.5 686.3L1361.6 687L1357.4 690.6L1350.2 701.4L1348.7 702.6L1345.9 703.8L1341.6 704.6L1334.4 704.5L1320.2 699.4L1315.9 698.4L1297.3 698.2L1297.3 652.3L1304.4 652.7L1317.3 654.5L1323 654.5L1328.7 653.7L1333 652.5L1338.1 650.1L1341.2 647.2L1343 643.7L1344.4 642.1L1347.3 640.9ZM1458.8 712.7L1461.6 712L1464.5 713.4L1466.9 716.6L1467.5 719.5L1461.6 720.5L1458.8 720.2L1457.2 719.5L1457.4 715.1ZM1328.4 713.7L1331.6 712.3L1333 712.4L1334.4 713.3L1335.8 716.6L1335.7 719.5L1331.6 720.5L1325.5 719.5L1326.1 716.6ZM1424.2 765.7L1427.3 765.6L1429.6 767.2L1430.3 768.6L1430.3 770L1428.7 772.5L1425.9 773.3L1424.2 772.9L1422.1 771.5L1421.1 770L1421 768.6L1421.9 767.2ZM1363.9 767.2L1365.9 766.5L1367.9 767.2L1369 768.6L1369 770L1368.2 771.5L1365.9 772.5L1363.5 771.5L1362.7 770L1362.8 768.6Z" fill="#ffc233" fill-rule="evenodd"/>
<path d="M1365.1 640L1381.6 639.2L1411.6 639L1435.9 640L1445.9 643.1L1453.4 650.1L1457.3 652.1L1463 654L1468.8 654.9L1474.5 655.2L1488.8 653.6L1495.9 653.3L1495.9 696.3L1477.3 696.4L1473 697.4L1460.2 701.8L1450.2 702.3L1445.9 701.6L1443 699.9L1435.9 690.4L1434.5 689L1431.6 687.3L1428.7 686.9L1425.9 687.8L1423.1 690.6L1421.6 693.5L1420.3 697.8L1419.8 703.6L1421.4 709.3L1422.5 710.8L1424.5 712.2L1430.2 714L1433 715.8L1434.5 718L1434.7 720.9L1433.6 723.8L1430.7 726.7L1428.7 727.7L1422.2 729.6L1420.3 731L1418.6 733.9L1417.9 736.8L1416.3 746.9L1415.3 768.6L1413.6 784.5L1407.5 823.5L1409.2 843.8L1407.3 851.4L1404.6 859.6L1401.6 872.8L1400.2 875.9L1398.7 876.6L1397.3 874.6L1396.7 872.7L1394.2 859.6L1389.2 843.8L1393.2 823.5L1390.2 807.6L1385.4 794.6L1383.7 787.4L1383.9 746.9L1382.1 733.9L1379.4 726.7L1377.3 723.5L1375.9 722.9L1368.7 726.4L1364.5 726.6L1361.6 725.4L1360.2 724L1358.8 720.9L1359.1 718L1360 716.6L1361.6 715.5L1365.9 714.4L1373 714.7L1374.5 714.1L1375.6 712.2L1376.6 707.9L1376.9 703.6L1375.4 696.3L1373 691L1370.4 687.7L1367.3 685.9L1364.5 685.5L1361.6 686.2L1357.7 689.1L1350.2 699.3L1347.3 701.2L1343 702.1L1335.9 702.2L1333 701.8L1320.2 697.4L1315.9 696.4L1297.3 696.3L1297.3 653.3L1305.9 653.7L1317.3 655.1L1323 655.1L1328.7 654.3L1333.5 653L1338.7 650.8L1341.8 648.7L1345.9 644.6L1348.7 643.1ZM1328.4 715.1L1330.2 714.2L1331.6 714.1L1333 714.6L1334.4 716.6L1334.7 719.5L1331.6 720.2L1326.2 719.5L1327 716.6ZM1458.4 716.6L1460.2 714.3L1461.6 713.9L1464.5 714.8L1466.1 716.6L1466.8 719.5L1461.6 720.2L1458.2 719.5ZM1424.7 767.2L1427.3 766.9L1428.7 768.1L1429.1 770L1428 771.5L1425.9 772L1424.5 771.5L1423.4 770L1423.5 768.6ZM1364.5 768.6L1365.9 768.1L1366.9 768.6L1367.2 770L1365.9 770.8L1364.5 770.2Z" fill="#ffb133" fill-rule="evenodd"/>
<path d="M1370.7 640L1383 639.3L1410.2 639.1L1430.4 640L1434.5 641.8L1444.5 645.1L1454 651.5L1464.5 654.9L1470.2 655.6L1475.9 655.8L1495.9 654.2L1495.9 695L1475.9 695.3L1470.4 696.3L1463 699L1458.8 700.1L1448.8 700.1L1445.9 699.5L1443 697.7L1434.5 687.9L1431.6 686.3L1428.7 685.9L1425.9 686.8L1424.5 687.8L1422.2 690.6L1420.8 693.5L1419.5 697.8L1419 703.6L1420.3 709.3L1421.6 711.4L1423 712.5L1428.7 714.3L1431.6 715.7L1433.5 718L1433.8 720.9L1432.6 723.8L1430.2 726.1L1427.3 727.4L1422.3 728.1L1420.2 729L1418.5 731L1416.9 735.4L1415.2 746.9L1412.5 784.5L1406.2 823.5L1408.3 843.8L1405.9 852.8L1403 859.6L1401.6 864.7L1400.2 867.5L1398.7 867.7L1397.3 865L1396 859.6L1393.1 852.4L1390.7 843.8L1394.9 823.5L1391.6 802.6L1388.4 790.3L1387.4 784.5L1386 744L1383.9 733.9L1377 716.6L1377.9 703.6L1376.2 696.3L1373.6 690.6L1371.5 687.7L1368.7 685.6L1365.9 684.7L1363 684.9L1360.2 686L1358 687.7L1351.6 695.7L1348.7 698.4L1345.9 699.6L1341.6 700.1L1333 699.8L1322.8 696.3L1317.3 695.3L1297.3 695L1297.3 654.2L1317.3 655.8L1323 655.6L1328.7 654.9L1339.3 651.5L1347.3 646.3L1350.2 645L1364.5 642.4ZM1364.9 715.1L1370.2 715.5L1372.8 716.6L1374.2 718L1374 720.9L1373 722.4L1371.7 723.8L1368.7 725.6L1365.9 726.1L1363 725.4L1361 723.8L1360 722.4L1359.6 719.5L1360 718L1361.6 716.3ZM1328.2 716.6L1330.2 715.5L1331.6 715.6L1333 716.7L1333.6 719.5L1330.2 719.9L1327 719.5L1327.2 718ZM1459.9 716.6L1461.6 715.4L1463 715.4L1464.9 716.6L1465.9 718L1466.1 719.5L1461.6 720L1459.2 719.5Z" fill="#ff9e33" fill-rule="evenodd"/>
<path d="M1374.7 640L1383 639.5L1410.2 639.3L1426.5 640L1431.6 643.1L1443 646.8L1453 652.1L1463 655.2L1474.5 656.5L1495.9 655.2L1495.9 693.8L1475.9 694L1470.2 695L1458.8 698L1448.8 698.1L1445.9 697.4L1443 695.7L1437.2 689.1L1434.5 686.7L1431.6 685.3L1428.7 685L1425.9 685.7L1424.5 686.7L1422.2 689.1L1420.6 692L1419.1 696.3L1418.2 703.6L1418.8 707.9L1419.8 710.8L1421.6 713L1428.7 715L1431.5 716.6L1432.5 718L1433 720.9L1431.7 723.8L1428.7 726.1L1425.9 726.8L1420.2 727.1L1418.7 728L1417.3 730.1L1415.9 733.9L1414 746.9L1411.3 784.5L1407.3 809.7L1404.6 823.5L1406.3 832.2L1407.5 843.8L1404.5 853.4L1403 856.3L1400.2 859.3L1398.7 859.2L1395.9 855.6L1394 851L1391.9 843.8L1393.6 835.1L1396.8 823.5L1390.7 784.5L1388.7 744.5L1386.5 735.4L1379.8 716.6L1379.2 712.2L1379 703.6L1378 699.2L1376.6 694.9L1373.7 689.1L1371.6 686.7L1368.7 684.7L1365.9 683.8L1363 684L1360.2 685.1L1357.3 687.2L1351.6 694L1348.7 696.4L1345.9 697.6L1343 698L1334.4 698L1323 694.9L1317.3 694L1297.3 693.8L1297.3 655.2L1317.3 656.5L1328.7 655.5L1338.7 652.7L1351.6 646.8L1367.3 643.9L1371.6 642.1ZM1362.6 716.6L1365.9 715.7L1370.3 716.6L1371.9 718L1372.4 719.5L1371.6 722.4L1370.2 723.9L1367.3 725.2L1364.5 725.2L1363 724.6L1361.6 723.4L1360.4 720.9L1361 718ZM1328.4 718L1330.2 716.9L1331.6 717.4L1332.4 719.5L1328 719.5ZM1460.6 718L1461.6 716.9L1463 716.7L1464.5 717.6L1465.1 719.5L1460.4 719.5Z" fill="#ff8a33" fill-rule="evenodd"/>
<path d="M1378 640L1410.2 639.4L1423.2 640L1427.3 643.5L1431.6 645.5L1441.6 648.4L1452.6 653L1461.6 655.6L1467.3 656.7L1474.5 657.2L1495.9 656.3L1495.9 692.6L1475.9 692.8L1470.2 693.5L1458.8 696L1448.8 696L1445.9 695.4L1443 693.9L1437.2 687.7L1434.5 685.6L1431.6 684.3L1428.7 684L1424.5 685.5L1422.2 687.7L1420.4 690.6L1418.3 696.3L1417.3 703.6L1417.7 707.9L1418.7 711.8L1420 713.7L1421.6 714.5L1427.3 715.3L1430.2 716.5L1431.6 718L1432.2 720.9L1430.7 723.8L1428.7 725.3L1425.9 725.9L1420.2 725.3L1418.7 725.6L1416.5 728.1L1414.5 733.9L1412.9 746.9L1410 785.9L1405.9 809.4L1403 820.8L1401.7 823.5L1404.5 829.8L1405.9 836.7L1406.6 843.8L1403 853.3L1401.6 855.2L1400.2 856.1L1398.7 855.9L1396.9 853.9L1394.8 849.5L1393.1 843.8L1393.8 839.4L1395.9 831.6L1397.3 827.9L1399.9 823.5L1398.7 821.1L1397.3 815.1L1392.9 784.5L1391.1 744L1389 735.4L1384.5 724.4L1381.7 715.1L1380.3 703.6L1379.5 700.7L1377.5 694.9L1374.7 689.1L1372.4 686.2L1370.2 684.4L1367.3 683.2L1364.5 682.9L1361.6 683.5L1358.7 684.9L1355.4 687.7L1350.2 693.5L1347.3 695.2L1344.4 695.9L1334.4 696L1323 693.5L1317.3 692.8L1297.3 692.6L1297.3 656.3L1317.3 657.3L1328.7 656.2L1338.7 653.6L1351.6 648.9L1364.5 646.9L1368.7 645.8L1374.5 643ZM1364.3 716.6L1367.3 716.4L1370.4 718L1371.1 719.5L1371 720.9L1370.3 722.4L1368.8 723.8L1367.3 724.4L1364.5 724.4L1363 723.7L1361.8 722.4L1361.3 719.5L1362 718Z" fill="#ff7433" fill-rule="evenodd"/>
<path d="M1380.9 640L1410.2 639.5L1420.3 640L1424.5 644.4L1429.4 647.2L1461.6 656.3L1474.5 658.1L1495.9 657.4L1495.9 691.4L1475.9 691.5L1458.8 694.1L1448.8 694L1444.5 692.8L1435.9 685.2L1433 683.7L1430.2 682.9L1427.3 683.1L1424.5 684.2L1422.1 686.2L1420.2 688.9L1417.7 694.9L1416.3 702.1L1416.5 707.9L1417.6 713.7L1418.7 715.8L1420.2 716.4L1425.9 715.9L1428.8 716.6L1430.6 718L1431.3 720.9L1430.2 723.3L1427.3 724.9L1424.5 724.9L1418.7 722.6L1417.3 723.2L1415.9 725.4L1414.5 729.1L1413.2 733.9L1412.1 742.6L1408.7 785.6L1404.5 807.2L1403 811.7L1401.6 814L1400.2 813.6L1398.7 810.1L1395.5 791.7L1394.6 784.5L1393.3 746.9L1392.1 738.3L1390.9 733.9L1387 725.2L1384.5 717.3L1382.8 710.8L1381.9 703.6L1380.9 700.7L1376.6 690.6L1373.7 686.2L1371.6 684.3L1368.7 682.7L1365.9 682L1361.6 682.5L1357.2 684.8L1348.7 692.6L1345.9 693.6L1343 694.1L1334.4 694.1L1317.3 691.5L1297.3 691.4L1297.3 657.4L1317.3 658.1L1330.2 656.7L1351.6 650.8L1364.5 649.1L1370.2 647.8L1375.9 645L1378.7 642.6ZM1363.2 718L1365.9 717.1L1368.9 718L1369.8 719.5L1369.9 720.9L1369.1 722.4L1367.3 723.6L1365.9 723.8L1364.5 723.6L1363 722.6L1362.1 720.9L1362.2 719.5ZM1398.7 829.9L1400.2 828.8L1401.6 829.1L1403 831.2L1404.5 835.6L1405.7 842.3L1405.7 843.8L1403 850.2L1401.6 852.2L1400.2 853L1398.7 852.7L1397.3 851.3L1394.2 843.8L1394.5 841.5L1396.9 833.6Z" fill="#ff5e33" fill-rule="evenodd"/>
<path d="M1383.7 640L1407.3 639.6L1417.5 640L1420.2 643.9L1423 646.6L1427.3 649L1431.6 650.4L1468.8 658.4L1477.3 659.1L1495.9 658.6L1495.9 690L1477.3 690L1458.8 692.1L1448.8 691.9L1444.5 690.4L1434.5 683.1L1431.6 682L1428.7 681.7L1425.9 682.3L1423.8 683.3L1421.6 685.1L1419.6 687.7L1416.6 694.9L1414.9 703.6L1415.6 718L1411.5 736.8L1407.5 784.5L1404.5 798.5L1403 802.5L1401.6 804.2L1400.2 803.1L1398.7 799L1396.3 784.5L1395 746.9L1393.4 735.4L1387 718L1385.1 710.8L1383.9 703.6L1377.9 690.6L1374.5 685.5L1370.2 682.2L1367.3 681.1L1364.5 680.9L1361.6 681.4L1358.7 682.6L1348.7 690.1L1345.9 691.4L1343 692L1334.4 692L1315.9 690L1297.3 690L1297.3 658.6L1315.9 659.1L1323 658.6L1333 656.9L1350.2 652.9L1368.7 650.6L1373 649.3L1377.3 647.2L1380.6 644.3ZM1365.3 718L1367.3 718.2L1368.6 719.5L1368.7 720.9L1367.3 722.5L1365.9 722.9L1364.5 722.6L1363.1 720.9L1363.3 719.5ZM1422 718L1425.9 716.7L1428.7 717.5L1430.4 719.5L1430.4 720.9L1429.8 722.4L1427.3 724.1L1424.1 723.8L1422 722.4L1421.2 720.9L1421.1 719.5ZM1398.7 834.4L1400.2 833.3L1401.6 833.8L1402.3 835.1L1404.6 842.3L1404.6 843.8L1403 847.2L1401.6 849.1L1400.2 849.9L1398.7 849.6L1397.3 848L1395.4 843.8L1395.5 842.3L1397.3 836.9Z" fill="#ff4733" fill-rule="evenodd"/>
<path d="M1386.4 640L1414.7 640L1417 644.3L1420.2 648L1424.5 650.7L1428.7 652.2L1470.2 659.6L1477.3 660.1L1495.9 659.8L1495.9 687.6L1477.3 687.6L1458.8 689.1L1448.8 688.9L1444.5 687.7L1434.5 681.7L1431.6 680.8L1428.7 680.5L1425.9 680.9L1423 682.3L1419.1 686.2L1416.8 690.6L1415.3 694.9L1413.4 703.6L1413.1 718L1409.9 738.3L1405.9 783.8L1404.5 789.6L1403 793.1L1401.6 794.2L1400.2 792.5L1398.2 784.5L1396.6 746.9L1395 733.9L1388.7 715.5L1386.3 703.6L1383.7 697.8L1379.6 690.6L1375.6 684.8L1373 682.5L1370.2 680.9L1367.3 680L1364.5 679.8L1358.7 681.3L1348.7 687.5L1344.4 688.8L1335.9 689.1L1315.9 687.6L1297.3 687.6L1297.3 659.8L1314.4 660.1L1321.6 659.7L1350.2 654.8L1364.5 653.6L1371.6 652.4L1375.9 651.1L1380.2 648.7L1384.2 644.3ZM1424.9 718L1427.3 717.9L1428.7 718.8L1429.3 720.9L1428.5 722.4L1425.9 723.1L1424.1 722.4L1423.2 720.9L1423.3 719.5ZM1365.4 719.5L1366.4 719.5L1366.9 720.9L1365.9 721.4L1364.8 720.9ZM1399.9 838L1401.6 838.6L1403.2 842.3L1403 844.2L1401.6 846.1L1400.2 846.9L1398.7 846.4L1396.9 843.8L1397.3 841.4L1398.7 838.8Z" fill="#f83933" fill-rule="evenodd"/>
<path d="M1389.4 640L1411.8 640L1414.1 645.8L1417.5 650.1L1420.2 652.1L1423 653.4L1430.2 655.4L1473 660.9L1495.9 661L1495.9 685L1477.3 685L1457.3 686L1448.8 685.9L1443 684.4L1433 679.6L1428.7 679L1425.9 679.4L1423 680.5L1420.2 682.5L1418.1 684.8L1416.3 687.7L1413.9 693.5L1411.3 703.6L1410.2 723.8L1408.5 735.4L1405.9 762.9L1403 782.3L1401.6 783.6L1400.2 775.5L1398.2 744L1396.6 732.5L1391.4 715.1L1389.2 703.6L1388.1 700.7L1386 696.3L1381.2 689.1L1376.4 683.3L1373 680.8L1370.2 679.4L1367.3 678.4L1364.5 678.2L1358.7 679.8L1348.7 684.8L1344.4 685.8L1335.9 686L1315.9 685L1297.3 685L1297.3 661L1320.2 660.9L1345.9 657.4L1365.9 656L1373 654.9L1379.1 653L1383.7 650.1L1387 645.8ZM1425.8 719.5L1427.3 719.6L1427.6 720.9L1427.3 721.2L1425.9 721.3L1425.4 720.9Z" fill="#ea3533" fill-rule="evenodd"/>
<path d="M1392.9 640L1408.2 640L1410.3 647.2L1412.8 651.5L1417.3 655.3L1423 657.5L1431.6 658.7L1457.3 660.1L1475.9 662.7L1495.9 662.7L1495.9 682.3L1457.3 682.9L1447.3 682.7L1441.6 681.3L1436.2 679L1433 677L1428.7 676.1L1424.5 677L1417.5 681.9L1415 684.8L1412.6 689.1L1410 696.3L1408.5 702.1L1408.1 705L1407.5 725.2L1404.5 749.5L1403 754.1L1401.6 751.1L1399.4 733.9L1394.3 713.7L1392.7 703.6L1391.1 697.8L1389.8 694.9L1386 689.1L1383.4 686.2L1378.2 681.9L1370.2 676.5L1367.3 675.5L1364.5 675.3L1360.2 676.5L1356.6 679L1351.6 681.2L1345.9 682.6L1335.9 682.9L1297.3 682.3L1297.3 662.7L1317.3 662.7L1335.9 660.2L1368.7 658.7L1378.6 657.3L1384.5 654.9L1388.4 651.5L1390.8 647.2Z" fill="#da3333" fill-rule="evenodd"/>
<path d="M1332.3 663.1L1337.3 662.4L1353 661.8L1440.2 661.8L1457.3 662.5L1460.9 663.1L1465.9 665.7L1470.2 666.7L1477.3 667.2L1495.9 667.2L1495.9 679.6L1453 679.7L1444.5 679.2L1443.7 679L1439 673.2L1435.9 670.8L1431.6 668.9L1427.3 668.4L1423 669L1417.7 671.8L1414.4 674.7L1411.5 679L1410.2 679.7L1403 680.4L1387.3 680.1L1381.9 679L1380 676.1L1377.4 673.2L1373 670.1L1370.2 669L1365.9 668.3L1361.6 668.9L1357.3 670.8L1354.2 673.2L1349.5 679L1348.7 679.2L1340.2 679.7L1297.3 679.6L1297.3 667.2L1321.6 666.9L1327.3 665.7Z" fill="#c93333" fill-rule="evenodd"/>
<path d="M1297.3 640.2L1297.3 651.9L1297.3 666.5L1297.3 678.7L1297.3 693L1297.3 706.1L1297.3 716.3L1297.3 729L1297.3 746.4L1297.3 756.4L1297.3 769.4L1297.3 786.4L1297.3 796.7L1297.3 811.6L1297.3 822.8L1297.3 836.7L1297.3 847.2L1297.3 862.8L1297.3 877.1L1297.3 888.3L1297.3 902.5L1297.3 915.2L1297.3 925.1L1297.3 941.8L1297.3 954L1297.3 965.5L1297.3 979.6M1308.1 640.2L1312.4 653.1L1311.7 668.3L1311.7 681.6L1310 694L1310.3 707.7L1312.5 716.4L1308.6 730.1L1313 744.3L1311.2 756.6L1310.6 770.1L1309.8 784.2L1311 798.9L1311.5 812.1L1312.4 825.5L1311.4 834.3L1312.4 851.5L1312.6 862.5L1311.7 873.7L1312.3 888.6L1309.4 899L1312.4 916.9L1308.4 928.9L1310.1 938.6L1309.5 954.9L1312.5 964.2L1311.1 979.6M1321.4 640.2L1324.9 652.4L1321.1 665.1L1323.8 682L1322.8 690.2L1324.3 703L1319.5 717.1L1324.4 729.8L1321.4 746.5L1322.8 760.1L1319.1 771.4L1323.6 783.9L1324.5 797.3L1324.1 810.5L1326.1 823L1322.3 835.9L1320.8 849.2L1326.3 862.2L1324 872.6L1321.2 886.9L1321.3 901.9L1324.5 912L1324.4 927.2L1320.4 937L1324.9 954.7L1321.3 964.3L1324.7 979.6M1339.4 640.2L1335.7 653L1337.5 665.4L1336.3 678.4L1336.3 692.9L1336 704.8L1338.4 716.1L1337.4 732.8L1336 743.2L1338.6 756.3L1338.8 770.9L1338 781.7L1336.1 796L1338.8 809.6L1338.9 821.2L1336.3 836.7L1339 848.8L1335.6 860.1L1337.2 873.6L1338.6 890L1335.7 900.5L1338.6 915.1L1338.6 926.6L1337.9 938L1338.5 952.3L1336.2 966.1L1336.6 979.6M1349.8 640.2L1352.4 651.5L1347.7 668.6L1352.2 681.9L1349.9 694.8L1352.5 704L1351.5 720.3L1351.1 731.7L1349.2 743.8L1348.8 755.4L1350.7 769.6L1351.9 781.4L1352.4 797.9L1352.5 812L1352.3 823.4L1347.7 837.3L1348.6 848L1351.1 862.2L1349.8 877.5L1350.8 887.4L1349 903.2L1350.1 915.8L1349.5 925.8L1350.4 942.1L1348.6 955L1352.5 968.1L1351.9 979.6M1360.9 640.2L1364.2 655.1L1359.8 663.1L1361.9 680.6L1363.1 692.3L1364.9 702.9L1358 713.8L1361.5 729.5L1366 746.5L1361.3 757.7L1355.5 770.4L1362.7 784.6L1364 796.1L1361.9 809L1361.5 823.2L1364.4 833.5L1358.3 850.3L1362.8 862.7L1365 874.5L1364.5 883.2L1362.5 902.7L1363.5 915.4L1363.1 928.4L1359.8 934.1L1363.7 954.5L1361.3 966.2L1363.1 979.6M1378.7 640.2L1379 652.6L1378.8 667.8L1375.5 679.2L1374.8 694L1377.6 707.5L1378.3 719.4L1378 731.9L1374.7 745.1L1374.2 755.8L1378.2 768.4L1374.6 781.7L1378.7 795.2L1374.3 811.7L1374.8 824.7L1377.6 837.8L1379.1 849.5L1378.3 859.7L1378.1 875.2L1377.9 886.2L1378 903.5L1374.5 913.4L1377.1 929.1L1375.4 938.8L1375.4 954.1L1378.1 966L1376.1 979.6M1389.4 640.2L1389.2 652.8L1387.8 666.3L1392.4 678.9L1391.3 690.7L1391 706.8L1390.9 718.6L1389.9 732.3L1392 742.8L1387.9 759L1392.1 770.8L1389.7 784.9L1388.3 795.6L1388.4 810.3L1389 821.6L1391 838.4L1388.9 850.1L1389.5 864L1390.4 874L1388.5 885.7L1389.9 900.7L1388.3 913.6L1389.1 928.8L1388.1 943L1389.9 954L1389.8 968.3L1391.7 979.6M1403.5 640.2L1403.1 654.4L1405.1 665.8L1404.4 681.8L1403.1 691L1401.8 706.6L1404.1 720.9L1405.1 730.2L1401.6 743.4L1401.6 758.7L1405.1 772.8L1401.9 785.7L1402.2 796.4L1404.4 807.7L1401.1 824.7L1402.1 835.3L1403.6 850L1400.7 861.3L1402.9 875.1L1401.7 888.7L1405.6 900.7L1403.5 912.4L1402 928.2L1401.2 942.5L1405.3 951.4L1405.5 965.9L1404.6 979.6M1417.8 640.2L1415.4 654.2L1417.3 667.9L1415.2 680.7L1418.9 693.3L1416.6 703.5L1416.4 717.8L1417.6 732.5L1416.8 743L1417.2 758.4L1414.8 772.8L1417.3 781.8L1418.7 795L1415.6 811L1417 823.2L1417.2 835.8L1415.5 847.4L1414.2 863.2L1417.8 875.4L1417.7 887.5L1415.2 900.7L1418.4 911.9L1416.5 926.1L1417.5 939.6L1415.6 953L1416.7 968L1415.7 979.6M1431.5 640.2L1427.7 652.1L1427.8 661.3L1431.2 680.5L1428.1 690.8L1429.3 706.7L1437 719L1430.2 729.9L1429.2 743L1429.8 758L1437.1 768.9L1431.2 781.3L1431.3 798.9L1432 809.3L1430 823.4L1432.7 835.1L1433.2 851.3L1431.6 862L1430.2 876.3L1427.1 883.2L1431 902.4L1429.8 914.1L1428.1 927.5L1428.1 932.4L1430.5 953.2L1430 968.9L1431.7 979.6M1441 640.2L1444.5 653.9L1440.6 665.6L1441.6 677.2L1443.1 694.7L1442 707.4L1444 716.6L1444.8 732.1L1445.2 745.8L1444.2 756.9L1444.5 773L1444.8 783.5L1444.3 796.8L1440.9 807.5L1440.7 821.4L1441.2 836L1444 849.3L1442.5 862.9L1441.9 875L1444.3 887.7L1441.3 903.4L1444.1 913.6L1442.3 927.5L1443.4 939L1440.4 952L1444.4 964.7L1442.7 979.6M1454.6 640.2L1454.7 651.5L1455.7 664.6L1453.7 677.3L1454.5 692.4L1453.9 703L1454.4 717.6L1457.2 729.2L1455.7 744.1L1453.7 760.1L1454 768.6L1456 782L1456.8 796L1454.2 807.6L1457.4 821.8L1457.6 835.7L1456.3 849.8L1454.9 860.9L1457.8 875.8L1455.4 886.1L1457.1 903.7L1456.7 911.7L1453.7 925.3L1454.5 938L1453.9 954.3L1458.3 965L1458.6 979.6M1469.3 640.2L1471 655.4L1471.7 663.9L1468.6 680.2L1471.7 690.3L1468.3 707.3L1472.1 714.6L1468.6 732.5L1471.6 742.9L1470.7 758.9L1473.8 771.6L1471.6 783.1L1469 795.4L1470.9 809.8L1468.2 821.2L1470.9 836.2L1471.9 849.5L1469.4 860.3L1470.5 872.7L1472.2 887.5L1471.3 900.1L1468.1 916.1L1470.2 929.4L1473.6 939.5L1471.5 954.7L1468.6 965.9L1467.2 979.6M1482.1 640.2L1485 651.2L1483 664.3L1480.5 680.1L1481.3 690.1L1480.9 706.2L1483.1 716L1481.3 734L1481.2 745L1482.2 759.1L1483.2 772.2L1482.8 782.2L1481 794.7L1484.4 807.9L1480.2 825.4L1481.1 838.1L1480.5 848.9L1481.2 863.8L1483.3 875.9L1484 890.2L1481.9 901.8L1482.4 912.3L1484.4 927.9L1484.3 938.9L1482.9 953.3L1483.8 964.3L1481.9 979.6M1495.9 640.2L1495.9 653.2L1495.9 664.1L1495.9 679.6L1495.9 693.6L1495.9 705.1L1495.9 719.3L1495.9 732.1L1495.9 743.1L1495.9 756.9L1495.9 773.3L1495.9 782.9L1495.9 796.5L1495.9 807.7L1495.9 821.5L1495.9 834.3L1495.9 851.3L1495.9 863.3L1495.9 877.1L1495.9 890.8L1495.9 901.9L1495.9 916.6L1495.9 927.6L1495.9 940L1495.9 955.8L1495.9 968.6L1495.9 979.6M1297.3 640.2L1308.1 640.2L1321.4 640.2L1339.4 640.2L1349.8 640.2L1360.9 640.2L1378.7 640.2L1389.4 640.2L1403.5 640.2L1417.8 640.2L1431.5 640.2L1441 640.2L1454.6 640.2L1469.3 640.2L1482.1 640.2L1495.9 640.2M1297.3 651.9L1312.4 653.1L1324.9 652.4L1335.7 653L1352.4 651.5L1364.2 655.1L1379 652.6L1389.2 652.8L1403.1 654.4L1415.4 654.2L1427.7 652.1L1444.5 653.9L1454.7 651.5L1471 655.4L1485 651.2L1495.9 653.2M1297.3 666.5L1311.7 668.3L1321.1 665.1L1337.5 665.4L1347.7 668.6L1359.8 663.1L1378.8 667.8L1387.8 666.3L1405.1 665.8L1417.3 667.9L1427.8 661.3L1440.6 665.6L1455.7 664.6L1471.7 663.9L1483 664.3L1495.9 664.1M1297.3 678.7L1311.7 681.6L1323.8 682L1336.3 678.4L1352.2 681.9L1361.9 680.6L1375.5 679.2L1392.4 678.9L1404.4 681.8L1415.2 680.7L1431.2 680.5L1441.6 677.2L1453.7 677.3L1468.6 680.2L1480.5 680.1L1495.9 679.6M1297.3 693L1310 694L1322.8 690.2L1336.3 692.9L1349.9 694.8L1363.1 692.3L1374.8 694L1391.3 690.7L1403.1 691L1418.9 693.3L1428.1 690.8L1443.1 694.7L1454.5 692.4L1471.7 690.3L1481.3 690.1L1495.9 693.6M1297.3 706.1L1310.3 707.7L1324.3 703L1336 704.8L1352.5 704L1364.9 702.9L1377.6 707.5L1391 706.8L1401.8 706.6L1416.6 703.5L1429.3 706.7L1442 707.4L1453.9 703L1468.3 707.3L1480.9 706.2L1495.9 705.1M1297.3 716.3L1312.5 716.4L1319.5 717.1L1338.4 716.1L1351.5 720.3L1358 713.8L1378.3 719.4L1390.9 718.6L1404.1 720.9L1416.4 717.8L1437 719L1444 716.6L1454.4 717.6L1472.1 714.6L1483.1 716L1495.9 719.3M1297.3 729L1308.6 730.1L1324.4 729.8L1337.4 732.8L1351.1 731.7L1361.5 729.5L1378 731.9L1389.9 732.3L1405.1 730.2L1417.6 732.5L1430.2 729.9L1444.8 732.1L1457.2 729.2L1468.6 732.5L1481.3 734L1495.9 732.1M1297.3 746.4L1313 744.3L1321.4 746.5L1336 743.2L1349.2 743.8L1366 746.5L1374.7 745.1L1392 742.8L1401.6 743.4L1416.8 743L1429.2 743L1445.2 745.8L1455.7 744.1L1471.6 742.9L1481.2 745L1495.9 743.1M1297.3 756.4L1311.2 756.6L1322.8 760.1L1338.6 756.3L1348.8 755.4L1361.3 757.7L1374.2 755.8L1387.9 759L1401.6 758.7L1417.2 758.4L1429.8 758L1444.2 756.9L1453.7 760.1L1470.7 758.9L1482.2 759.1L1495.9 756.9M1297.3 769.4L1310.6 770.1L1319.1 771.4L1338.8 770.9L1350.7 769.6L1355.5 770.4L1378.2 768.4L1392.1 770.8L1405.1 772.8L1414.8 772.8L1437.1 768.9L1444.5 773L1454 768.6L1473.8 771.6L1483.2 772.2L1495.9 773.3M1297.3 786.4L1309.8 784.2L1323.6 783.9L1338 781.7L1351.9 781.4L1362.7 784.6L1374.6 781.7L1389.7 784.9L1401.9 785.7L1417.3 781.8L1431.2 781.3L1444.8 783.5L1456 782L1471.6 783.1L1482.8 782.2L1495.9 782.9M1297.3 796.7L1311 798.9L1324.5 797.3L1336.1 796L1352.4 797.9L1364 796.1L1378.7 795.2L1388.3 795.6L1402.2 796.4L1418.7 795L1431.3 798.9L1444.3 796.8L1456.8 796L1469 795.4L1481 794.7L1495.9 796.5M1297.3 811.6L1311.5 812.1L1324.1 810.5L1338.8 809.6L1352.5 812L1361.9 809L1374.3 811.7L1388.4 810.3L1404.4 807.7L1415.6 811L1432 809.3L1440.9 807.5L1454.2 807.6L1470.9 809.8L1484.4 807.9L1495.9 807.7M1297.3 822.8L1312.4 825.5L1326.1 823L1338.9 821.2L1352.3 823.4L1361.5 823.2L1374.8 824.7L1389 821.6L1401.1 824.7L1417 823.2L1430 823.4L1440.7 821.4L1457.4 821.8L1468.2 821.2L1480.2 825.4L1495.9 821.5M1297.3 836.7L1311.4 834.3L1322.3 835.9L1336.3 836.7L1347.7 837.3L1364.4 833.5L1377.6 837.8L1391 838.4L1402.1 835.3L1417.2 835.8L1432.7 835.1L1441.2 836L1457.6 835.7L1470.9 836.2L1481.1 838.1L1495.9 834.3M1297.3 847.2L1312.4 851.5L1320.8 849.2L1339 848.8L1348.6 848L1358.3 850.3L1379.1 849.5L1388.9 850.1L1403.6 850L1415.5 847.4L1433.2 851.3L1444 849.3L1456.3 849.8L1471.9 849.5L1480.5 848.9L1495.9 851.3M1297.3 862.8L1312.6 862.5L1326.3 862.2L1335.6 860.1L1351.1 862.2L1362.8 862.7L1378.3 859.7L1389.5 864L1400.7 861.3L1414.2 863.2L1431.6 862L1442.5 862.9L1454.9 860.9L1469.4 860.3L1481.2 863.8L1495.9 863.3M1297.3 877.1L1311.7 873.7L1324 872.6L1337.2 873.6L1349.8 877.5L1365 874.5L1378.1 875.2L1390.4 874L1402.9 875.1L1417.8 875.4L1430.2 876.3L1441.9 875L1457.8 875.8L1470.5 872.7L1483.3 875.9L1495.9 877.1M1297.3 888.3L1312.3 888.6L1321.2 886.9L1338.6 890L1350.8 887.4L1364.5 883.2L1377.9 886.2L1388.5 885.7L1401.7 888.7L1417.7 887.5L1427.1 883.2L1444.3 887.7L1455.4 886.1L1472.2 887.5L1484 890.2L1495.9 890.8M1297.3 902.5L1309.4 899L1321.3 901.9L1335.7 900.5L1349 903.2L1362.5 902.7L1378 903.5L1389.9 900.7L1405.6 900.7L1415.2 900.7L1431 902.4L1441.3 903.4L1457.1 903.7L1471.3 900.1L1481.9 901.8L1495.9 901.9M1297.3 915.2L1312.4 916.9L1324.5 912L1338.6 915.1L1350.1 915.8L1363.5 915.4L1374.5 913.4L1388.3 913.6L1403.5 912.4L1418.4 911.9L1429.8 914.1L1444.1 913.6L1456.7 911.7L1468.1 916.1L1482.4 912.3L1495.9 916.6M1297.3 925.1L1308.4 928.9L1324.4 927.2L1338.6 926.6L1349.5 925.8L1363.1 928.4L1377.1 929.1L1389.1 928.8L1402 928.2L1416.5 926.1L1428.1 927.5L1442.3 927.5L1453.7 925.3L1470.2 929.4L1484.4 927.9L1495.9 927.6M1297.3 941.8L1310.1 938.6L1320.4 937L1337.9 938L1350.4 942.1L1359.8 934.1L1375.4 938.8L1388.1 943L1401.2 942.5L1417.5 939.6L1428.1 932.4L1443.4 939L1454.5 938L1473.6 939.5L1484.3 938.9L1495.9 940M1297.3 954L1309.5 954.9L1324.9 954.7L1338.5 952.3L1348.6 955L1363.7 954.5L1375.4 954.1L1389.9 954L1405.3 951.4L1415.6 953L1430.5 953.2L1440.4 952L1453.9 954.3L1471.5 954.7L1482.9 953.3L1495.9 955.8M1297.3 965.5L1312.5 964.2L1321.3 964.3L1336.2 966.1L1352.5 968.1L1361.3 966.2L1378.1 966L1389.8 968.3L1405.5 965.9L1416.7 968L1430 968.9L1444.4 964.7L1458.3 965L1468.6 965.9L1483.8 964.3L1495.9 968.6M1297.3 979.6L1311.1 979.6L1324.7 979.6L1336.6 979.6L1351.9 979.6L1363.1 979.6L1376.1 979.6L1391.7 979.6L1404.6 979.6L1415.7 979.6L1431.7 979.6L1442.7 979.6L1458.6 979.6L1467.2 979.6L1481.9 979.6L1495.9 979.6M1297.3 634.2V640.2M1310.5 634.2V640.2M1323.8 634.2V640.2M1337 634.2V640.2M1350.3 634.2V640.2M1363.5 634.2V640.2M1376.7 634.2V640.2M1390 634.2V640.2M1403.2 634.2V640.2M1416.5 634.2V640.2M1429.7 634.2V640.2M1442.9 634.2V640.2M1456.2 634.2V640.2M1469.4 634.2V640.2M1482.7 634.2V640.2M1495.9 634.2V640.2M1337.7 674.9L1332.6 680.1L1325.3 680.1L1320.1 675L1320.1 667.7L1325.2 662.5L1332.5 662.5L1337.7 667.6ZM1333.5 673.2L1337.7 674.9M1330.8 675.9L1332.6 680.1M1327 675.9L1325.3 680.1M1324.3 673.2L1320.1 675M1324.3 669.4L1320.1 667.7M1327 666.7L1325.2 662.5M1330.8 666.7L1332.5 662.5M1333.5 669.4L1337.7 667.6M1337.7 724L1332.6 729.2L1325.3 729.2L1320.1 724.1L1320.1 716.8L1325.2 711.6L1332.5 711.6L1337.7 716.7ZM1333.5 722.3L1337.7 724M1330.8 725L1332.6 729.2M1327 725L1325.3 729.2M1324.3 722.3L1320.1 724.1M1324.3 718.5L1320.1 716.8M1327 715.8L1325.2 711.6M1330.8 715.8L1332.5 711.6M1333.5 718.5L1337.7 716.7M1337.7 773.1L1332.6 778.3L1325.3 778.3L1320.1 773.2L1320.1 765.9L1325.2 760.7L1332.5 760.7L1337.7 765.8ZM1333.5 771.4L1337.7 773.1M1330.8 774.1L1332.6 778.3M1327 774.1L1325.3 778.3M1324.3 771.4L1320.1 773.2M1324.3 767.6L1320.1 765.9M1327 764.9L1325.2 760.7M1330.8 764.9L1332.5 760.7M1333.5 767.6L1337.7 765.8M1337.7 847L1332.6 852.2L1325.3 852.2L1320.1 847.1L1320.1 839.8L1325.2 834.6L1332.5 834.6L1337.7 839.7ZM1333.5 845.3L1337.7 847M1330.8 848L1332.6 852.2M1327 848L1325.3 852.2M1324.3 845.3L1320.1 847.1M1324.3 841.5L1320.1 839.8M1327 838.8L1325.2 834.6M1330.8 838.8L1332.5 834.6M1333.5 841.5L1337.7 839.7M1337.7 896.8L1332.6 902L1325.3 902L1320.1 896.9L1320.1 889.6L1325.2 884.4L1332.5 884.4L1337.7 889.5ZM1333.5 895.1L1337.7 896.8M1330.8 897.8L1332.6 902M1327 897.8L1325.3 902M1324.3 895.1L1320.1 896.9M1324.3 891.3L1320.1 889.6M1327 888.6L1325.2 884.4M1330.8 888.6L1332.5 884.4M1333.5 891.3L1337.7 889.5M1337.7 945.9L1332.6 951.1L1325.3 951.1L1320.1 946L1320.1 938.7L1325.2 933.5L1332.5 933.5L1337.7 938.6ZM1333.5 944.2L1337.7 945.9M1330.8 946.9L1332.6 951.1M1327 946.9L1325.3 951.1M1324.3 944.2L1320.1 946M1324.3 940.4L1320.1 938.7M1327 937.7L1325.2 933.5M1330.8 937.7L1332.5 933.5M1333.5 940.4L1337.7 938.6M1374.3 674.9L1369.2 680.1L1361.9 680.1L1356.7 675L1356.7 667.7L1361.8 662.5L1369.1 662.5L1374.3 667.6ZM1370.1 673.2L1374.3 674.9M1367.4 675.9L1369.2 680.1M1363.6 675.9L1361.9 680.1M1360.9 673.2L1356.7 675M1360.9 669.4L1356.7 667.7M1363.6 666.7L1361.8 662.5M1367.4 666.7L1369.1 662.5M1370.1 669.4L1374.3 667.6M1374.3 724L1369.2 729.2L1361.9 729.2L1356.7 724.1L1356.7 716.8L1361.8 711.6L1369.1 711.6L1374.3 716.7ZM1370.1 722.3L1374.3 724M1367.4 725L1369.2 729.2M1363.6 725L1361.9 729.2M1360.9 722.3L1356.7 724.1M1360.9 718.5L1356.7 716.8M1363.6 715.8L1361.8 711.6M1367.4 715.8L1369.1 711.6M1370.1 718.5L1374.3 716.7M1374.3 773.1L1369.2 778.3L1361.9 778.3L1356.7 773.2L1356.7 765.9L1361.8 760.7L1369.1 760.7L1374.3 765.8ZM1370.1 771.4L1374.3 773.1M1367.4 774.1L1369.2 778.3M1363.6 774.1L1361.9 778.3M1360.9 771.4L1356.7 773.2M1360.9 767.6L1356.7 765.9M1363.6 764.9L1361.8 760.7M1367.4 764.9L1369.1 760.7M1370.1 767.6L1374.3 765.8M1374.3 847L1369.2 852.2L1361.9 852.2L1356.7 847.1L1356.7 839.8L1361.8 834.6L1369.1 834.6L1374.3 839.7ZM1370.1 845.3L1374.3 847M1367.4 848L1369.2 852.2M1363.6 848L1361.9 852.2M1360.9 845.3L1356.7 847.1M1360.9 841.5L1356.7 839.8M1363.6 838.8L1361.8 834.6M1367.4 838.8L1369.1 834.6M1370.1 841.5L1374.3 839.7M1374.3 896.8L1369.2 902L1361.9 902L1356.7 896.9L1356.7 889.6L1361.8 884.4L1369.1 884.4L1374.3 889.5ZM1370.1 895.1L1374.3 896.8M1367.4 897.8L1369.2 902M1363.6 897.8L1361.9 902M1360.9 895.1L1356.7 896.9M1360.9 891.3L1356.7 889.6M1363.6 888.6L1361.8 884.4M1367.4 888.6L1369.1 884.4M1370.1 891.3L1374.3 889.5M1374.3 945.9L1369.2 951.1L1361.9 951.1L1356.7 946L1356.7 938.7L1361.8 933.5L1369.1 933.5L1374.3 938.6ZM1370.1 944.2L1374.3 945.9M1367.4 946.9L1369.2 951.1M1363.6 946.9L1361.9 951.1M1360.9 944.2L1356.7 946M1360.9 940.4L1356.7 938.7M1363.6 937.7L1361.8 933.5M1367.4 937.7L1369.1 933.5M1370.1 940.4L1374.3 938.6M1435.9 674.9L1430.8 680.1L1423.5 680.1L1418.3 675L1418.3 667.7L1423.4 662.5L1430.7 662.5L1435.9 667.6ZM1431.7 673.2L1435.9 674.9M1429 675.9L1430.8 680.1M1425.2 675.9L1423.5 680.1M1422.5 673.2L1418.3 675M1422.5 669.4L1418.3 667.7M1425.2 666.7L1423.4 662.5M1429 666.7L1430.7 662.5M1431.7 669.4L1435.9 667.6M1435.9 724L1430.8 729.2L1423.5 729.2L1418.3 724.1L1418.3 716.8L1423.4 711.6L1430.7 711.6L1435.9 716.7ZM1431.7 722.3L1435.9 724M1429 725L1430.8 729.2M1425.2 725L1423.5 729.2M1422.5 722.3L1418.3 724.1M1422.5 718.5L1418.3 716.8M1425.2 715.8L1423.4 711.6M1429 715.8L1430.7 711.6M1431.7 718.5L1435.9 716.7M1435.9 773.1L1430.8 778.3L1423.5 778.3L1418.3 773.2L1418.3 765.9L1423.4 760.7L1430.7 760.7L1435.9 765.8ZM1431.7 771.4L1435.9 773.1M1429 774.1L1430.8 778.3M1425.2 774.1L1423.5 778.3M1422.5 771.4L1418.3 773.2M1422.5 767.6L1418.3 765.9M1425.2 764.9L1423.4 760.7M1429 764.9L1430.7 760.7M1431.7 767.6L1435.9 765.8M1435.9 847L1430.8 852.2L1423.5 852.2L1418.3 847.1L1418.3 839.8L1423.4 834.6L1430.7 834.6L1435.9 839.7ZM1431.7 845.3L1435.9 847M1429 848L1430.8 852.2M1425.2 848L1423.5 852.2M1422.5 845.3L1418.3 847.1M1422.5 841.5L1418.3 839.8M1425.2 838.8L1423.4 834.6M1429 838.8L1430.7 834.6M1431.7 841.5L1435.9 839.7M1435.9 896.8L1430.8 902L1423.5 902L1418.3 896.9L1418.3 889.6L1423.4 884.4L1430.7 884.4L1435.9 889.5ZM1431.7 895.1L1435.9 896.8M1429 897.8L1430.8 902M1425.2 897.8L1423.5 902M1422.5 895.1L1418.3 896.9M1422.5 891.3L1418.3 889.6M1425.2 888.6L1423.4 884.4M1429 888.6L1430.7 884.4M1431.7 891.3L1435.9 889.5M1435.9 945.9L1430.8 951.1L1423.5 951.1L1418.3 946L1418.3 938.7L1423.4 933.5L1430.7 933.5L1435.9 938.6ZM1431.7 944.2L1435.9 945.9M1429 946.9L1430.8 951.1M1425.2 946.9L1423.5 951.1M1422.5 944.2L1418.3 946M1422.5 940.4L1418.3 938.7M1425.2 937.7L1423.4 933.5M1429 937.7L1430.7 933.5M1431.7 940.4L1435.9 938.6M1472.8 674.9L1467.7 680.1L1460.4 680.1L1455.2 675L1455.2 667.7L1460.3 662.5L1467.6 662.5L1472.8 667.6ZM1468.6 673.2L1472.8 674.9M1465.9 675.9L1467.7 680.1M1462.1 675.9L1460.4 680.1M1459.4 673.2L1455.2 675M1459.4 669.4L1455.2 667.7M1462.1 666.7L1460.3 662.5M1465.9 666.7L1467.6 662.5M1468.6 669.4L1472.8 667.6M1472.8 724L1467.7 729.2L1460.4 729.2L1455.2 724.1L1455.2 716.8L1460.3 711.6L1467.6 711.6L1472.8 716.7ZM1468.6 722.3L1472.8 724M1465.9 725L1467.7 729.2M1462.1 725L1460.4 729.2M1459.4 722.3L1455.2 724.1M1459.4 718.5L1455.2 716.8M1462.1 715.8L1460.3 711.6M1465.9 715.8L1467.6 711.6M1468.6 718.5L1472.8 716.7M1472.8 773.1L1467.7 778.3L1460.4 778.3L1455.2 773.2L1455.2 765.9L1460.3 760.7L1467.6 760.7L1472.8 765.8ZM1468.6 771.4L1472.8 773.1M1465.9 774.1L1467.7 778.3M1462.1 774.1L1460.4 778.3M1459.4 771.4L1455.2 773.2M1459.4 767.6L1455.2 765.9M1462.1 764.9L1460.3 760.7M1465.9 764.9L1467.6 760.7M1468.6 767.6L1472.8 765.8M1472.8 847L1467.7 852.2L1460.4 852.2L1455.2 847.1L1455.2 839.8L1460.3 834.6L1467.6 834.6L1472.8 839.7ZM1468.6 845.3L1472.8 847M1465.9 848L1467.7 852.2M1462.1 848L1460.4 852.2M1459.4 845.3L1455.2 847.1M1459.4 841.5L1455.2 839.8M1462.1 838.8L1460.3 834.6M1465.9 838.8L1467.6 834.6M1468.6 841.5L1472.8 839.7M1472.8 896.8L1467.7 902L1460.4 902L1455.2 896.9L1455.2 889.6L1460.3 884.4L1467.6 884.4L1472.8 889.5ZM1468.6 895.1L1472.8 896.8M1465.9 897.8L1467.7 902M1462.1 897.8L1460.4 902M1459.4 895.1L1455.2 896.9M1459.4 891.3L1455.2 889.6M1462.1 888.6L1460.3 884.4M1465.9 888.6L1467.6 884.4M1468.6 891.3L1472.8 889.5M1472.8 945.9L1467.7 951.1L1460.4 951.1L1455.2 946L1455.2 938.7L1460.3 933.5L1467.6 933.5L1472.8 938.6ZM1468.6 944.2L1472.8 945.9M1465.9 946.9L1467.7 951.1M1462.1 946.9L1460.4 951.1M1459.4 944.2L1455.2 946M1459.4 940.4L1455.2 938.7M1462.1 937.7L1460.3 933.5M1465.9 937.7L1467.6 933.5M1468.6 940.4L1472.8 938.6" fill="none" stroke="#111" stroke-width=".6" stroke-opacity=".85"/>
<rect x="1297.3" y="634.2" width="198.6" height="345.4" fill="none" stroke="#555" stroke-width=".8"/>
<path d="M1296.8 640H1496.3999999999999" stroke="#f47a20" stroke-width="2.4"/>
<path d="M1396.8 644.5V968.5" stroke="#111" stroke-width="1.7"/>
<path d="M1297.3 974H1495.8999999999999" stroke="#111" stroke-width="1.4"/>
<circle cx="1328.9" cy="671.3" r="5.3" fill="#b4b4b4" stroke="#808080" stroke-width=".5"/>
<text x="1328.9" y="673.5" font-family="Liberation Sans" font-size="6.6" text-anchor="middle" fill="#222">3</text>
<circle cx="1365.5" cy="671.3" r="5.3" fill="#b4b4b4" stroke="#808080" stroke-width=".5"/>
<text x="1365.5" y="673.5" font-family="Liberation Sans" font-size="6.6" text-anchor="middle" fill="#222">4</text>
<circle cx="1427.1" cy="671.3" r="5.3" fill="#b4b4b4" stroke="#808080" stroke-width=".5"/>
<text x="1427.1" y="673.5" font-family="Liberation Sans" font-size="6.6" text-anchor="middle" fill="#222">2</text>
<circle cx="1464.0" cy="671.3" r="5.3" fill="#b4b4b4" stroke="#808080" stroke-width=".5"/>
<text x="1464.0" y="673.5" font-family="Liberation Sans" font-size="6.6" text-anchor="middle" fill="#222">1</text>
<circle cx="1328.9" cy="720.4" r="5.3" fill="#b4b4b4" stroke="#808080" stroke-width=".5"/>
<text x="1328.9" y="722.6" font-family="Liberation Sans" font-size="6.6" text-anchor="middle" fill="#222">7</text>
<circle cx="1365.5" cy="720.4" r="5.3" fill="#b4b4b4" stroke="#808080" stroke-width=".5"/>
<text x="1365.5" y="722.6" font-family="Liberation Sans" font-size="6.6" text-anchor="middle" fill="#222">8</text>
<circle cx="1427.1" cy="720.4" r="5.3" fill="#b4b4b4" stroke="#808080" stroke-width=".5"/>
<text x="1427.1" y="722.6" font-family="Liberation Sans" font-size="6.6" text-anchor="middle" fill="#222">6</text>
<circle cx="1464.0" cy="720.4" r="5.3" fill="#b4b4b4" stroke="#808080" stroke-width=".5"/>
<text x="1464.0" y="722.6" font-family="Liberation Sans" font-size="6.6" text-anchor="middle" fill="#222">5</text>
<circle cx="1328.9" cy="769.5" r="5.3" fill="#b4b4b4" stroke="#808080" stroke-width=".5"/>
<text x="1328.9" y="771.7" font-family="Liberation Sans" font-size="6.6" text-anchor="middle" fill="#222">11</text>
<circle cx="1365.5" cy="769.5" r="5.3" fill="#b4b4b4" stroke="#808080" stroke-width=".5"/>
<text x="1365.5" y="771.7" font-family="Liberation Sans" font-size="6.6" text-anchor="middle" fill="#222">12</text>
<circle cx="1427.1" cy="769.5" r="5.3" fill="#b4b4b4" stroke="#808080" stroke-width=".5"/>
<text x="1427.1" y="771.7" font-family="Liberation Sans" font-size="6.6" text-anchor="middle" fill="#222">10</text>
<circle cx="1464.0" cy="769.5" r="5.3" fill="#b4b4b4" stroke="#808080" stroke-width=".5"/>
<text x="1464.0" y="771.7" font-family="Liberation Sans" font-size="6.6" text-anchor="middle" fill="#222">9</text>
<circle cx="1328.9" cy="843.4" r="5.3" fill="#b4b4b4" stroke="#808080" stroke-width=".5"/>
<text x="1328.9" y="845.6" font-family="Liberation Sans" font-size="6.6" text-anchor="middle" fill="#222">23</text>
<circle cx="1365.5" cy="843.4" r="5.3" fill="#b4b4b4" stroke="#808080" stroke-width=".5"/>
<text x="1365.5" y="845.6" font-family="Liberation Sans" font-size="6.6" text-anchor="middle" fill="#222">24</text>
<circle cx="1427.1" cy="843.4" r="5.3" fill="#b4b4b4" stroke="#808080" stroke-width=".5"/>
<text x="1427.1" y="845.6" font-family="Liberation Sans" font-size="6.6" text-anchor="middle" fill="#222">22</text>
<circle cx="1464.0" cy="843.4" r="5.3" fill="#b4b4b4" stroke="#808080" stroke-width=".5"/>
<text x="1464.0" y="845.6" font-family="Liberation Sans" font-size="6.6" text-anchor="middle" fill="#222">21</text>
<circle cx="1328.9" cy="893.2" r="5.3" fill="#b4b4b4" stroke="#808080" stroke-width=".5"/>
<text x="1328.9" y="895.4000000000001" font-family="Liberation Sans" font-size="6.6" text-anchor="middle" fill="#222">19</text>
<circle cx="1365.5" cy="893.2" r="5.3" fill="#b4b4b4" stroke="#808080" stroke-width=".5"/>
<text x="1365.5" y="895.4000000000001" font-family="Liberation Sans" font-size="6.6" text-anchor="middle" fill="#222">20</text>
<circle cx="1427.1" cy="893.2" r="5.3" fill="#b4b4b4" stroke="#808080" stroke-width=".5"/>
<text x="1427.1" y="895.4000000000001" font-family="Liberation Sans" font-size="6.6" text-anchor="middle" fill="#222">18</text>
<circle cx="1464.0" cy="893.2" r="5.3" fill="#b4b4b4" stroke="#808080" stroke-width=".5"/>
<text x="1464.0" y="895.4000000000001" font-family="Liberation Sans" font-size="6.6" text-anchor="middle" fill="#222">17</text>
<circle cx="1328.9" cy="942.3" r="5.3" fill="#b4b4b4" stroke="#808080" stroke-width=".5"/>
<text x="1328.9" y="944.5" font-family="Liberation Sans" font-size="6.6" text-anchor="middle" fill="#222">15</text>
<circle cx="1365.5" cy="942.3" r="5.3" fill="#b4b4b4" stroke="#808080" stroke-width=".5"/>
<text x="1365.5" y="944.5" font-family="Liberation Sans" font-size="6.6" text-anchor="middle" fill="#222">16</text>
<circle cx="1427.1" cy="942.3" r="5.3" fill="#b4b4b4" stroke="#808080" stroke-width=".5"/>
<text x="1427.1" y="944.5" font-family="Liberation Sans" font-size="6.6" text-anchor="middle" fill="#222">14</text>
<circle cx="1464.0" cy="942.3" r="5.3" fill="#b4b4b4" stroke="#808080" stroke-width=".5"/>
<text x="1464.0" y="944.5" font-family="Liberation Sans" font-size="6.6" text-anchor="middle" fill="#222">13</text>
</g>
</svg>
<svg style="left:1745px;top:618px" width="120" height="372" viewBox="1745 618 120 372"><rect x="1753.4" y="650.4" width="8.48" height="43.5" fill="#8fd0f7"/><rect x="1761.9" y="650.4" width="8.48" height="43.5" fill="#8fd0f7"/><rect x="1770.4" y="649.7" width="8.48" height="44.2" fill="#8fd0f7"/><rect x="1778.8" y="655.7" width="8.48" height="38.2" fill="#8fd0f7"/><rect x="1787.3" y="689.4" width="8.48" height="4.5" fill="#8fd0f7"/><rect x="1795.8" y="693.9" width="8.48" height="45.7" fill="#8fd0f7"/><rect x="1804.3" y="679.5" width="8.48" height="14.4" fill="#8fd0f7"/><rect x="1812.8" y="654.6" width="8.48" height="39.3" fill="#8fd0f7"/><rect x="1821.2" y="653.5" width="8.48" height="40.4" fill="#8fd0f7"/><rect x="1829.7" y="650.4" width="8.48" height="43.5" fill="#8fd0f7"/><rect x="1838.2" y="650.4" width="8.48" height="43.5" fill="#8fd0f7"/><path d="M1753.4 693.9V650.4H1761.9V650.4H1770.4V649.7H1778.8V655.7H1787.3V689.4H1795.8V739.6H1804.3V679.5H1812.8V654.6H1821.2V653.5H1829.7V650.4H1838.2V650.4H1846.7V693.9" fill="none" stroke="#1a2a3a" stroke-width="1"/><path d="M1753.4 693.9V650.4M1761.9 693.9V650.4M1770.4 693.9V649.7M1778.8 693.9V655.7M1787.3 693.9V689.4M1795.8 693.9V739.6M1804.3 693.9V679.5M1812.8 693.9V654.6M1821.2 693.9V653.5M1829.7 693.9V650.4M1838.2 693.9V650.4" fill="none" stroke="#1a2a3a" stroke-width=".6" stroke-opacity=".7"/><path d="M1753.4 693.9H1846.7" stroke="#1a2a3a" stroke-width=".8"/><rect x="1753.4" y="801.6" width="8.48" height="5.7" fill="#8fd0f7"/><rect x="1761.9" y="795.6" width="8.48" height="11.7" fill="#8fd0f7"/><rect x="1770.4" y="807.3" width="8.48" height="6.8" fill="#8fd0f7"/><rect x="1778.8" y="782.7" width="8.48" height="24.6" fill="#8fd0f7"/><rect x="1787.3" y="807.3" width="8.48" height="12.8" fill="#8fd0f7"/><rect x="1795.8" y="802.7" width="8.48" height="4.5" fill="#8fd0f7"/><rect x="1804.3" y="807.3" width="8.48" height="9.4" fill="#8fd0f7"/><rect x="1812.8" y="783.8" width="8.48" height="23.4" fill="#8fd0f7"/><rect x="1821.2" y="807.3" width="8.48" height="6.0" fill="#8fd0f7"/><rect x="1829.7" y="795.6" width="8.48" height="11.7" fill="#8fd0f7"/><rect x="1838.2" y="801.6" width="8.48" height="5.7" fill="#8fd0f7"/><path d="M1753.4 807.3V801.6H1761.9V795.6H1770.4V814.1H1778.8V782.7H1787.3V820.1H1795.8V802.7H1804.3V816.7H1812.8V783.8H1821.2V813.3H1829.7V795.6H1838.2V801.6H1846.7V807.3" fill="none" stroke="#1a2a3a" stroke-width="1"/><path d="M1753.4 807.3V801.6M1761.9 807.3V795.6M1770.4 807.3V814.1M1778.8 807.3V782.7M1787.3 807.3V820.1M1795.8 807.3V802.7M1804.3 807.3V816.7M1812.8 807.3V783.8M1821.2 807.3V813.3M1829.7 807.3V795.6M1838.2 807.3V801.6" fill="none" stroke="#1a2a3a" stroke-width=".6" stroke-opacity=".7"/><path d="M1753.4 807.3H1846.7" stroke="#1a2a3a" stroke-width=".8"/><rect x="1753.4" y="876.8" width="8.48" height="14.0" fill="#8fd0f7"/><rect x="1761.9" y="866.6" width="8.48" height="10.2" fill="#8fd0f7"/><rect x="1770.4" y="876.1" width="8.48" height="0.8" fill="#8fd0f7"/><rect x="1778.8" y="875.3" width="8.48" height="1.5" fill="#8fd0f7"/><rect x="1787.3" y="876.8" width="8.48" height="5.3" fill="#8fd0f7"/><rect x="1795.8" y="873.8" width="8.48" height="3.0" fill="#8fd0f7"/><rect x="1804.3" y="876.8" width="8.48" height="4.2" fill="#8fd0f7"/><rect x="1812.8" y="873.8" width="8.48" height="3.0" fill="#8fd0f7"/><rect x="1821.2" y="876.1" width="8.48" height="0.8" fill="#8fd0f7"/><rect x="1829.7" y="876.8" width="8.48" height="10.2" fill="#8fd0f7"/><rect x="1838.2" y="862.8" width="8.48" height="14.0" fill="#8fd0f7"/><path d="M1753.4 876.8V890.8H1761.9V866.6H1770.4V876.1H1778.8V875.3H1787.3V882.1H1795.8V873.8H1804.3V881.0H1812.8V873.8H1821.2V876.1H1829.7V887.0H1838.2V862.8H1846.7V876.8" fill="none" stroke="#1a2a3a" stroke-width="1"/><path d="M1753.4 876.8V890.8M1761.9 876.8V866.6M1770.4 876.8V876.1M1778.8 876.8V875.3M1787.3 876.8V882.1M1795.8 876.8V873.8M1804.3 876.8V881.0M1812.8 876.8V873.8M1821.2 876.8V876.1M1829.7 876.8V887.0M1838.2 876.8V862.8" fill="none" stroke="#1a2a3a" stroke-width=".6" stroke-opacity=".7"/><path d="M1753.4 876.8H1846.7" stroke="#1a2a3a" stroke-width=".8"/><rect x="1753.4" y="933.1" width="8.48" height="46.1" fill="#b6ea52"/><rect x="1761.9" y="933.1" width="8.48" height="46.1" fill="#b6ea52"/><rect x="1770.4" y="934.3" width="8.48" height="45.0" fill="#b6ea52"/><rect x="1778.8" y="933.1" width="8.48" height="46.1" fill="#b6ea52"/><rect x="1787.3" y="964.1" width="8.48" height="15.1" fill="#c3c3c3"/><rect x="1795.8" y="933.1" width="8.48" height="46.1" fill="#b6ea52"/><rect x="1804.3" y="961.5" width="8.48" height="17.8" fill="#c3c3c3"/><rect x="1812.8" y="933.1" width="8.48" height="46.1" fill="#b6ea52"/><rect x="1821.2" y="938.0" width="8.48" height="41.2" fill="#b6ea52"/><rect x="1829.7" y="933.1" width="8.48" height="46.1" fill="#b6ea52"/><rect x="1838.2" y="933.1" width="8.48" height="46.1" fill="#b6ea52"/><path d="M1753.4 979.2V933.1H1761.9V933.1H1770.4V934.3H1778.8V933.1H1787.3V964.1H1795.8V933.1H1804.3V961.5H1812.8V933.1H1821.2V938.0H1829.7V933.1H1838.2V933.1H1846.7V979.2" fill="none" stroke="#5a6a3a" stroke-width="1"/><path d="M1753.4 979.2V933.1M1761.9 979.2V933.1M1770.4 979.2V934.3M1778.8 979.2V933.1M1787.3 979.2V964.1M1795.8 979.2V933.1M1804.3 979.2V961.5M1812.8 979.2V933.1M1821.2 979.2V938.0M1829.7 979.2V933.1M1838.2 979.2V933.1" fill="none" stroke="#5a6a3a" stroke-width=".6" stroke-opacity=".7"/><path d="M1753.4 979.2H1846.7" stroke="#5a6a3a" stroke-width=".8"/></svg>
<div class="cl" style="left:1754px;top:622px">σ⊥ [ksi]</div>
<div class="cl" style="left:1771px;top:639px">22.7</div>
<div class="cl" style="left:1796px;top:739px">-23.5</div>
<div class="cl" style="left:1754px;top:754px">τ⊥ [ksi]</div>
<div class="cl" style="left:1779px;top:771px">12.8</div>
<div class="cl" style="left:1787px;top:820px">-7.0</div>
<div class="cl" style="left:1754px;top:835px">τ∥ [ksi]</div>
<div class="cl" style="left:1824px;top:852px">7.2</div>
<div class="cl" style="left:1753px;top:891px">-7.3</div>
<div class="cl" style="left:1754px;top:906px">Equivalent stress [ksi]</div>
<div class="cl" style="left:1811px;top:922px">23.7</div>
<div class="cl" style="left:1787px;top:953px">8.0</div>
<div id="status"></div>
<div class="st stg" style="left:23px">Design code:</div><div class="st stw" style="left:99px">AISC - LRFD (2022)</div>
<div class="st stg" style="left:224px">Analysis:</div><div class="st stw" style="left:275px">Stress, strain</div>
<div class="st stg" style="left:366px">Load effects:</div><div class="st stw" style="left:443px">In equilibrium</div>
<div class="st stg" style="left:540px">Units:</div><div class="st stw" style="left:578px">in</div>
<div class="st" style="left:1797px;font-size:12.2px;color:#fff"><span style="color:#f26d21">www.</span>ideastatica<span style="color:#f26d21">.com</span></div>
</body></html>
